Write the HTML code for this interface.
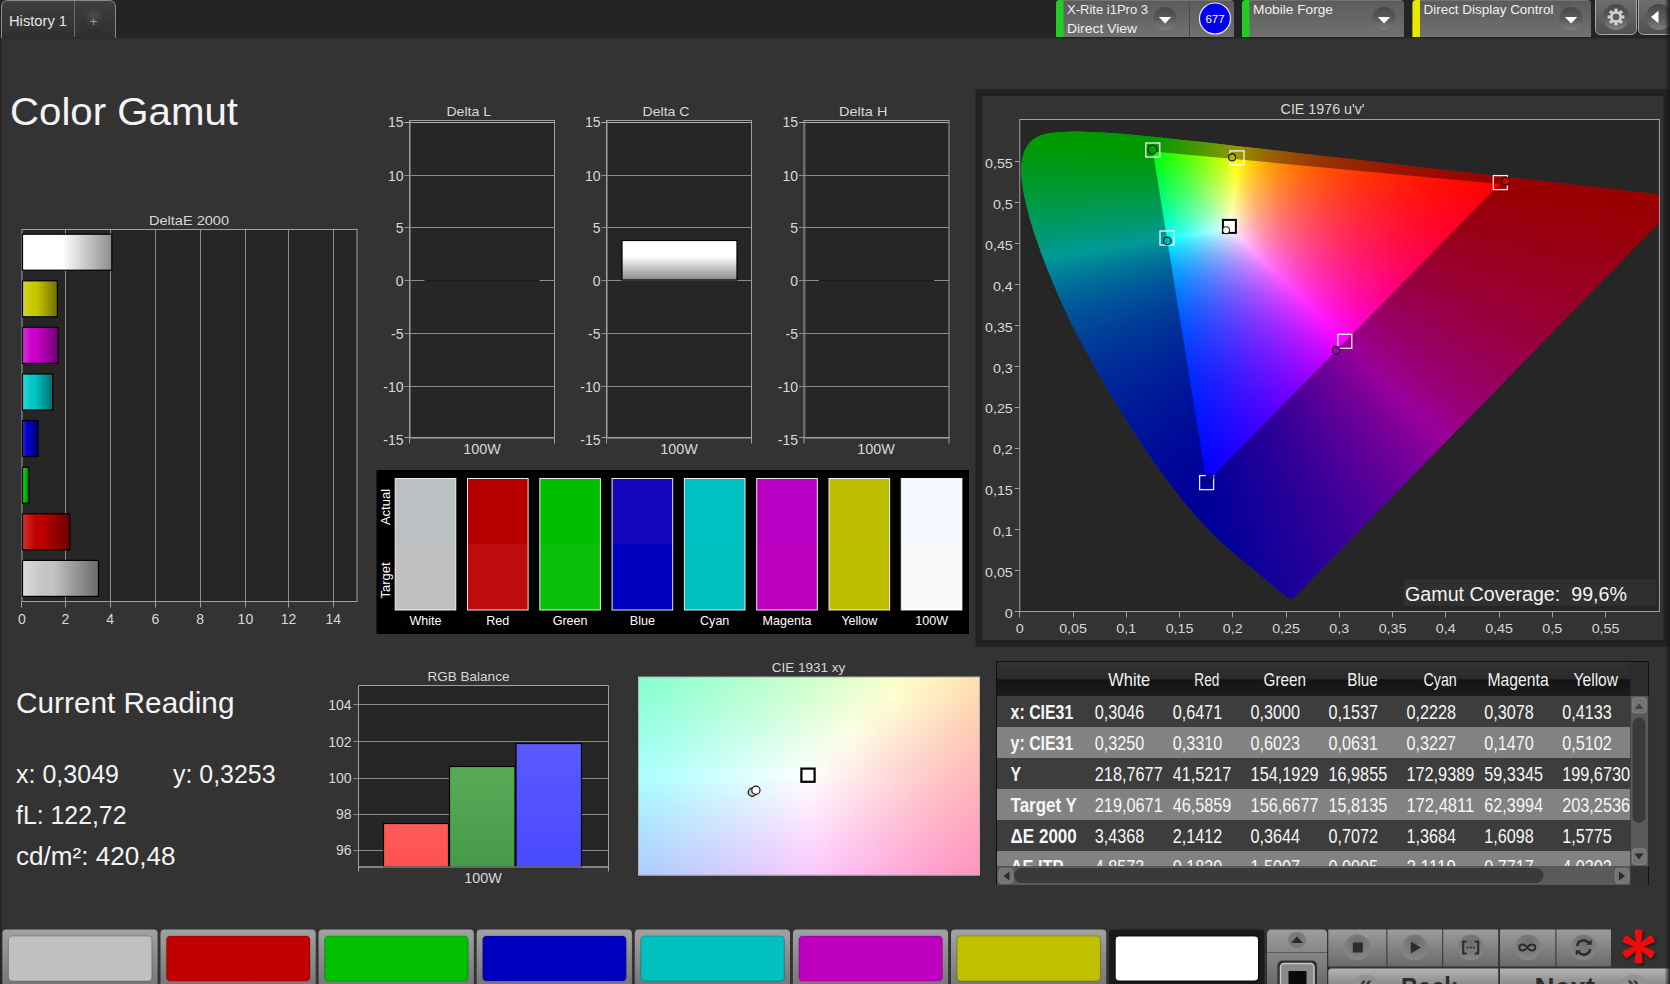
<!DOCTYPE html>
<html lang="en"><head><meta charset="utf-8"><title>Color Gamut</title>
<style>html,body{margin:0;padding:0;background:#333;overflow:hidden}svg text{white-space:pre}</style>
</head><body>
<svg width="1670" height="984" viewBox="0 0 1670 984" font-family='"Liberation Sans", sans-serif' style="display:block">
<defs>
<linearGradient id="tabg" x1="0" y1="0" x2="0" y2="1"><stop offset="0" stop-color="#3e3e3e"/><stop offset="1" stop-color="#303030"/></linearGradient>
<radialGradient id="plusg" cx="0.5" cy="0.3" r="0.7"><stop offset="0" stop-color="#4a4a4a"/><stop offset="1" stop-color="#2c2c2c"/></radialGradient>
<linearGradient id="devg" x1="0" y1="0" x2="0" y2="1"><stop offset="0" stop-color="#808080"/><stop offset="0.035" stop-color="#5c5c5c"/><stop offset="1" stop-color="#717171"/></linearGradient>
<linearGradient id="ddg" x1="0" y1="0" x2="0" y2="1"><stop offset="0" stop-color="#474747"/><stop offset="0.55" stop-color="#5c5c5c"/><stop offset="1" stop-color="#7e7e7e"/></linearGradient>
<linearGradient id="btng" x1="0" y1="0" x2="0" y2="1"><stop offset="0" stop-color="#727272"/><stop offset="1" stop-color="#505050"/></linearGradient>
<linearGradient id="de0" x1="0" y1="0" x2="1" y2="0"><stop offset="0" stop-color="#ffffff"/><stop offset="0.28" stop-color="#ffffff"/><stop offset="0.45" stop-color="#ffffff"/><stop offset="1" stop-color="#8c8c8c"/></linearGradient>
<linearGradient id="de1" x1="0" y1="0" x2="1" y2="0"><stop offset="0" stop-color="#d4d430"/><stop offset="0.28" stop-color="#c8c800"/><stop offset="0.4" stop-color="#c8c800"/><stop offset="1" stop-color="#6e6e00"/></linearGradient>
<linearGradient id="de2" x1="0" y1="0" x2="1" y2="0"><stop offset="0" stop-color="#d430d4"/><stop offset="0.28" stop-color="#c800c8"/><stop offset="0.4" stop-color="#c800c8"/><stop offset="1" stop-color="#6e006e"/></linearGradient>
<linearGradient id="de3" x1="0" y1="0" x2="1" y2="0"><stop offset="0" stop-color="#30d4d4"/><stop offset="0.28" stop-color="#00c8c8"/><stop offset="0.4" stop-color="#00c8c8"/><stop offset="1" stop-color="#006e6e"/></linearGradient>
<linearGradient id="de4" x1="0" y1="0" x2="1" y2="0"><stop offset="0" stop-color="#3030d4"/><stop offset="0.28" stop-color="#0000c8"/><stop offset="0.4" stop-color="#0000c8"/><stop offset="1" stop-color="#00006e"/></linearGradient>
<linearGradient id="de5" x1="0" y1="0" x2="1" y2="0"><stop offset="0" stop-color="#30d430"/><stop offset="0.28" stop-color="#00c800"/><stop offset="0.4" stop-color="#00c800"/><stop offset="1" stop-color="#006e00"/></linearGradient>
<linearGradient id="de6" x1="0" y1="0" x2="1" y2="0"><stop offset="0" stop-color="#d03030"/><stop offset="0.28" stop-color="#c00000"/><stop offset="0.4" stop-color="#c00000"/><stop offset="1" stop-color="#6a0000"/></linearGradient>
<linearGradient id="de7" x1="0" y1="0" x2="1" y2="0"><stop offset="0" stop-color="#dcdcdc"/><stop offset="0.28" stop-color="#c4c4c4"/><stop offset="0.4" stop-color="#c4c4c4"/><stop offset="1" stop-color="#6a6a6a"/></linearGradient>
<linearGradient id="dcb" x1="0" y1="0" x2="0" y2="1"><stop offset="0" stop-color="#ffffff"/><stop offset="0.4" stop-color="#ffffff"/><stop offset="1" stop-color="#8a8a8a"/></linearGradient>
<clipPath id="cp"><rect x="1019.8" y="119.5" width="639.6000000000001" height="492.0"/></clipPath>
<clipPath id="cl" clip-path="url(#cp)"><polygon points="1293.4,598.1 1293.3,598.1 1293.2,598.1 1293.1,598.1 1293.0,598.2 1292.9,598.3 1292.7,598.2 1292.5,598.2 1292.4,598.3 1292.3,598.5 1292.2,598.6 1292.0,598.6 1291.8,598.6 1291.5,598.6 1291.1,598.6 1290.8,598.6 1290.5,598.6 1290.1,598.5 1289.7,598.4 1289.2,598.2 1288.4,597.8 1287.4,597.2 1286.3,596.4 1285.0,595.5 1283.6,594.4 1281.9,593.1 1279.9,591.6 1277.7,589.8 1275.3,587.8 1272.7,585.5 1269.8,583.1 1266.6,580.4 1263.1,577.5 1259.1,574.2 1254.8,570.6 1250.0,566.6 1244.8,562.4 1239.3,557.8 1233.2,552.6 1226.7,546.8 1219.7,540.3 1212.2,533.2 1204.2,524.8 1195.1,514.8 1184.7,502.4 1173.3,488.1 1161.2,472.0 1148.5,454.0 1135.2,434.2 1121.7,412.7 1108.0,390.1 1094.5,366.8 1081.5,343.1 1069.5,319.5 1059.0,296.7 1049.8,274.9 1041.8,254.4 1035.2,235.8 1030.0,219.2 1026.2,204.7 1023.5,191.9 1021.9,180.9 1021.3,171.5 1021.6,163.4 1022.7,156.4 1024.7,150.4 1027.5,145.4 1030.9,141.3 1035.0,138.2 1039.5,135.8 1044.4,134.2 1049.7,133.1 1055.3,132.4 1061.1,132.0 1067.1,131.7 1073.1,131.6 1079.2,131.6 1085.2,131.7 1091.4,131.9 1097.7,132.2 1104.2,132.6 1110.8,133.0 1117.7,133.5 1124.8,134.1 1132.2,134.7 1139.8,135.5 1147.8,136.2 1156.0,137.1 1164.6,138.0 1173.5,138.9 1182.9,140.0 1192.6,141.0 1202.7,142.1 1213.2,143.3 1224.1,144.6 1235.5,145.9 1247.4,147.2 1259.7,148.6 1272.4,150.1 1285.6,151.6 1299.2,153.2 1313.2,154.8 1327.6,156.4 1342.4,158.1 1357.5,159.8 1372.8,161.6 1388.4,163.4 1404.1,165.2 1419.5,167.0 1434.6,168.7 1449.5,170.4 1464.5,172.1 1479.1,173.8 1493.2,175.4 1506.6,177.0 1519.4,178.4 1531.7,179.8 1543.2,181.2 1554.1,182.4 1564.3,183.6 1573.8,184.7 1582.7,185.7 1590.9,186.6 1598.6,187.5 1605.7,188.3 1612.5,189.1 1618.9,189.8 1624.9,190.5 1630.6,191.2 1635.8,191.8 1640.7,192.3 1645.2,192.9 1649.4,193.3 1653.1,193.8 1656.4,194.1 1659.3,194.5 1662.0,194.8 1664.5,195.1 1666.6,195.3 1668.6,195.5 1670.3,195.7 1671.7,195.9 1672.9,196.0 1674.0,196.2 1675.0,196.3 1676.0,196.4 1676.9,196.5 1677.7,196.6 1678.4,196.7 1679.3,196.8 1680.0,196.9 1680.8,197.0 1681.5,197.0 1682.1,197.1 1682.5,197.2 1682.8,197.2 1683.1,197.2 1683.3,197.2 1683.5,197.3 1683.6,197.3 1683.7,197.3"/></clipPath>
<linearGradient id="c0" gradientUnits="userSpaceOnUse" x1="1049" x2="1113" y1="0" y2="0"><stop offset="0.000" stop-color="#00ff00"/><stop offset="0.333" stop-color="#00ff00"/><stop offset="0.667" stop-color="#00ff00"/><stop offset="1.000" stop-color="#00ff00"/></linearGradient>
<linearGradient id="c1" gradientUnits="userSpaceOnUse" x1="1041" x2="1137" y1="0" y2="0"><stop offset="0.000" stop-color="#00ff00"/><stop offset="0.250" stop-color="#00ff00"/><stop offset="0.500" stop-color="#00ff00"/><stop offset="0.750" stop-color="#00ff00"/><stop offset="0.985" stop-color="#00ff00"/></linearGradient>
<linearGradient id="c2" gradientUnits="userSpaceOnUse" x1="1036" x2="1157" y1="0" y2="0"><stop offset="0.000" stop-color="#00ff00"/><stop offset="0.200" stop-color="#00ff00"/><stop offset="0.400" stop-color="#00ff00"/><stop offset="0.600" stop-color="#00ff00"/><stop offset="0.800" stop-color="#00ff00"/><stop offset="0.839" stop-color="#00ff00"/><stop offset="0.947" stop-color="#00ff00"/><stop offset="1.000" stop-color="#0eff00"/></linearGradient>
<linearGradient id="c3" gradientUnits="userSpaceOnUse" x1="1033" x2="1176" y1="0" y2="0"><stop offset="0.000" stop-color="#00ff00"/><stop offset="0.167" stop-color="#00ff00"/><stop offset="0.333" stop-color="#00ff00"/><stop offset="0.500" stop-color="#00ff00"/><stop offset="0.667" stop-color="#00ff00"/><stop offset="0.745" stop-color="#00ff00"/><stop offset="0.825" stop-color="#00ff00"/><stop offset="1.000" stop-color="#3cff00"/></linearGradient>
<linearGradient id="c4" gradientUnits="userSpaceOnUse" x1="1030" x2="1194" y1="0" y2="0"><stop offset="0.000" stop-color="#00ff00"/><stop offset="0.143" stop-color="#00ff00"/><stop offset="0.286" stop-color="#00ff00"/><stop offset="0.429" stop-color="#00ff00"/><stop offset="0.571" stop-color="#00ff00"/><stop offset="0.680" stop-color="#00ff00"/><stop offset="0.714" stop-color="#00ff00"/><stop offset="0.739" stop-color="#00ff00"/><stop offset="0.857" stop-color="#2eff00"/><stop offset="1.000" stop-color="#6cff00"/></linearGradient>
<linearGradient id="c5" gradientUnits="userSpaceOnUse" x1="1028" x2="1212" y1="0" y2="0"><stop offset="0.000" stop-color="#00ff04"/><stop offset="0.125" stop-color="#00ff00"/><stop offset="0.250" stop-color="#00ff00"/><stop offset="0.375" stop-color="#00ff00"/><stop offset="0.500" stop-color="#00ff00"/><stop offset="0.625" stop-color="#00ff00"/><stop offset="0.672" stop-color="#00ff00"/><stop offset="0.750" stop-color="#22ff00"/><stop offset="0.875" stop-color="#5eff00"/><stop offset="1.000" stop-color="#a2ff00"/></linearGradient>
<linearGradient id="c6" gradientUnits="userSpaceOnUse" x1="1027" x2="1230" y1="0" y2="0"><stop offset="0.000" stop-color="#00ff07"/><stop offset="0.125" stop-color="#00ff03"/><stop offset="0.227" stop-color="#00ff00"/><stop offset="0.250" stop-color="#00ff00"/><stop offset="0.375" stop-color="#00ff00"/><stop offset="0.500" stop-color="#00ff00"/><stop offset="0.584" stop-color="#00ff00"/><stop offset="0.615" stop-color="#00ff00"/><stop offset="0.625" stop-color="#05ff00"/><stop offset="0.750" stop-color="#43ff00"/><stop offset="0.875" stop-color="#8bff00"/><stop offset="1.000" stop-color="#dfff00"/></linearGradient>
<linearGradient id="c7" gradientUnits="userSpaceOnUse" x1="1025" x2="1247" y1="0" y2="0"><stop offset="0.000" stop-color="#00ff0a"/><stop offset="0.111" stop-color="#00ff07"/><stop offset="0.222" stop-color="#00ff03"/><stop offset="0.313" stop-color="#00ff00"/><stop offset="0.333" stop-color="#00ff00"/><stop offset="0.444" stop-color="#00ff00"/><stop offset="0.552" stop-color="#00ff00"/><stop offset="0.573" stop-color="#00ff00"/><stop offset="0.667" stop-color="#32ff00"/><stop offset="0.778" stop-color="#76ff00"/><stop offset="0.889" stop-color="#c5ff00"/><stop offset="0.961" stop-color="#ffff00"/><stop offset="1.000" stop-color="#ffe100"/></linearGradient>
<linearGradient id="c8" gradientUnits="userSpaceOnUse" x1="1024" x2="1265" y1="0" y2="0"><stop offset="0.000" stop-color="#00ff0e"/><stop offset="0.100" stop-color="#00ff0b"/><stop offset="0.200" stop-color="#00ff07"/><stop offset="0.300" stop-color="#00ff03"/><stop offset="0.381" stop-color="#00ff00"/><stop offset="0.400" stop-color="#00ff00"/><stop offset="0.500" stop-color="#00ff00"/><stop offset="0.521" stop-color="#00ff00"/><stop offset="0.533" stop-color="#00ff00"/><stop offset="0.600" stop-color="#27ff00"/><stop offset="0.700" stop-color="#68ff00"/><stop offset="0.800" stop-color="#b2ff00"/><stop offset="0.889" stop-color="#ffff00"/><stop offset="0.900" stop-color="#fff500"/><stop offset="1.000" stop-color="#ffb100"/></linearGradient>
<linearGradient id="c9" gradientUnits="userSpaceOnUse" x1="1023" x2="1282" y1="0" y2="0"><stop offset="0.000" stop-color="#00ff11"/><stop offset="0.100" stop-color="#00ff0e"/><stop offset="0.200" stop-color="#00ff0a"/><stop offset="0.300" stop-color="#00ff07"/><stop offset="0.400" stop-color="#00ff02"/><stop offset="0.441" stop-color="#00ff00"/><stop offset="0.497" stop-color="#00ff00"/><stop offset="0.600" stop-color="#40ff00"/><stop offset="0.700" stop-color="#8aff00"/><stop offset="0.800" stop-color="#e1ff00"/><stop offset="0.830" stop-color="#ffff00"/><stop offset="0.900" stop-color="#ffc600"/><stop offset="1.000" stop-color="#ff8f00"/></linearGradient>
<linearGradient id="c10" gradientUnits="userSpaceOnUse" x1="1023" x2="1299" y1="0" y2="0"><stop offset="0.000" stop-color="#00ff15"/><stop offset="0.091" stop-color="#00ff12"/><stop offset="0.182" stop-color="#00ff0e"/><stop offset="0.273" stop-color="#00ff0b"/><stop offset="0.364" stop-color="#00ff07"/><stop offset="0.455" stop-color="#00ff02"/><stop offset="0.472" stop-color="#00ff01"/><stop offset="0.492" stop-color="#0dff00"/><stop offset="0.545" stop-color="#32ff00"/><stop offset="0.636" stop-color="#79ff00"/><stop offset="0.727" stop-color="#cbff00"/><stop offset="0.779" stop-color="#ffff00"/><stop offset="0.818" stop-color="#ffd900"/><stop offset="0.909" stop-color="#ff9d00"/><stop offset="1.000" stop-color="#ff7500"/></linearGradient>
<linearGradient id="c11" gradientUnits="userSpaceOnUse" x1="1022" x2="1317" y1="0" y2="0"><stop offset="0.000" stop-color="#00ff18"/><stop offset="0.083" stop-color="#00ff15"/><stop offset="0.167" stop-color="#00ff12"/><stop offset="0.250" stop-color="#00ff0f"/><stop offset="0.333" stop-color="#00ff0b"/><stop offset="0.417" stop-color="#00ff07"/><stop offset="0.446" stop-color="#00ff05"/><stop offset="0.453" stop-color="#05ff05"/><stop offset="0.500" stop-color="#27ff02"/><stop offset="0.536" stop-color="#43ff00"/><stop offset="0.583" stop-color="#6bff00"/><stop offset="0.667" stop-color="#b9ff00"/><stop offset="0.731" stop-color="#ffff00"/><stop offset="0.750" stop-color="#ffeb00"/><stop offset="0.833" stop-color="#ffa800"/><stop offset="0.917" stop-color="#ff7e00"/><stop offset="1.000" stop-color="#ff6000"/></linearGradient>
<linearGradient id="c12" gradientUnits="userSpaceOnUse" x1="1021" x2="1334" y1="0" y2="0"><stop offset="0.000" stop-color="#00ff1b"/><stop offset="0.077" stop-color="#00ff19"/><stop offset="0.154" stop-color="#00ff16"/><stop offset="0.231" stop-color="#00ff13"/><stop offset="0.308" stop-color="#00ff10"/><stop offset="0.385" stop-color="#00ff0c"/><stop offset="0.424" stop-color="#00ff0a"/><stop offset="0.437" stop-color="#09ff09"/><stop offset="0.462" stop-color="#1cff08"/><stop offset="0.538" stop-color="#5dff03"/><stop offset="0.577" stop-color="#81ff00"/><stop offset="0.615" stop-color="#a8ff00"/><stop offset="0.692" stop-color="#ffff00"/><stop offset="0.769" stop-color="#ffb500"/><stop offset="0.846" stop-color="#ff8700"/><stop offset="0.923" stop-color="#ff6700"/><stop offset="1.000" stop-color="#ff4f00"/></linearGradient>
<linearGradient id="c13" gradientUnits="userSpaceOnUse" x1="1021" x2="1352" y1="0" y2="0"><stop offset="0.000" stop-color="#00ff1f"/><stop offset="0.077" stop-color="#00ff1c"/><stop offset="0.154" stop-color="#00ff1a"/><stop offset="0.231" stop-color="#00ff17"/><stop offset="0.308" stop-color="#00ff13"/><stop offset="0.385" stop-color="#00ff0f"/><stop offset="0.402" stop-color="#00ff0e"/><stop offset="0.419" stop-color="#0dff0d"/><stop offset="0.462" stop-color="#31ff0b"/><stop offset="0.538" stop-color="#7aff06"/><stop offset="0.610" stop-color="#c9ff00"/><stop offset="0.615" stop-color="#cfff00"/><stop offset="0.654" stop-color="#ffff00"/><stop offset="0.692" stop-color="#ffd300"/><stop offset="0.769" stop-color="#ff9700"/><stop offset="0.846" stop-color="#ff7000"/><stop offset="0.923" stop-color="#ff5500"/><stop offset="1.000" stop-color="#ff4000"/></linearGradient>
<linearGradient id="c14" gradientUnits="userSpaceOnUse" x1="1021" x2="1369" y1="0" y2="0"><stop offset="0.000" stop-color="#00ff22"/><stop offset="0.071" stop-color="#00ff20"/><stop offset="0.143" stop-color="#00ff1e"/><stop offset="0.214" stop-color="#00ff1b"/><stop offset="0.286" stop-color="#00ff18"/><stop offset="0.357" stop-color="#00ff14"/><stop offset="0.384" stop-color="#00ff13"/><stop offset="0.404" stop-color="#12ff12"/><stop offset="0.429" stop-color="#27ff10"/><stop offset="0.500" stop-color="#6dff0c"/><stop offset="0.571" stop-color="#beff06"/><stop offset="0.621" stop-color="#ffff02"/><stop offset="0.642" stop-color="#ffe400"/><stop offset="0.714" stop-color="#ffa200"/><stop offset="0.786" stop-color="#ff7800"/><stop offset="0.857" stop-color="#ff5b00"/><stop offset="0.929" stop-color="#ff4600"/><stop offset="1.000" stop-color="#ff3500"/></linearGradient>
<linearGradient id="c15" gradientUnits="userSpaceOnUse" x1="1020" x2="1387" y1="0" y2="0"><stop offset="0.000" stop-color="#00ff26"/><stop offset="0.067" stop-color="#00ff24"/><stop offset="0.133" stop-color="#00ff21"/><stop offset="0.200" stop-color="#00ff1f"/><stop offset="0.267" stop-color="#00ff1c"/><stop offset="0.333" stop-color="#00ff19"/><stop offset="0.367" stop-color="#00ff17"/><stop offset="0.392" stop-color="#16ff16"/><stop offset="0.400" stop-color="#1eff15"/><stop offset="0.467" stop-color="#62ff11"/><stop offset="0.533" stop-color="#b0ff0d"/><stop offset="0.591" stop-color="#ffff08"/><stop offset="0.600" stop-color="#fff207"/><stop offset="0.667" stop-color="#ffac00"/><stop offset="0.733" stop-color="#ff7f00"/><stop offset="0.800" stop-color="#ff6000"/><stop offset="0.867" stop-color="#ff4a00"/><stop offset="0.933" stop-color="#ff3800"/><stop offset="1.000" stop-color="#ff2b00"/></linearGradient>
<linearGradient id="c16" gradientUnits="userSpaceOnUse" x1="1020" x2="1404" y1="0" y2="0"><stop offset="0.000" stop-color="#00ff29"/><stop offset="0.067" stop-color="#00ff27"/><stop offset="0.133" stop-color="#00ff25"/><stop offset="0.200" stop-color="#00ff23"/><stop offset="0.267" stop-color="#00ff20"/><stop offset="0.333" stop-color="#00ff1d"/><stop offset="0.352" stop-color="#00ff1c"/><stop offset="0.380" stop-color="#1aff1a"/><stop offset="0.400" stop-color="#2fff19"/><stop offset="0.467" stop-color="#7aff15"/><stop offset="0.533" stop-color="#d1ff10"/><stop offset="0.564" stop-color="#ffff0e"/><stop offset="0.600" stop-color="#ffd009"/><stop offset="0.667" stop-color="#ff9402"/><stop offset="0.696" stop-color="#ff8100"/><stop offset="0.733" stop-color="#ff6d00"/><stop offset="0.800" stop-color="#ff5200"/><stop offset="0.867" stop-color="#ff3e00"/><stop offset="0.933" stop-color="#ff2f00"/><stop offset="1.000" stop-color="#ff2200"/></linearGradient>
<linearGradient id="c17" gradientUnits="userSpaceOnUse" x1="1020" x2="1421" y1="0" y2="0"><stop offset="0.000" stop-color="#00ff2d"/><stop offset="0.062" stop-color="#00ff2b"/><stop offset="0.125" stop-color="#00ff29"/><stop offset="0.188" stop-color="#00ff27"/><stop offset="0.250" stop-color="#00ff24"/><stop offset="0.312" stop-color="#00ff22"/><stop offset="0.338" stop-color="#00ff21"/><stop offset="0.368" stop-color="#1fff1f"/><stop offset="0.375" stop-color="#26ff1f"/><stop offset="0.438" stop-color="#6eff1b"/><stop offset="0.500" stop-color="#c1ff17"/><stop offset="0.540" stop-color="#ffff14"/><stop offset="0.562" stop-color="#ffde10"/><stop offset="0.625" stop-color="#ff9e07"/><stop offset="0.688" stop-color="#ff7402"/><stop offset="0.720" stop-color="#ff6400"/><stop offset="0.750" stop-color="#ff5800"/><stop offset="0.812" stop-color="#ff4200"/><stop offset="0.875" stop-color="#ff3200"/><stop offset="0.938" stop-color="#ff2500"/><stop offset="1.000" stop-color="#ff1b00"/></linearGradient>
<linearGradient id="c18" gradientUnits="userSpaceOnUse" x1="1020" x2="1439" y1="0" y2="0"><stop offset="0.000" stop-color="#00ff30"/><stop offset="0.059" stop-color="#00ff2f"/><stop offset="0.118" stop-color="#00ff2d"/><stop offset="0.176" stop-color="#00ff2b"/><stop offset="0.235" stop-color="#00ff29"/><stop offset="0.294" stop-color="#00ff27"/><stop offset="0.324" stop-color="#00ff25"/><stop offset="0.353" stop-color="#1fff24"/><stop offset="0.357" stop-color="#24ff24"/><stop offset="0.412" stop-color="#64ff21"/><stop offset="0.471" stop-color="#b6ff1d"/><stop offset="0.516" stop-color="#ffff1a"/><stop offset="0.529" stop-color="#ffea17"/><stop offset="0.588" stop-color="#ffa60d"/><stop offset="0.647" stop-color="#ff7a06"/><stop offset="0.706" stop-color="#ff5c02"/><stop offset="0.740" stop-color="#ff4e00"/><stop offset="0.765" stop-color="#ff4600"/><stop offset="0.824" stop-color="#ff3500"/><stop offset="0.882" stop-color="#ff2800"/><stop offset="0.941" stop-color="#ff1d00"/><stop offset="1.000" stop-color="#ff1400"/></linearGradient>
<linearGradient id="c19" gradientUnits="userSpaceOnUse" x1="1020" x2="1456" y1="0" y2="0"><stop offset="0.000" stop-color="#00ff34"/><stop offset="0.059" stop-color="#00ff32"/><stop offset="0.118" stop-color="#00ff31"/><stop offset="0.176" stop-color="#00ff2f"/><stop offset="0.235" stop-color="#00ff2d"/><stop offset="0.294" stop-color="#00ff2b"/><stop offset="0.312" stop-color="#00ff2a"/><stop offset="0.348" stop-color="#28ff28"/><stop offset="0.353" stop-color="#2eff28"/><stop offset="0.412" stop-color="#7aff25"/><stop offset="0.471" stop-color="#d4ff22"/><stop offset="0.496" stop-color="#ffff20"/><stop offset="0.529" stop-color="#ffcc18"/><stop offset="0.588" stop-color="#ff910e"/><stop offset="0.647" stop-color="#ff6b08"/><stop offset="0.706" stop-color="#ff5003"/><stop offset="0.760" stop-color="#ff3d00"/><stop offset="0.765" stop-color="#ff3c00"/><stop offset="0.824" stop-color="#ff2c00"/><stop offset="0.882" stop-color="#ff2000"/><stop offset="0.941" stop-color="#ff1600"/><stop offset="1.000" stop-color="#ff0e00"/></linearGradient>
<linearGradient id="c20" gradientUnits="userSpaceOnUse" x1="1020" x2="1474" y1="0" y2="0"><stop offset="0.000" stop-color="#00ff37"/><stop offset="0.056" stop-color="#00ff36"/><stop offset="0.111" stop-color="#00ff35"/><stop offset="0.167" stop-color="#00ff33"/><stop offset="0.222" stop-color="#00ff32"/><stop offset="0.278" stop-color="#00ff30"/><stop offset="0.301" stop-color="#00ff2f"/><stop offset="0.333" stop-color="#27ff2e"/><stop offset="0.339" stop-color="#2dff2d"/><stop offset="0.389" stop-color="#70ff2b"/><stop offset="0.444" stop-color="#c7ff28"/><stop offset="0.476" stop-color="#ffff26"/><stop offset="0.500" stop-color="#ffd71f"/><stop offset="0.556" stop-color="#ff9813"/><stop offset="0.611" stop-color="#ff700c"/><stop offset="0.667" stop-color="#ff5407"/><stop offset="0.722" stop-color="#ff3f03"/><stop offset="0.777" stop-color="#ff2f00"/><stop offset="0.833" stop-color="#ff2200"/><stop offset="0.889" stop-color="#ff1800"/><stop offset="0.944" stop-color="#ff1000"/><stop offset="1.000" stop-color="#ff0900"/></linearGradient>
<linearGradient id="c21" gradientUnits="userSpaceOnUse" x1="1020" x2="1491" y1="0" y2="0"><stop offset="0.000" stop-color="#00ff3b"/><stop offset="0.053" stop-color="#00ff3a"/><stop offset="0.105" stop-color="#00ff39"/><stop offset="0.158" stop-color="#00ff38"/><stop offset="0.211" stop-color="#00ff36"/><stop offset="0.263" stop-color="#00ff35"/><stop offset="0.290" stop-color="#00ff34"/><stop offset="0.316" stop-color="#1fff33"/><stop offset="0.331" stop-color="#32ff32"/><stop offset="0.368" stop-color="#67ff31"/><stop offset="0.421" stop-color="#bbff2e"/><stop offset="0.458" stop-color="#ffff2d"/><stop offset="0.474" stop-color="#ffe327"/><stop offset="0.526" stop-color="#ffa019"/><stop offset="0.579" stop-color="#ff7511"/><stop offset="0.632" stop-color="#ff580b"/><stop offset="0.684" stop-color="#ff4206"/><stop offset="0.737" stop-color="#ff3203"/><stop offset="0.789" stop-color="#ff2500"/><stop offset="0.795" stop-color="#ff2400"/><stop offset="0.842" stop-color="#ff1a00"/><stop offset="0.895" stop-color="#ff1200"/><stop offset="0.947" stop-color="#ff0a00"/><stop offset="1.000" stop-color="#ff0400"/></linearGradient>
<linearGradient id="c22" gradientUnits="userSpaceOnUse" x1="1020" x2="1509" y1="0" y2="0"><stop offset="0.000" stop-color="#00ff3e"/><stop offset="0.053" stop-color="#00ff3e"/><stop offset="0.105" stop-color="#00ff3d"/><stop offset="0.158" stop-color="#00ff3c"/><stop offset="0.211" stop-color="#00ff3b"/><stop offset="0.263" stop-color="#00ff39"/><stop offset="0.280" stop-color="#00ff39"/><stop offset="0.316" stop-color="#2eff38"/><stop offset="0.323" stop-color="#37ff37"/><stop offset="0.368" stop-color="#7cff36"/><stop offset="0.421" stop-color="#d8ff34"/><stop offset="0.441" stop-color="#ffff33"/><stop offset="0.474" stop-color="#ffc727"/><stop offset="0.526" stop-color="#ff8d1a"/><stop offset="0.579" stop-color="#ff6711"/><stop offset="0.632" stop-color="#ff4d0b"/><stop offset="0.684" stop-color="#ff3907"/><stop offset="0.737" stop-color="#ff2a04"/><stop offset="0.789" stop-color="#ff1e01"/><stop offset="0.809" stop-color="#ff1a00"/><stop offset="0.842" stop-color="#ff1400"/><stop offset="0.895" stop-color="#ff0c00"/><stop offset="0.947" stop-color="#ff0600"/><stop offset="0.997" stop-color="#ff0000"/></linearGradient>
<linearGradient id="c23" gradientUnits="userSpaceOnUse" x1="1020" x2="1526" y1="0" y2="0"><stop offset="0.000" stop-color="#00ff42"/><stop offset="0.050" stop-color="#00ff41"/><stop offset="0.100" stop-color="#00ff41"/><stop offset="0.150" stop-color="#00ff40"/><stop offset="0.200" stop-color="#00ff3f"/><stop offset="0.250" stop-color="#00ff3e"/><stop offset="0.272" stop-color="#00ff3e"/><stop offset="0.300" stop-color="#26ff3d"/><stop offset="0.316" stop-color="#3dff3d"/><stop offset="0.350" stop-color="#72ff3c"/><stop offset="0.400" stop-color="#cbff3a"/><stop offset="0.426" stop-color="#ffff39"/><stop offset="0.450" stop-color="#ffd22f"/><stop offset="0.500" stop-color="#ff9420"/><stop offset="0.550" stop-color="#ff6c16"/><stop offset="0.600" stop-color="#ff510f"/><stop offset="0.650" stop-color="#ff3c0a"/><stop offset="0.700" stop-color="#ff2d06"/><stop offset="0.750" stop-color="#ff2003"/><stop offset="0.800" stop-color="#ff1601"/><stop offset="0.824" stop-color="#ff1200"/><stop offset="0.850" stop-color="#ff0e00"/><stop offset="0.900" stop-color="#ff0700"/><stop offset="0.950" stop-color="#ff0100"/><stop offset="0.960" stop-color="#ff0000"/><stop offset="1.000" stop-color="#ff0000"/></linearGradient>
<linearGradient id="c24" gradientUnits="userSpaceOnUse" x1="1020" x2="1544" y1="0" y2="0"><stop offset="0.000" stop-color="#00ff46"/><stop offset="0.048" stop-color="#00ff45"/><stop offset="0.095" stop-color="#00ff45"/><stop offset="0.143" stop-color="#00ff44"/><stop offset="0.190" stop-color="#00ff44"/><stop offset="0.238" stop-color="#00ff43"/><stop offset="0.263" stop-color="#00ff43"/><stop offset="0.286" stop-color="#20ff43"/><stop offset="0.309" stop-color="#42ff42"/><stop offset="0.333" stop-color="#6aff42"/><stop offset="0.381" stop-color="#c0ff41"/><stop offset="0.411" stop-color="#ffff40"/><stop offset="0.429" stop-color="#ffdc37"/><stop offset="0.476" stop-color="#ff9a26"/><stop offset="0.524" stop-color="#ff711b"/><stop offset="0.571" stop-color="#ff5413"/><stop offset="0.619" stop-color="#ff3f0e"/><stop offset="0.667" stop-color="#ff2f09"/><stop offset="0.714" stop-color="#ff2206"/><stop offset="0.762" stop-color="#ff1803"/><stop offset="0.810" stop-color="#ff0f01"/><stop offset="0.837" stop-color="#ff0b00"/><stop offset="0.857" stop-color="#ff0800"/><stop offset="0.905" stop-color="#ff0200"/><stop offset="0.923" stop-color="#ff0000"/><stop offset="0.952" stop-color="#ff0000"/><stop offset="0.961" stop-color="#ff0000"/><stop offset="1.000" stop-color="#ff0000"/></linearGradient>
<linearGradient id="c25" gradientUnits="userSpaceOnUse" x1="1021" x2="1561" y1="0" y2="0"><stop offset="0.000" stop-color="#00ff49"/><stop offset="0.048" stop-color="#00ff49"/><stop offset="0.095" stop-color="#00ff49"/><stop offset="0.143" stop-color="#00ff49"/><stop offset="0.190" stop-color="#00ff48"/><stop offset="0.238" stop-color="#00ff48"/><stop offset="0.254" stop-color="#00ff48"/><stop offset="0.286" stop-color="#2fff48"/><stop offset="0.302" stop-color="#48ff48"/><stop offset="0.333" stop-color="#7eff47"/><stop offset="0.381" stop-color="#dcff47"/><stop offset="0.396" stop-color="#ffff47"/><stop offset="0.429" stop-color="#ffc336"/><stop offset="0.476" stop-color="#ff8925"/><stop offset="0.524" stop-color="#ff641b"/><stop offset="0.571" stop-color="#ff4a13"/><stop offset="0.619" stop-color="#ff370e"/><stop offset="0.667" stop-color="#ff280a"/><stop offset="0.714" stop-color="#ff1c07"/><stop offset="0.762" stop-color="#ff1304"/><stop offset="0.810" stop-color="#ff0b02"/><stop offset="0.850" stop-color="#ff0500"/><stop offset="0.857" stop-color="#ff0400"/><stop offset="0.890" stop-color="#ff0000"/><stop offset="0.905" stop-color="#ff0000"/><stop offset="0.908" stop-color="#ff0000"/><stop offset="0.952" stop-color="#ff0000"/><stop offset="1.000" stop-color="#ff0000"/></linearGradient>
<linearGradient id="c26" gradientUnits="userSpaceOnUse" x1="1021" x2="1578" y1="0" y2="0"><stop offset="0.000" stop-color="#00ff4d"/><stop offset="0.045" stop-color="#00ff4d"/><stop offset="0.091" stop-color="#00ff4d"/><stop offset="0.136" stop-color="#00ff4d"/><stop offset="0.182" stop-color="#00ff4d"/><stop offset="0.227" stop-color="#00ff4d"/><stop offset="0.247" stop-color="#00ff4d"/><stop offset="0.273" stop-color="#27ff4d"/><stop offset="0.296" stop-color="#4dff4d"/><stop offset="0.318" stop-color="#75ff4d"/><stop offset="0.364" stop-color="#d0ff4d"/><stop offset="0.384" stop-color="#ffff4d"/><stop offset="0.409" stop-color="#ffcc3e"/><stop offset="0.455" stop-color="#ff8f2c"/><stop offset="0.500" stop-color="#ff6820"/><stop offset="0.545" stop-color="#ff4d18"/><stop offset="0.591" stop-color="#ff3912"/><stop offset="0.636" stop-color="#ff2a0d"/><stop offset="0.682" stop-color="#ff1e09"/><stop offset="0.727" stop-color="#ff1406"/><stop offset="0.773" stop-color="#ff0c04"/><stop offset="0.818" stop-color="#ff0502"/><stop offset="0.859" stop-color="#ff0000"/><stop offset="0.862" stop-color="#ff0000"/><stop offset="0.909" stop-color="#ff0000"/><stop offset="0.955" stop-color="#ff0000"/><stop offset="1.000" stop-color="#ff0000"/></linearGradient>
<linearGradient id="c27" gradientUnits="userSpaceOnUse" x1="1021" x2="1596" y1="0" y2="0"><stop offset="0.000" stop-color="#00ff51"/><stop offset="0.043" stop-color="#00ff51"/><stop offset="0.087" stop-color="#00ff51"/><stop offset="0.130" stop-color="#00ff52"/><stop offset="0.174" stop-color="#00ff52"/><stop offset="0.217" stop-color="#00ff52"/><stop offset="0.240" stop-color="#00ff53"/><stop offset="0.261" stop-color="#21ff53"/><stop offset="0.290" stop-color="#53ff53"/><stop offset="0.304" stop-color="#6dff53"/><stop offset="0.348" stop-color="#c7ff54"/><stop offset="0.372" stop-color="#ffff54"/><stop offset="0.391" stop-color="#ffd446"/><stop offset="0.435" stop-color="#ff9532"/><stop offset="0.478" stop-color="#ff6c25"/><stop offset="0.522" stop-color="#ff501c"/><stop offset="0.565" stop-color="#ff3c15"/><stop offset="0.609" stop-color="#ff2c10"/><stop offset="0.652" stop-color="#ff200c"/><stop offset="0.696" stop-color="#ff1609"/><stop offset="0.739" stop-color="#ff0d06"/><stop offset="0.783" stop-color="#ff0604"/><stop offset="0.811" stop-color="#ff0202"/><stop offset="0.826" stop-color="#ff0002"/><stop offset="0.829" stop-color="#ff0002"/><stop offset="0.870" stop-color="#ff0000"/><stop offset="0.873" stop-color="#ff0000"/><stop offset="0.913" stop-color="#ff0000"/><stop offset="0.957" stop-color="#ff0000"/><stop offset="1.000" stop-color="#ff0000"/></linearGradient>
<linearGradient id="c28" gradientUnits="userSpaceOnUse" x1="1021" x2="1613" y1="0" y2="0"><stop offset="0.000" stop-color="#00ff55"/><stop offset="0.043" stop-color="#00ff55"/><stop offset="0.087" stop-color="#00ff56"/><stop offset="0.130" stop-color="#00ff56"/><stop offset="0.174" stop-color="#00ff57"/><stop offset="0.217" stop-color="#00ff58"/><stop offset="0.233" stop-color="#00ff58"/><stop offset="0.261" stop-color="#2dff59"/><stop offset="0.285" stop-color="#59ff59"/><stop offset="0.304" stop-color="#7eff5a"/><stop offset="0.348" stop-color="#dfff5b"/><stop offset="0.361" stop-color="#ffff5b"/><stop offset="0.391" stop-color="#ffbf45"/><stop offset="0.435" stop-color="#ff8631"/><stop offset="0.478" stop-color="#ff6125"/><stop offset="0.522" stop-color="#ff481c"/><stop offset="0.565" stop-color="#ff3515"/><stop offset="0.609" stop-color="#ff2610"/><stop offset="0.652" stop-color="#ff1a0c"/><stop offset="0.696" stop-color="#ff1109"/><stop offset="0.739" stop-color="#ff0906"/><stop offset="0.767" stop-color="#ff0505"/><stop offset="0.783" stop-color="#ff0304"/><stop offset="0.802" stop-color="#ff0003"/><stop offset="0.826" stop-color="#ff0002"/><stop offset="0.870" stop-color="#ff0000"/><stop offset="0.884" stop-color="#ff0000"/><stop offset="0.913" stop-color="#ff0000"/><stop offset="0.957" stop-color="#ff0000"/><stop offset="1.000" stop-color="#ff0000"/></linearGradient>
<linearGradient id="c29" gradientUnits="userSpaceOnUse" x1="1022" x2="1631" y1="0" y2="0"><stop offset="0.000" stop-color="#00ff59"/><stop offset="0.042" stop-color="#00ff59"/><stop offset="0.083" stop-color="#00ff5a"/><stop offset="0.125" stop-color="#00ff5b"/><stop offset="0.167" stop-color="#00ff5c"/><stop offset="0.208" stop-color="#00ff5d"/><stop offset="0.226" stop-color="#00ff5d"/><stop offset="0.250" stop-color="#29ff5e"/><stop offset="0.279" stop-color="#5fff5f"/><stop offset="0.292" stop-color="#79ff60"/><stop offset="0.333" stop-color="#d8ff61"/><stop offset="0.349" stop-color="#ffff62"/><stop offset="0.375" stop-color="#ffc54d"/><stop offset="0.417" stop-color="#ff8a37"/><stop offset="0.458" stop-color="#ff6429"/><stop offset="0.500" stop-color="#ff4a20"/><stop offset="0.542" stop-color="#ff3619"/><stop offset="0.583" stop-color="#ff2713"/><stop offset="0.625" stop-color="#ff1c0f"/><stop offset="0.667" stop-color="#ff120b"/><stop offset="0.708" stop-color="#ff0a08"/><stop offset="0.724" stop-color="#ff0707"/><stop offset="0.750" stop-color="#ff0406"/><stop offset="0.775" stop-color="#ff0005"/><stop offset="0.792" stop-color="#ff0004"/><stop offset="0.833" stop-color="#ff0002"/><stop offset="0.875" stop-color="#ff0001"/><stop offset="0.893" stop-color="#ff0000"/><stop offset="0.917" stop-color="#ff0000"/><stop offset="0.958" stop-color="#ff0000"/><stop offset="1.000" stop-color="#ff0000"/></linearGradient>
<linearGradient id="c30" gradientUnits="userSpaceOnUse" x1="1022" x2="1648" y1="0" y2="0"><stop offset="0.000" stop-color="#00ff5c"/><stop offset="0.040" stop-color="#00ff5d"/><stop offset="0.080" stop-color="#00ff5e"/><stop offset="0.120" stop-color="#00ff5f"/><stop offset="0.160" stop-color="#00ff61"/><stop offset="0.200" stop-color="#00ff62"/><stop offset="0.220" stop-color="#00ff63"/><stop offset="0.240" stop-color="#23ff64"/><stop offset="0.275" stop-color="#65ff65"/><stop offset="0.280" stop-color="#71ff66"/><stop offset="0.320" stop-color="#cdff68"/><stop offset="0.339" stop-color="#ffff69"/><stop offset="0.360" stop-color="#ffcd56"/><stop offset="0.400" stop-color="#ff8f3e"/><stop offset="0.440" stop-color="#ff682f"/><stop offset="0.480" stop-color="#ff4d24"/><stop offset="0.520" stop-color="#ff391c"/><stop offset="0.560" stop-color="#ff2916"/><stop offset="0.600" stop-color="#ff1d12"/><stop offset="0.640" stop-color="#ff130e"/><stop offset="0.680" stop-color="#ff0b0b"/><stop offset="0.685" stop-color="#ff0a0a"/><stop offset="0.720" stop-color="#ff0508"/><stop offset="0.751" stop-color="#ff0006"/><stop offset="0.760" stop-color="#ff0006"/><stop offset="0.800" stop-color="#ff0004"/><stop offset="0.840" stop-color="#ff0002"/><stop offset="0.880" stop-color="#ff0001"/><stop offset="0.902" stop-color="#ff0000"/><stop offset="0.920" stop-color="#ff0000"/><stop offset="0.960" stop-color="#ff0000"/><stop offset="1.000" stop-color="#ff0000"/></linearGradient>
<linearGradient id="c31" gradientUnits="userSpaceOnUse" x1="1022" x2="1662" y1="0" y2="0"><stop offset="0.000" stop-color="#00ff60"/><stop offset="0.040" stop-color="#00ff62"/><stop offset="0.080" stop-color="#00ff63"/><stop offset="0.120" stop-color="#00ff64"/><stop offset="0.160" stop-color="#00ff66"/><stop offset="0.200" stop-color="#00ff68"/><stop offset="0.216" stop-color="#00ff69"/><stop offset="0.240" stop-color="#2cff6a"/><stop offset="0.272" stop-color="#6cff6c"/><stop offset="0.280" stop-color="#7eff6c"/><stop offset="0.320" stop-color="#e0ff70"/><stop offset="0.331" stop-color="#ffff71"/><stop offset="0.360" stop-color="#ffbd56"/><stop offset="0.400" stop-color="#ff843e"/><stop offset="0.440" stop-color="#ff602f"/><stop offset="0.480" stop-color="#ff4625"/><stop offset="0.520" stop-color="#ff331d"/><stop offset="0.560" stop-color="#ff2517"/><stop offset="0.600" stop-color="#ff1912"/><stop offset="0.640" stop-color="#ff100e"/><stop offset="0.651" stop-color="#ff0d0d"/><stop offset="0.680" stop-color="#ff080b"/><stop offset="0.720" stop-color="#ff0209"/><stop offset="0.731" stop-color="#ff0008"/><stop offset="0.760" stop-color="#ff0006"/><stop offset="0.800" stop-color="#ff0004"/><stop offset="0.840" stop-color="#ff0003"/><stop offset="0.880" stop-color="#ff0001"/><stop offset="0.916" stop-color="#ff0000"/><stop offset="0.920" stop-color="#ff0000"/><stop offset="0.960" stop-color="#ff0000"/><stop offset="1.000" stop-color="#ff0000"/></linearGradient>
<linearGradient id="c32" gradientUnits="userSpaceOnUse" x1="1023" x2="1662" y1="0" y2="0"><stop offset="0.000" stop-color="#00ff64"/><stop offset="0.040" stop-color="#00ff66"/><stop offset="0.080" stop-color="#00ff67"/><stop offset="0.120" stop-color="#00ff69"/><stop offset="0.160" stop-color="#00ff6b"/><stop offset="0.200" stop-color="#00ff6d"/><stop offset="0.215" stop-color="#00ff6e"/><stop offset="0.240" stop-color="#2dff70"/><stop offset="0.274" stop-color="#73ff73"/><stop offset="0.280" stop-color="#80ff73"/><stop offset="0.320" stop-color="#e4ff77"/><stop offset="0.330" stop-color="#ffff78"/><stop offset="0.360" stop-color="#ffbb5a"/><stop offset="0.400" stop-color="#ff8242"/><stop offset="0.440" stop-color="#ff5e32"/><stop offset="0.480" stop-color="#ff4527"/><stop offset="0.520" stop-color="#ff321f"/><stop offset="0.560" stop-color="#ff2419"/><stop offset="0.600" stop-color="#ff1814"/><stop offset="0.632" stop-color="#ff1111"/><stop offset="0.640" stop-color="#ff0f10"/><stop offset="0.680" stop-color="#ff080d"/><stop offset="0.720" stop-color="#ff010a"/><stop offset="0.728" stop-color="#ff000a"/><stop offset="0.760" stop-color="#ff0008"/><stop offset="0.800" stop-color="#ff0006"/><stop offset="0.840" stop-color="#ff0004"/><stop offset="0.880" stop-color="#ff0002"/><stop offset="0.920" stop-color="#ff0001"/><stop offset="0.950" stop-color="#ff0000"/><stop offset="0.960" stop-color="#ff0000"/><stop offset="1.000" stop-color="#ff0000"/></linearGradient>
<linearGradient id="c33" gradientUnits="userSpaceOnUse" x1="1023" x2="1662" y1="0" y2="0"><stop offset="0.000" stop-color="#00ff68"/><stop offset="0.040" stop-color="#00ff6a"/><stop offset="0.080" stop-color="#00ff6c"/><stop offset="0.120" stop-color="#00ff6e"/><stop offset="0.160" stop-color="#00ff70"/><stop offset="0.200" stop-color="#00ff73"/><stop offset="0.215" stop-color="#00ff74"/><stop offset="0.240" stop-color="#2dff76"/><stop offset="0.277" stop-color="#79ff79"/><stop offset="0.280" stop-color="#80ff7a"/><stop offset="0.320" stop-color="#e4ff7e"/><stop offset="0.330" stop-color="#ffff7f"/><stop offset="0.360" stop-color="#ffba60"/><stop offset="0.400" stop-color="#ff8146"/><stop offset="0.440" stop-color="#ff5d36"/><stop offset="0.480" stop-color="#ff442a"/><stop offset="0.520" stop-color="#ff3122"/><stop offset="0.560" stop-color="#ff231b"/><stop offset="0.600" stop-color="#ff1816"/><stop offset="0.613" stop-color="#ff1515"/><stop offset="0.640" stop-color="#ff0f12"/><stop offset="0.680" stop-color="#ff070e"/><stop offset="0.720" stop-color="#ff010c"/><stop offset="0.725" stop-color="#ff000b"/><stop offset="0.760" stop-color="#ff0009"/><stop offset="0.800" stop-color="#ff0007"/><stop offset="0.840" stop-color="#ff0005"/><stop offset="0.880" stop-color="#ff0003"/><stop offset="0.920" stop-color="#ff0002"/><stop offset="0.960" stop-color="#ff0001"/><stop offset="0.983" stop-color="#ff0000"/><stop offset="1.000" stop-color="#ff0000"/></linearGradient>
<linearGradient id="c34" gradientUnits="userSpaceOnUse" x1="1024" x2="1662" y1="0" y2="0"><stop offset="0.000" stop-color="#00ff6c"/><stop offset="0.040" stop-color="#00ff6e"/><stop offset="0.080" stop-color="#00ff70"/><stop offset="0.120" stop-color="#00ff73"/><stop offset="0.160" stop-color="#00ff75"/><stop offset="0.200" stop-color="#00ff79"/><stop offset="0.215" stop-color="#00ff7a"/><stop offset="0.240" stop-color="#2eff7c"/><stop offset="0.279" stop-color="#80ff80"/><stop offset="0.320" stop-color="#e8ff86"/><stop offset="0.328" stop-color="#ffff87"/><stop offset="0.360" stop-color="#ffb764"/><stop offset="0.400" stop-color="#ff804a"/><stop offset="0.440" stop-color="#ff5c39"/><stop offset="0.480" stop-color="#ff432d"/><stop offset="0.520" stop-color="#ff3124"/><stop offset="0.560" stop-color="#ff221d"/><stop offset="0.594" stop-color="#ff1919"/><stop offset="0.600" stop-color="#ff1718"/><stop offset="0.640" stop-color="#ff0e14"/><stop offset="0.680" stop-color="#ff0710"/><stop offset="0.720" stop-color="#ff000d"/><stop offset="0.760" stop-color="#ff000a"/><stop offset="0.800" stop-color="#ff0008"/><stop offset="0.840" stop-color="#ff0006"/><stop offset="0.880" stop-color="#ff0005"/><stop offset="0.920" stop-color="#ff0003"/><stop offset="0.960" stop-color="#ff0002"/><stop offset="1.000" stop-color="#ff0000"/></linearGradient>
<linearGradient id="c35" gradientUnits="userSpaceOnUse" x1="1024" x2="1662" y1="0" y2="0"><stop offset="0.000" stop-color="#00ff71"/><stop offset="0.040" stop-color="#00ff73"/><stop offset="0.080" stop-color="#00ff75"/><stop offset="0.120" stop-color="#00ff78"/><stop offset="0.160" stop-color="#00ff7b"/><stop offset="0.200" stop-color="#00ff7e"/><stop offset="0.215" stop-color="#00ff80"/><stop offset="0.240" stop-color="#2eff82"/><stop offset="0.280" stop-color="#83ff87"/><stop offset="0.320" stop-color="#e9ff8d"/><stop offset="0.328" stop-color="#ffff8e"/><stop offset="0.360" stop-color="#ffb66a"/><stop offset="0.400" stop-color="#ff7f4e"/><stop offset="0.440" stop-color="#ff5b3c"/><stop offset="0.480" stop-color="#ff4230"/><stop offset="0.520" stop-color="#ff3027"/><stop offset="0.560" stop-color="#ff2220"/><stop offset="0.575" stop-color="#ff1d1d"/><stop offset="0.600" stop-color="#ff171a"/><stop offset="0.640" stop-color="#ff0e15"/><stop offset="0.680" stop-color="#ff0612"/><stop offset="0.718" stop-color="#ff000f"/><stop offset="0.760" stop-color="#ff000c"/><stop offset="0.800" stop-color="#ff0009"/><stop offset="0.840" stop-color="#ff0007"/><stop offset="0.880" stop-color="#ff0006"/><stop offset="0.920" stop-color="#ff0004"/><stop offset="0.960" stop-color="#ff0003"/><stop offset="1.000" stop-color="#ff0001"/></linearGradient>
<linearGradient id="c36" gradientUnits="userSpaceOnUse" x1="1025" x2="1662" y1="0" y2="0"><stop offset="0.000" stop-color="#00ff75"/><stop offset="0.040" stop-color="#00ff77"/><stop offset="0.080" stop-color="#00ff7a"/><stop offset="0.120" stop-color="#00ff7d"/><stop offset="0.160" stop-color="#00ff80"/><stop offset="0.200" stop-color="#00ff84"/><stop offset="0.215" stop-color="#00ff86"/><stop offset="0.240" stop-color="#2fff89"/><stop offset="0.280" stop-color="#85ff8e"/><stop offset="0.284" stop-color="#8fff8f"/><stop offset="0.320" stop-color="#ecff95"/><stop offset="0.327" stop-color="#ffff96"/><stop offset="0.360" stop-color="#ffb36e"/><stop offset="0.400" stop-color="#ff7d52"/><stop offset="0.440" stop-color="#ff5a3f"/><stop offset="0.480" stop-color="#ff4133"/><stop offset="0.520" stop-color="#ff2f29"/><stop offset="0.555" stop-color="#ff2222"/><stop offset="0.560" stop-color="#ff2122"/><stop offset="0.600" stop-color="#ff161c"/><stop offset="0.640" stop-color="#ff0d17"/><stop offset="0.680" stop-color="#ff0513"/><stop offset="0.715" stop-color="#ff0010"/><stop offset="0.720" stop-color="#ff0010"/><stop offset="0.760" stop-color="#ff000d"/><stop offset="0.800" stop-color="#ff000b"/><stop offset="0.840" stop-color="#ff0009"/><stop offset="0.880" stop-color="#ff0007"/><stop offset="0.920" stop-color="#ff0005"/><stop offset="0.960" stop-color="#ff0004"/><stop offset="1.000" stop-color="#ff0002"/></linearGradient>
<linearGradient id="c37" gradientUnits="userSpaceOnUse" x1="1025" x2="1662" y1="0" y2="0"><stop offset="0.000" stop-color="#00ff79"/><stop offset="0.040" stop-color="#00ff7b"/><stop offset="0.080" stop-color="#00ff7e"/><stop offset="0.120" stop-color="#00ff82"/><stop offset="0.160" stop-color="#00ff86"/><stop offset="0.200" stop-color="#00ff8a"/><stop offset="0.215" stop-color="#00ff8c"/><stop offset="0.240" stop-color="#2fff8f"/><stop offset="0.280" stop-color="#85ff95"/><stop offset="0.287" stop-color="#97ff97"/><stop offset="0.320" stop-color="#edff9d"/><stop offset="0.326" stop-color="#ffff9e"/><stop offset="0.360" stop-color="#ffb274"/><stop offset="0.400" stop-color="#ff7c56"/><stop offset="0.440" stop-color="#ff5943"/><stop offset="0.480" stop-color="#ff4035"/><stop offset="0.520" stop-color="#ff2e2c"/><stop offset="0.536" stop-color="#ff2828"/><stop offset="0.560" stop-color="#ff2024"/><stop offset="0.600" stop-color="#ff151e"/><stop offset="0.640" stop-color="#ff0c19"/><stop offset="0.680" stop-color="#ff0515"/><stop offset="0.712" stop-color="#ff0012"/><stop offset="0.720" stop-color="#ff0011"/><stop offset="0.760" stop-color="#ff000f"/><stop offset="0.800" stop-color="#ff000c"/><stop offset="0.840" stop-color="#ff000a"/><stop offset="0.880" stop-color="#ff0008"/><stop offset="0.920" stop-color="#ff0006"/><stop offset="0.960" stop-color="#ff0005"/><stop offset="1.000" stop-color="#ff0003"/></linearGradient>
<linearGradient id="c38" gradientUnits="userSpaceOnUse" x1="1025" x2="1662" y1="0" y2="0"><stop offset="0.000" stop-color="#00ff7d"/><stop offset="0.040" stop-color="#00ff80"/><stop offset="0.080" stop-color="#00ff83"/><stop offset="0.120" stop-color="#00ff87"/><stop offset="0.160" stop-color="#00ff8b"/><stop offset="0.200" stop-color="#00ff90"/><stop offset="0.216" stop-color="#00ff92"/><stop offset="0.240" stop-color="#2eff96"/><stop offset="0.280" stop-color="#85ff9c"/><stop offset="0.290" stop-color="#9eff9e"/><stop offset="0.320" stop-color="#eeffa5"/><stop offset="0.326" stop-color="#ffffa6"/><stop offset="0.360" stop-color="#ffb27a"/><stop offset="0.400" stop-color="#ff7b5a"/><stop offset="0.440" stop-color="#ff5846"/><stop offset="0.480" stop-color="#ff4038"/><stop offset="0.517" stop-color="#ff2f2f"/><stop offset="0.520" stop-color="#ff2e2e"/><stop offset="0.560" stop-color="#ff2026"/><stop offset="0.600" stop-color="#ff1520"/><stop offset="0.640" stop-color="#ff0c1b"/><stop offset="0.680" stop-color="#ff0517"/><stop offset="0.709" stop-color="#ff0014"/><stop offset="0.720" stop-color="#ff0013"/><stop offset="0.760" stop-color="#ff0010"/><stop offset="0.800" stop-color="#ff000d"/><stop offset="0.840" stop-color="#ff000b"/><stop offset="0.880" stop-color="#ff0009"/><stop offset="0.920" stop-color="#ff0007"/><stop offset="0.960" stop-color="#ff0006"/><stop offset="1.000" stop-color="#ff0004"/></linearGradient>
<linearGradient id="c39" gradientUnits="userSpaceOnUse" x1="1026" x2="1662" y1="0" y2="0"><stop offset="0.000" stop-color="#00ff81"/><stop offset="0.040" stop-color="#00ff85"/><stop offset="0.080" stop-color="#00ff88"/><stop offset="0.120" stop-color="#00ff8c"/><stop offset="0.160" stop-color="#00ff91"/><stop offset="0.200" stop-color="#00ff96"/><stop offset="0.215" stop-color="#00ff98"/><stop offset="0.240" stop-color="#30ff9c"/><stop offset="0.280" stop-color="#88ffa4"/><stop offset="0.293" stop-color="#a7ffa7"/><stop offset="0.320" stop-color="#f1ffad"/><stop offset="0.325" stop-color="#ffffae"/><stop offset="0.360" stop-color="#ffaf7e"/><stop offset="0.400" stop-color="#ff795e"/><stop offset="0.440" stop-color="#ff5749"/><stop offset="0.480" stop-color="#ff3e3b"/><stop offset="0.497" stop-color="#ff3636"/><stop offset="0.520" stop-color="#ff2d30"/><stop offset="0.560" stop-color="#ff1f28"/><stop offset="0.600" stop-color="#ff1422"/><stop offset="0.640" stop-color="#ff0b1c"/><stop offset="0.680" stop-color="#ff0418"/><stop offset="0.705" stop-color="#ff0016"/><stop offset="0.720" stop-color="#ff0014"/><stop offset="0.760" stop-color="#ff0011"/><stop offset="0.800" stop-color="#ff000f"/><stop offset="0.840" stop-color="#ff000c"/><stop offset="0.880" stop-color="#ff000a"/><stop offset="0.920" stop-color="#ff0008"/><stop offset="0.960" stop-color="#ff0007"/><stop offset="1.000" stop-color="#ff0005"/></linearGradient>
<linearGradient id="c40" gradientUnits="userSpaceOnUse" x1="1027" x2="1662" y1="0" y2="0"><stop offset="0.000" stop-color="#00ff86"/><stop offset="0.040" stop-color="#00ff89"/><stop offset="0.080" stop-color="#00ff8d"/><stop offset="0.120" stop-color="#00ff91"/><stop offset="0.160" stop-color="#00ff97"/><stop offset="0.200" stop-color="#00ff9c"/><stop offset="0.214" stop-color="#00ff9f"/><stop offset="0.240" stop-color="#32ffa3"/><stop offset="0.280" stop-color="#8affab"/><stop offset="0.295" stop-color="#afffaf"/><stop offset="0.320" stop-color="#f5ffb5"/><stop offset="0.323" stop-color="#ffffb6"/><stop offset="0.360" stop-color="#ffac83"/><stop offset="0.400" stop-color="#ff7762"/><stop offset="0.440" stop-color="#ff554d"/><stop offset="0.478" stop-color="#ff3e3e"/><stop offset="0.520" stop-color="#ff2c33"/><stop offset="0.560" stop-color="#ff1e2a"/><stop offset="0.600" stop-color="#ff1324"/><stop offset="0.640" stop-color="#ff0b1e"/><stop offset="0.680" stop-color="#ff031a"/><stop offset="0.701" stop-color="#ff0018"/><stop offset="0.720" stop-color="#ff0016"/><stop offset="0.760" stop-color="#ff0013"/><stop offset="0.800" stop-color="#ff0010"/><stop offset="0.840" stop-color="#ff000d"/><stop offset="0.880" stop-color="#ff000b"/><stop offset="0.920" stop-color="#ff0009"/><stop offset="0.960" stop-color="#ff0008"/><stop offset="1.000" stop-color="#ff0006"/></linearGradient>
<linearGradient id="c41" gradientUnits="userSpaceOnUse" x1="1027" x2="1662" y1="0" y2="0"><stop offset="0.000" stop-color="#00ff8a"/><stop offset="0.040" stop-color="#00ff8e"/><stop offset="0.080" stop-color="#00ff92"/><stop offset="0.120" stop-color="#00ff97"/><stop offset="0.160" stop-color="#00ff9c"/><stop offset="0.200" stop-color="#00ffa3"/><stop offset="0.215" stop-color="#00ffa5"/><stop offset="0.240" stop-color="#31ffaa"/><stop offset="0.280" stop-color="#8affb3"/><stop offset="0.298" stop-color="#b7ffb7"/><stop offset="0.320" stop-color="#f6ffbe"/><stop offset="0.323" stop-color="#ffffbf"/><stop offset="0.360" stop-color="#ffab88"/><stop offset="0.400" stop-color="#ff7666"/><stop offset="0.440" stop-color="#ff5450"/><stop offset="0.459" stop-color="#ff4848"/><stop offset="0.480" stop-color="#ff3d41"/><stop offset="0.520" stop-color="#ff2b35"/><stop offset="0.560" stop-color="#ff1d2d"/><stop offset="0.600" stop-color="#ff1326"/><stop offset="0.640" stop-color="#ff0a20"/><stop offset="0.680" stop-color="#ff031b"/><stop offset="0.698" stop-color="#ff0019"/><stop offset="0.720" stop-color="#ff0017"/><stop offset="0.760" stop-color="#ff0014"/><stop offset="0.800" stop-color="#ff0011"/><stop offset="0.840" stop-color="#ff000f"/><stop offset="0.880" stop-color="#ff000c"/><stop offset="0.920" stop-color="#ff000a"/><stop offset="0.960" stop-color="#ff0009"/><stop offset="1.000" stop-color="#ff0007"/></linearGradient>
<linearGradient id="c42" gradientUnits="userSpaceOnUse" x1="1028" x2="1662" y1="0" y2="0"><stop offset="0.000" stop-color="#00ff8f"/><stop offset="0.040" stop-color="#00ff93"/><stop offset="0.080" stop-color="#00ff97"/><stop offset="0.120" stop-color="#00ff9c"/><stop offset="0.160" stop-color="#00ffa2"/><stop offset="0.200" stop-color="#00ffa9"/><stop offset="0.214" stop-color="#00ffac"/><stop offset="0.240" stop-color="#33ffb1"/><stop offset="0.280" stop-color="#8dffbb"/><stop offset="0.300" stop-color="#c0ffc0"/><stop offset="0.320" stop-color="#faffc7"/><stop offset="0.360" stop-color="#ffa98d"/><stop offset="0.400" stop-color="#ff756a"/><stop offset="0.439" stop-color="#ff5454"/><stop offset="0.480" stop-color="#ff3b43"/><stop offset="0.520" stop-color="#ff2a38"/><stop offset="0.560" stop-color="#ff1d2f"/><stop offset="0.600" stop-color="#ff1227"/><stop offset="0.640" stop-color="#ff0922"/><stop offset="0.680" stop-color="#ff021d"/><stop offset="0.695" stop-color="#ff001b"/><stop offset="0.720" stop-color="#ff0019"/><stop offset="0.760" stop-color="#ff0015"/><stop offset="0.800" stop-color="#ff0012"/><stop offset="0.840" stop-color="#ff0010"/><stop offset="0.880" stop-color="#ff000e"/><stop offset="0.920" stop-color="#ff000c"/><stop offset="0.960" stop-color="#ff000a"/><stop offset="1.000" stop-color="#ff0008"/></linearGradient>
<linearGradient id="c43" gradientUnits="userSpaceOnUse" x1="1028" x2="1662" y1="0" y2="0"><stop offset="0.000" stop-color="#00ff93"/><stop offset="0.040" stop-color="#00ff97"/><stop offset="0.080" stop-color="#00ff9c"/><stop offset="0.120" stop-color="#00ffa2"/><stop offset="0.160" stop-color="#00ffa8"/><stop offset="0.200" stop-color="#00ffaf"/><stop offset="0.214" stop-color="#00ffb2"/><stop offset="0.240" stop-color="#32ffb8"/><stop offset="0.280" stop-color="#8dffc3"/><stop offset="0.303" stop-color="#caffca"/><stop offset="0.320" stop-color="#fbffcf"/><stop offset="0.360" stop-color="#ffa892"/><stop offset="0.400" stop-color="#ff746e"/><stop offset="0.420" stop-color="#ff6161"/><stop offset="0.440" stop-color="#ff5257"/><stop offset="0.480" stop-color="#ff3b46"/><stop offset="0.520" stop-color="#ff293a"/><stop offset="0.560" stop-color="#ff1c31"/><stop offset="0.600" stop-color="#ff1129"/><stop offset="0.640" stop-color="#ff0924"/><stop offset="0.680" stop-color="#ff021f"/><stop offset="0.692" stop-color="#ff001d"/><stop offset="0.720" stop-color="#ff001a"/><stop offset="0.760" stop-color="#ff0017"/><stop offset="0.800" stop-color="#ff0014"/><stop offset="0.840" stop-color="#ff0011"/><stop offset="0.880" stop-color="#ff000f"/><stop offset="0.920" stop-color="#ff000d"/><stop offset="0.960" stop-color="#ff000b"/><stop offset="1.000" stop-color="#ff0009"/></linearGradient>
<linearGradient id="c44" gradientUnits="userSpaceOnUse" x1="1029" x2="1662" y1="0" y2="0"><stop offset="0.000" stop-color="#00ff98"/><stop offset="0.040" stop-color="#00ff9c"/><stop offset="0.080" stop-color="#00ffa1"/><stop offset="0.120" stop-color="#00ffa7"/><stop offset="0.160" stop-color="#00ffae"/><stop offset="0.200" stop-color="#00ffb6"/><stop offset="0.214" stop-color="#00ffb9"/><stop offset="0.240" stop-color="#34ffc0"/><stop offset="0.280" stop-color="#90ffcb"/><stop offset="0.305" stop-color="#d3ffd3"/><stop offset="0.320" stop-color="#ffffd8"/><stop offset="0.360" stop-color="#ffa597"/><stop offset="0.400" stop-color="#ff7272"/><stop offset="0.440" stop-color="#ff515a"/><stop offset="0.480" stop-color="#ff3949"/><stop offset="0.520" stop-color="#ff283d"/><stop offset="0.560" stop-color="#ff1b33"/><stop offset="0.600" stop-color="#ff112b"/><stop offset="0.640" stop-color="#ff0825"/><stop offset="0.680" stop-color="#ff0120"/><stop offset="0.688" stop-color="#ff001f"/><stop offset="0.720" stop-color="#ff001c"/><stop offset="0.760" stop-color="#ff0018"/><stop offset="0.800" stop-color="#ff0015"/><stop offset="0.840" stop-color="#ff0012"/><stop offset="0.880" stop-color="#ff0010"/><stop offset="0.920" stop-color="#ff000e"/><stop offset="0.960" stop-color="#ff000c"/><stop offset="1.000" stop-color="#ff000a"/></linearGradient>
<linearGradient id="c45" gradientUnits="userSpaceOnUse" x1="1029" x2="1662" y1="0" y2="0"><stop offset="0.000" stop-color="#00ff9c"/><stop offset="0.040" stop-color="#00ffa1"/><stop offset="0.080" stop-color="#00ffa6"/><stop offset="0.120" stop-color="#00ffad"/><stop offset="0.160" stop-color="#00ffb4"/><stop offset="0.200" stop-color="#00ffbd"/><stop offset="0.214" stop-color="#00ffc0"/><stop offset="0.240" stop-color="#33ffc7"/><stop offset="0.280" stop-color="#90ffd3"/><stop offset="0.308" stop-color="#ddffdd"/><stop offset="0.320" stop-color="#ffffe1"/><stop offset="0.360" stop-color="#ffa49d"/><stop offset="0.381" stop-color="#ff8686"/><stop offset="0.400" stop-color="#ff7176"/><stop offset="0.440" stop-color="#ff505d"/><stop offset="0.480" stop-color="#ff394c"/><stop offset="0.520" stop-color="#ff283f"/><stop offset="0.560" stop-color="#ff1b35"/><stop offset="0.600" stop-color="#ff102d"/><stop offset="0.640" stop-color="#ff0827"/><stop offset="0.680" stop-color="#ff0122"/><stop offset="0.685" stop-color="#ff0021"/><stop offset="0.720" stop-color="#ff001d"/><stop offset="0.760" stop-color="#ff001a"/><stop offset="0.800" stop-color="#ff0016"/><stop offset="0.840" stop-color="#ff0013"/><stop offset="0.880" stop-color="#ff0011"/><stop offset="0.920" stop-color="#ff000f"/><stop offset="0.960" stop-color="#ff000d"/><stop offset="1.000" stop-color="#ff000b"/></linearGradient>
<linearGradient id="c46" gradientUnits="userSpaceOnUse" x1="1030" x2="1660" y1="0" y2="0"><stop offset="0.000" stop-color="#00ffa1"/><stop offset="0.040" stop-color="#00ffa6"/><stop offset="0.080" stop-color="#00ffac"/><stop offset="0.120" stop-color="#00ffb3"/><stop offset="0.160" stop-color="#00ffba"/><stop offset="0.200" stop-color="#00ffc3"/><stop offset="0.214" stop-color="#00ffc7"/><stop offset="0.240" stop-color="#34ffce"/><stop offset="0.280" stop-color="#90ffdb"/><stop offset="0.311" stop-color="#e7ffe7"/><stop offset="0.319" stop-color="#ffffea"/><stop offset="0.360" stop-color="#ffa3a3"/><stop offset="0.400" stop-color="#ff707b"/><stop offset="0.440" stop-color="#ff4f61"/><stop offset="0.480" stop-color="#ff384f"/><stop offset="0.520" stop-color="#ff2742"/><stop offset="0.560" stop-color="#ff1a38"/><stop offset="0.600" stop-color="#ff1030"/><stop offset="0.640" stop-color="#ff0829"/><stop offset="0.680" stop-color="#ff0124"/><stop offset="0.683" stop-color="#ff0023"/><stop offset="0.720" stop-color="#ff001f"/><stop offset="0.760" stop-color="#ff001b"/><stop offset="0.800" stop-color="#ff0018"/><stop offset="0.840" stop-color="#ff0015"/><stop offset="0.880" stop-color="#ff0012"/><stop offset="0.920" stop-color="#ff0010"/><stop offset="0.960" stop-color="#ff000e"/><stop offset="1.000" stop-color="#ff000c"/></linearGradient>
<linearGradient id="c47" gradientUnits="userSpaceOnUse" x1="1031" x2="1658" y1="0" y2="0"><stop offset="0.000" stop-color="#00ffa6"/><stop offset="0.040" stop-color="#00ffab"/><stop offset="0.080" stop-color="#00ffb1"/><stop offset="0.120" stop-color="#00ffb8"/><stop offset="0.160" stop-color="#00ffc1"/><stop offset="0.200" stop-color="#00ffca"/><stop offset="0.214" stop-color="#00ffce"/><stop offset="0.240" stop-color="#34ffd6"/><stop offset="0.280" stop-color="#91ffe3"/><stop offset="0.314" stop-color="#f1fff1"/><stop offset="0.319" stop-color="#fffff3"/><stop offset="0.343" stop-color="#ffc2c2"/><stop offset="0.360" stop-color="#ffa2a8"/><stop offset="0.400" stop-color="#ff707f"/><stop offset="0.440" stop-color="#ff4f65"/><stop offset="0.480" stop-color="#ff3852"/><stop offset="0.520" stop-color="#ff2745"/><stop offset="0.560" stop-color="#ff1a3a"/><stop offset="0.600" stop-color="#ff1032"/><stop offset="0.640" stop-color="#ff072b"/><stop offset="0.680" stop-color="#ff0026"/><stop offset="0.720" stop-color="#ff0021"/><stop offset="0.760" stop-color="#ff001d"/><stop offset="0.800" stop-color="#ff0019"/><stop offset="0.840" stop-color="#ff0016"/><stop offset="0.880" stop-color="#ff0014"/><stop offset="0.920" stop-color="#ff0011"/><stop offset="0.960" stop-color="#ff000f"/><stop offset="1.000" stop-color="#ff000d"/></linearGradient>
<linearGradient id="c48" gradientUnits="userSpaceOnUse" x1="1031" x2="1656" y1="0" y2="0"><stop offset="0.000" stop-color="#00ffaa"/><stop offset="0.040" stop-color="#00ffb0"/><stop offset="0.080" stop-color="#00ffb7"/><stop offset="0.120" stop-color="#00ffbe"/><stop offset="0.160" stop-color="#00ffc7"/><stop offset="0.200" stop-color="#00ffd1"/><stop offset="0.215" stop-color="#00ffd5"/><stop offset="0.240" stop-color="#32ffdd"/><stop offset="0.280" stop-color="#8fffeb"/><stop offset="0.319" stop-color="#fcfffc"/><stop offset="0.324" stop-color="#fff0f0"/><stop offset="0.360" stop-color="#ffa3b0"/><stop offset="0.400" stop-color="#ff7085"/><stop offset="0.440" stop-color="#ff4f69"/><stop offset="0.480" stop-color="#ff3856"/><stop offset="0.520" stop-color="#ff2748"/><stop offset="0.560" stop-color="#ff1a3d"/><stop offset="0.600" stop-color="#ff1034"/><stop offset="0.640" stop-color="#ff072d"/><stop offset="0.680" stop-color="#ff0027"/><stop offset="0.720" stop-color="#ff0023"/><stop offset="0.760" stop-color="#ff001e"/><stop offset="0.800" stop-color="#ff001b"/><stop offset="0.840" stop-color="#ff0018"/><stop offset="0.880" stop-color="#ff0015"/><stop offset="0.920" stop-color="#ff0012"/><stop offset="0.960" stop-color="#ff0010"/><stop offset="1.000" stop-color="#ff000e"/></linearGradient>
<linearGradient id="c49" gradientUnits="userSpaceOnUse" x1="1032" x2="1655" y1="0" y2="0"><stop offset="0.000" stop-color="#00ffaf"/><stop offset="0.042" stop-color="#00ffb6"/><stop offset="0.083" stop-color="#00ffbd"/><stop offset="0.125" stop-color="#00ffc5"/><stop offset="0.167" stop-color="#00ffcf"/><stop offset="0.208" stop-color="#00ffdb"/><stop offset="0.215" stop-color="#00ffdd"/><stop offset="0.250" stop-color="#48ffe8"/><stop offset="0.292" stop-color="#affff9"/><stop offset="0.305" stop-color="#d4ffff"/><stop offset="0.319" stop-color="#f8f8ff"/><stop offset="0.321" stop-color="#fff7ff"/><stop offset="0.333" stop-color="#ffd6e3"/><stop offset="0.375" stop-color="#ff8ba2"/><stop offset="0.417" stop-color="#ff5f7c"/><stop offset="0.458" stop-color="#ff4363"/><stop offset="0.500" stop-color="#ff2e51"/><stop offset="0.542" stop-color="#ff1f44"/><stop offset="0.583" stop-color="#ff133a"/><stop offset="0.625" stop-color="#ff0a32"/><stop offset="0.667" stop-color="#ff022b"/><stop offset="0.679" stop-color="#ff0029"/><stop offset="0.708" stop-color="#ff0026"/><stop offset="0.750" stop-color="#ff0021"/><stop offset="0.792" stop-color="#ff001d"/><stop offset="0.833" stop-color="#ff001a"/><stop offset="0.875" stop-color="#ff0016"/><stop offset="0.917" stop-color="#ff0014"/><stop offset="0.958" stop-color="#ff0011"/><stop offset="1.000" stop-color="#ff000f"/></linearGradient>
<linearGradient id="c50" gradientUnits="userSpaceOnUse" x1="1032" x2="1653" y1="0" y2="0"><stop offset="0.000" stop-color="#00ffb4"/><stop offset="0.042" stop-color="#00ffbb"/><stop offset="0.083" stop-color="#00ffc2"/><stop offset="0.125" stop-color="#00ffcb"/><stop offset="0.167" stop-color="#00ffd5"/><stop offset="0.208" stop-color="#00ffe1"/><stop offset="0.216" stop-color="#00ffe4"/><stop offset="0.250" stop-color="#46fff0"/><stop offset="0.286" stop-color="#9effff"/><stop offset="0.292" stop-color="#abfcff"/><stop offset="0.319" stop-color="#efefff"/><stop offset="0.326" stop-color="#ffecff"/><stop offset="0.333" stop-color="#ffd8ed"/><stop offset="0.375" stop-color="#ff8ca9"/><stop offset="0.417" stop-color="#ff6081"/><stop offset="0.458" stop-color="#ff4367"/><stop offset="0.500" stop-color="#ff2e55"/><stop offset="0.542" stop-color="#ff1f47"/><stop offset="0.583" stop-color="#ff133c"/><stop offset="0.625" stop-color="#ff0934"/><stop offset="0.667" stop-color="#ff022d"/><stop offset="0.678" stop-color="#ff002c"/><stop offset="0.708" stop-color="#ff0027"/><stop offset="0.750" stop-color="#ff0023"/><stop offset="0.792" stop-color="#ff001f"/><stop offset="0.833" stop-color="#ff001b"/><stop offset="0.875" stop-color="#ff0018"/><stop offset="0.917" stop-color="#ff0015"/><stop offset="0.958" stop-color="#ff0013"/><stop offset="1.000" stop-color="#ff0011"/></linearGradient>
<linearGradient id="c51" gradientUnits="userSpaceOnUse" x1="1033" x2="1651" y1="0" y2="0"><stop offset="0.000" stop-color="#00ffb9"/><stop offset="0.042" stop-color="#00ffc0"/><stop offset="0.083" stop-color="#00ffc8"/><stop offset="0.125" stop-color="#00ffd1"/><stop offset="0.167" stop-color="#00ffdc"/><stop offset="0.208" stop-color="#00ffe9"/><stop offset="0.216" stop-color="#00ffec"/><stop offset="0.250" stop-color="#46fff8"/><stop offset="0.266" stop-color="#6cffff"/><stop offset="0.292" stop-color="#a6f4ff"/><stop offset="0.319" stop-color="#e7e7ff"/><stop offset="0.329" stop-color="#ffe3ff"/><stop offset="0.333" stop-color="#ffd7f4"/><stop offset="0.375" stop-color="#ff8bae"/><stop offset="0.417" stop-color="#ff5f86"/><stop offset="0.458" stop-color="#ff426b"/><stop offset="0.500" stop-color="#ff2e58"/><stop offset="0.542" stop-color="#ff1e4a"/><stop offset="0.583" stop-color="#ff133f"/><stop offset="0.625" stop-color="#ff0936"/><stop offset="0.667" stop-color="#ff022f"/><stop offset="0.676" stop-color="#ff002e"/><stop offset="0.708" stop-color="#ff0029"/><stop offset="0.750" stop-color="#ff0024"/><stop offset="0.792" stop-color="#ff0020"/><stop offset="0.833" stop-color="#ff001c"/><stop offset="0.875" stop-color="#ff0019"/><stop offset="0.917" stop-color="#ff0016"/><stop offset="0.958" stop-color="#ff0014"/><stop offset="1.000" stop-color="#ff0012"/></linearGradient>
<linearGradient id="c52" gradientUnits="userSpaceOnUse" x1="1034" x2="1649" y1="0" y2="0"><stop offset="0.000" stop-color="#00ffbe"/><stop offset="0.042" stop-color="#00ffc5"/><stop offset="0.083" stop-color="#00ffce"/><stop offset="0.125" stop-color="#00ffd8"/><stop offset="0.167" stop-color="#00ffe3"/><stop offset="0.208" stop-color="#00fff0"/><stop offset="0.216" stop-color="#00fff3"/><stop offset="0.246" stop-color="#3fffff"/><stop offset="0.250" stop-color="#46fdff"/><stop offset="0.292" stop-color="#a1ecff"/><stop offset="0.319" stop-color="#dfdfff"/><stop offset="0.332" stop-color="#ffd9ff"/><stop offset="0.375" stop-color="#ff8bb4"/><stop offset="0.417" stop-color="#ff5f8a"/><stop offset="0.458" stop-color="#ff426f"/><stop offset="0.500" stop-color="#ff2d5b"/><stop offset="0.542" stop-color="#ff1e4d"/><stop offset="0.583" stop-color="#ff1241"/><stop offset="0.625" stop-color="#ff0938"/><stop offset="0.667" stop-color="#ff0131"/><stop offset="0.675" stop-color="#ff0030"/><stop offset="0.708" stop-color="#ff002b"/><stop offset="0.750" stop-color="#ff0026"/><stop offset="0.792" stop-color="#ff0022"/><stop offset="0.833" stop-color="#ff001e"/><stop offset="0.875" stop-color="#ff001b"/><stop offset="0.917" stop-color="#ff0018"/><stop offset="0.958" stop-color="#ff0015"/><stop offset="1.000" stop-color="#ff0013"/></linearGradient>
<linearGradient id="c53" gradientUnits="userSpaceOnUse" x1="1034" x2="1647" y1="0" y2="0"><stop offset="0.000" stop-color="#00ffc3"/><stop offset="0.042" stop-color="#00ffcb"/><stop offset="0.083" stop-color="#00ffd4"/><stop offset="0.125" stop-color="#00ffde"/><stop offset="0.167" stop-color="#00ffea"/><stop offset="0.208" stop-color="#00fff8"/><stop offset="0.217" stop-color="#00fffb"/><stop offset="0.227" stop-color="#14ffff"/><stop offset="0.250" stop-color="#42f6ff"/><stop offset="0.292" stop-color="#9ae4ff"/><stop offset="0.319" stop-color="#d8d8ff"/><stop offset="0.333" stop-color="#f8d1ff"/><stop offset="0.336" stop-color="#ffd0ff"/><stop offset="0.375" stop-color="#ff8bbb"/><stop offset="0.417" stop-color="#ff5f8f"/><stop offset="0.458" stop-color="#ff4273"/><stop offset="0.500" stop-color="#ff2d5f"/><stop offset="0.542" stop-color="#ff1e50"/><stop offset="0.583" stop-color="#ff1244"/><stop offset="0.625" stop-color="#ff093b"/><stop offset="0.667" stop-color="#ff0133"/><stop offset="0.674" stop-color="#ff0032"/><stop offset="0.708" stop-color="#ff002d"/><stop offset="0.750" stop-color="#ff0028"/><stop offset="0.792" stop-color="#ff0023"/><stop offset="0.833" stop-color="#ff001f"/><stop offset="0.875" stop-color="#ff001c"/><stop offset="0.917" stop-color="#ff0019"/><stop offset="0.958" stop-color="#ff0016"/><stop offset="1.000" stop-color="#ff0014"/></linearGradient>
<linearGradient id="c54" gradientUnits="userSpaceOnUse" x1="1035" x2="1645" y1="0" y2="0"><stop offset="0.000" stop-color="#00ffc8"/><stop offset="0.042" stop-color="#00ffd0"/><stop offset="0.083" stop-color="#00ffda"/><stop offset="0.125" stop-color="#00ffe4"/><stop offset="0.167" stop-color="#00fff1"/><stop offset="0.207" stop-color="#00ffff"/><stop offset="0.217" stop-color="#00fbff"/><stop offset="0.250" stop-color="#40eeff"/><stop offset="0.292" stop-color="#96ddff"/><stop offset="0.319" stop-color="#d1d1ff"/><stop offset="0.333" stop-color="#f1caff"/><stop offset="0.340" stop-color="#ffc7ff"/><stop offset="0.375" stop-color="#ff8ac1"/><stop offset="0.417" stop-color="#ff5e94"/><stop offset="0.458" stop-color="#ff4177"/><stop offset="0.500" stop-color="#ff2d62"/><stop offset="0.542" stop-color="#ff1e53"/><stop offset="0.583" stop-color="#ff1247"/><stop offset="0.625" stop-color="#ff083d"/><stop offset="0.667" stop-color="#ff0135"/><stop offset="0.672" stop-color="#ff0035"/><stop offset="0.708" stop-color="#ff002f"/><stop offset="0.750" stop-color="#ff002a"/><stop offset="0.792" stop-color="#ff0025"/><stop offset="0.833" stop-color="#ff0021"/><stop offset="0.875" stop-color="#ff001d"/><stop offset="0.917" stop-color="#ff001a"/><stop offset="0.958" stop-color="#ff0018"/><stop offset="1.000" stop-color="#ff0015"/></linearGradient>
<linearGradient id="c55" gradientUnits="userSpaceOnUse" x1="1036" x2="1643" y1="0" y2="0"><stop offset="0.000" stop-color="#00ffcd"/><stop offset="0.042" stop-color="#00ffd6"/><stop offset="0.083" stop-color="#00ffe0"/><stop offset="0.125" stop-color="#00ffeb"/><stop offset="0.167" stop-color="#00fff8"/><stop offset="0.187" stop-color="#00ffff"/><stop offset="0.208" stop-color="#00f7ff"/><stop offset="0.217" stop-color="#00f4ff"/><stop offset="0.250" stop-color="#3ee7ff"/><stop offset="0.292" stop-color="#92d6ff"/><stop offset="0.319" stop-color="#cacaff"/><stop offset="0.333" stop-color="#eac4ff"/><stop offset="0.343" stop-color="#ffbfff"/><stop offset="0.375" stop-color="#ff8ac7"/><stop offset="0.417" stop-color="#ff5e99"/><stop offset="0.458" stop-color="#ff417b"/><stop offset="0.500" stop-color="#ff2c65"/><stop offset="0.542" stop-color="#ff1d55"/><stop offset="0.583" stop-color="#ff1149"/><stop offset="0.625" stop-color="#ff083f"/><stop offset="0.667" stop-color="#ff0137"/><stop offset="0.670" stop-color="#ff0037"/><stop offset="0.708" stop-color="#ff0031"/><stop offset="0.750" stop-color="#ff002b"/><stop offset="0.792" stop-color="#ff0027"/><stop offset="0.833" stop-color="#ff0022"/><stop offset="0.875" stop-color="#ff001f"/><stop offset="0.917" stop-color="#ff001c"/><stop offset="0.958" stop-color="#ff0019"/><stop offset="1.000" stop-color="#ff0016"/></linearGradient>
<linearGradient id="c56" gradientUnits="userSpaceOnUse" x1="1036" x2="1641" y1="0" y2="0"><stop offset="0.000" stop-color="#00ffd2"/><stop offset="0.042" stop-color="#00ffdb"/><stop offset="0.083" stop-color="#00ffe5"/><stop offset="0.125" stop-color="#00fff1"/><stop offset="0.167" stop-color="#00ffff"/><stop offset="0.208" stop-color="#00f0ff"/><stop offset="0.218" stop-color="#00ecff"/><stop offset="0.250" stop-color="#3be0ff"/><stop offset="0.292" stop-color="#8bcfff"/><stop offset="0.319" stop-color="#c4c4ff"/><stop offset="0.333" stop-color="#e1beff"/><stop offset="0.348" stop-color="#ffb7ff"/><stop offset="0.375" stop-color="#ff8ace"/><stop offset="0.417" stop-color="#ff5e9e"/><stop offset="0.458" stop-color="#ff417f"/><stop offset="0.500" stop-color="#ff2c69"/><stop offset="0.542" stop-color="#ff1d59"/><stop offset="0.583" stop-color="#ff114c"/><stop offset="0.625" stop-color="#ff0842"/><stop offset="0.667" stop-color="#ff003a"/><stop offset="0.669" stop-color="#ff0039"/><stop offset="0.708" stop-color="#ff0033"/><stop offset="0.750" stop-color="#ff002d"/><stop offset="0.792" stop-color="#ff0028"/><stop offset="0.833" stop-color="#ff0024"/><stop offset="0.875" stop-color="#ff0020"/><stop offset="0.917" stop-color="#ff001d"/><stop offset="0.958" stop-color="#ff001a"/><stop offset="1.000" stop-color="#ff0018"/></linearGradient>
<linearGradient id="c57" gradientUnits="userSpaceOnUse" x1="1037" x2="1639" y1="0" y2="0"><stop offset="0.000" stop-color="#00ffd8"/><stop offset="0.042" stop-color="#00ffe1"/><stop offset="0.083" stop-color="#00ffec"/><stop offset="0.125" stop-color="#00fff8"/><stop offset="0.146" stop-color="#00ffff"/><stop offset="0.167" stop-color="#00f8ff"/><stop offset="0.208" stop-color="#00e9ff"/><stop offset="0.218" stop-color="#00e5ff"/><stop offset="0.250" stop-color="#39d9ff"/><stop offset="0.292" stop-color="#88c9ff"/><stop offset="0.319" stop-color="#bebeff"/><stop offset="0.333" stop-color="#dbb7ff"/><stop offset="0.351" stop-color="#ffb0ff"/><stop offset="0.375" stop-color="#ff8ad4"/><stop offset="0.417" stop-color="#ff5da3"/><stop offset="0.458" stop-color="#ff4083"/><stop offset="0.500" stop-color="#ff2c6c"/><stop offset="0.542" stop-color="#ff1d5b"/><stop offset="0.583" stop-color="#ff114f"/><stop offset="0.625" stop-color="#ff0844"/><stop offset="0.667" stop-color="#ff003c"/><stop offset="0.708" stop-color="#ff0035"/><stop offset="0.750" stop-color="#ff002f"/><stop offset="0.792" stop-color="#ff002a"/><stop offset="0.833" stop-color="#ff0026"/><stop offset="0.875" stop-color="#ff0022"/><stop offset="0.917" stop-color="#ff001e"/><stop offset="0.958" stop-color="#ff001b"/><stop offset="1.000" stop-color="#ff0019"/></linearGradient>
<linearGradient id="c58" gradientUnits="userSpaceOnUse" x1="1038" x2="1637" y1="0" y2="0"><stop offset="0.000" stop-color="#00ffdd"/><stop offset="0.042" stop-color="#00ffe7"/><stop offset="0.083" stop-color="#00fff2"/><stop offset="0.125" stop-color="#00ffff"/><stop offset="0.167" stop-color="#00f1ff"/><stop offset="0.208" stop-color="#00e2ff"/><stop offset="0.218" stop-color="#00dfff"/><stop offset="0.250" stop-color="#38d3ff"/><stop offset="0.292" stop-color="#84c3ff"/><stop offset="0.319" stop-color="#b8b8ff"/><stop offset="0.333" stop-color="#d5b2ff"/><stop offset="0.354" stop-color="#ffa9ff"/><stop offset="0.375" stop-color="#ff89db"/><stop offset="0.417" stop-color="#ff5da8"/><stop offset="0.458" stop-color="#ff4087"/><stop offset="0.500" stop-color="#ff2b70"/><stop offset="0.542" stop-color="#ff1c5e"/><stop offset="0.583" stop-color="#ff1151"/><stop offset="0.625" stop-color="#ff0747"/><stop offset="0.666" stop-color="#ff003e"/><stop offset="0.708" stop-color="#ff0037"/><stop offset="0.750" stop-color="#ff0031"/><stop offset="0.792" stop-color="#ff002c"/><stop offset="0.833" stop-color="#ff0027"/><stop offset="0.875" stop-color="#ff0023"/><stop offset="0.917" stop-color="#ff0020"/><stop offset="0.958" stop-color="#ff001d"/><stop offset="1.000" stop-color="#ff001a"/></linearGradient>
<linearGradient id="c59" gradientUnits="userSpaceOnUse" x1="1039" x2="1635" y1="0" y2="0"><stop offset="0.000" stop-color="#00ffe3"/><stop offset="0.043" stop-color="#00ffee"/><stop offset="0.087" stop-color="#00fffa"/><stop offset="0.104" stop-color="#00ffff"/><stop offset="0.130" stop-color="#00f7ff"/><stop offset="0.174" stop-color="#00e8ff"/><stop offset="0.217" stop-color="#00d9ff"/><stop offset="0.261" stop-color="#49c9ff"/><stop offset="0.304" stop-color="#98b8ff"/><stop offset="0.318" stop-color="#b2b2ff"/><stop offset="0.348" stop-color="#eba6ff"/><stop offset="0.358" stop-color="#ffa2ff"/><stop offset="0.391" stop-color="#ff74ca"/><stop offset="0.435" stop-color="#ff4e9d"/><stop offset="0.478" stop-color="#ff357f"/><stop offset="0.522" stop-color="#ff2369"/><stop offset="0.565" stop-color="#ff1559"/><stop offset="0.609" stop-color="#ff0b4d"/><stop offset="0.652" stop-color="#ff0243"/><stop offset="0.665" stop-color="#ff0041"/><stop offset="0.696" stop-color="#ff003b"/><stop offset="0.739" stop-color="#ff0034"/><stop offset="0.783" stop-color="#ff002e"/><stop offset="0.826" stop-color="#ff0029"/><stop offset="0.870" stop-color="#ff0025"/><stop offset="0.913" stop-color="#ff0021"/><stop offset="0.957" stop-color="#ff001e"/><stop offset="1.000" stop-color="#ff001b"/></linearGradient>
<linearGradient id="c60" gradientUnits="userSpaceOnUse" x1="1039" x2="1633" y1="0" y2="0"><stop offset="0.000" stop-color="#00ffe8"/><stop offset="0.043" stop-color="#00fff3"/><stop offset="0.084" stop-color="#00ffff"/><stop offset="0.087" stop-color="#00feff"/><stop offset="0.130" stop-color="#00f0ff"/><stop offset="0.174" stop-color="#00e2ff"/><stop offset="0.217" stop-color="#00d3ff"/><stop offset="0.261" stop-color="#45c3ff"/><stop offset="0.304" stop-color="#92b3ff"/><stop offset="0.319" stop-color="#adadff"/><stop offset="0.348" stop-color="#e3a1ff"/><stop offset="0.363" stop-color="#ff9bff"/><stop offset="0.391" stop-color="#ff75d1"/><stop offset="0.435" stop-color="#ff4ea2"/><stop offset="0.478" stop-color="#ff3583"/><stop offset="0.522" stop-color="#ff236d"/><stop offset="0.565" stop-color="#ff155c"/><stop offset="0.609" stop-color="#ff0a50"/><stop offset="0.652" stop-color="#ff0245"/><stop offset="0.663" stop-color="#ff0043"/><stop offset="0.696" stop-color="#ff003d"/><stop offset="0.739" stop-color="#ff0036"/><stop offset="0.783" stop-color="#ff0030"/><stop offset="0.826" stop-color="#ff002b"/><stop offset="0.870" stop-color="#ff0027"/><stop offset="0.913" stop-color="#ff0023"/><stop offset="0.957" stop-color="#ff0020"/><stop offset="1.000" stop-color="#ff001d"/></linearGradient>
<linearGradient id="c61" gradientUnits="userSpaceOnUse" x1="1040" x2="1631" y1="0" y2="0"><stop offset="0.000" stop-color="#00ffee"/><stop offset="0.043" stop-color="#00fffa"/><stop offset="0.062" stop-color="#00ffff"/><stop offset="0.087" stop-color="#00f8ff"/><stop offset="0.130" stop-color="#00eaff"/><stop offset="0.174" stop-color="#00dcff"/><stop offset="0.217" stop-color="#00cdff"/><stop offset="0.261" stop-color="#44beff"/><stop offset="0.304" stop-color="#8eadff"/><stop offset="0.319" stop-color="#a8a8ff"/><stop offset="0.348" stop-color="#dd9cff"/><stop offset="0.366" stop-color="#ff95ff"/><stop offset="0.391" stop-color="#ff74d6"/><stop offset="0.435" stop-color="#ff4ea6"/><stop offset="0.478" stop-color="#ff3487"/><stop offset="0.522" stop-color="#ff2270"/><stop offset="0.565" stop-color="#ff155f"/><stop offset="0.609" stop-color="#ff0a52"/><stop offset="0.652" stop-color="#ff0248"/><stop offset="0.662" stop-color="#ff0046"/><stop offset="0.696" stop-color="#ff003f"/><stop offset="0.739" stop-color="#ff0038"/><stop offset="0.783" stop-color="#ff0032"/><stop offset="0.826" stop-color="#ff002d"/><stop offset="0.870" stop-color="#ff0028"/><stop offset="0.913" stop-color="#ff0024"/><stop offset="0.957" stop-color="#ff0021"/><stop offset="1.000" stop-color="#ff001e"/></linearGradient>
<linearGradient id="c62" gradientUnits="userSpaceOnUse" x1="1041" x2="1629" y1="0" y2="0"><stop offset="0.000" stop-color="#00fff4"/><stop offset="0.041" stop-color="#00ffff"/><stop offset="0.043" stop-color="#00feff"/><stop offset="0.087" stop-color="#00f1ff"/><stop offset="0.130" stop-color="#00e4ff"/><stop offset="0.174" stop-color="#00d6ff"/><stop offset="0.217" stop-color="#00c7ff"/><stop offset="0.261" stop-color="#42b8ff"/><stop offset="0.304" stop-color="#8ba8ff"/><stop offset="0.318" stop-color="#a3a3ff"/><stop offset="0.348" stop-color="#d797ff"/><stop offset="0.370" stop-color="#ff8eff"/><stop offset="0.391" stop-color="#ff73dc"/><stop offset="0.435" stop-color="#ff4dab"/><stop offset="0.478" stop-color="#ff348b"/><stop offset="0.522" stop-color="#ff2274"/><stop offset="0.565" stop-color="#ff1462"/><stop offset="0.609" stop-color="#ff0a55"/><stop offset="0.652" stop-color="#ff014a"/><stop offset="0.660" stop-color="#ff0048"/><stop offset="0.696" stop-color="#ff0041"/><stop offset="0.739" stop-color="#ff003a"/><stop offset="0.783" stop-color="#ff0034"/><stop offset="0.826" stop-color="#ff002e"/><stop offset="0.870" stop-color="#ff002a"/><stop offset="0.913" stop-color="#ff0026"/><stop offset="0.957" stop-color="#ff0022"/><stop offset="1.000" stop-color="#ff001f"/></linearGradient>
<linearGradient id="c63" gradientUnits="userSpaceOnUse" x1="1042" x2="1627" y1="0" y2="0"><stop offset="0.000" stop-color="#00fffa"/><stop offset="0.018" stop-color="#00ffff"/><stop offset="0.043" stop-color="#00f8ff"/><stop offset="0.087" stop-color="#00ebff"/><stop offset="0.130" stop-color="#00deff"/><stop offset="0.174" stop-color="#00d0ff"/><stop offset="0.217" stop-color="#00c2ff"/><stop offset="0.261" stop-color="#40b3ff"/><stop offset="0.304" stop-color="#87a3ff"/><stop offset="0.318" stop-color="#9e9eff"/><stop offset="0.348" stop-color="#d293ff"/><stop offset="0.373" stop-color="#ff88ff"/><stop offset="0.391" stop-color="#ff72e2"/><stop offset="0.435" stop-color="#ff4cb0"/><stop offset="0.478" stop-color="#ff338f"/><stop offset="0.522" stop-color="#ff2177"/><stop offset="0.565" stop-color="#ff1465"/><stop offset="0.609" stop-color="#ff0957"/><stop offset="0.652" stop-color="#ff014c"/><stop offset="0.658" stop-color="#ff004b"/><stop offset="0.696" stop-color="#ff0043"/><stop offset="0.739" stop-color="#ff003c"/><stop offset="0.783" stop-color="#ff0035"/><stop offset="0.826" stop-color="#ff0030"/><stop offset="0.870" stop-color="#ff002b"/><stop offset="0.913" stop-color="#ff0027"/><stop offset="0.957" stop-color="#ff0024"/><stop offset="1.000" stop-color="#ff0020"/></linearGradient>
<linearGradient id="c64" gradientUnits="userSpaceOnUse" x1="1042" x2="1625" y1="0" y2="0"><stop offset="0.000" stop-color="#00feff"/><stop offset="0.043" stop-color="#00f2ff"/><stop offset="0.087" stop-color="#00e6ff"/><stop offset="0.130" stop-color="#00d9ff"/><stop offset="0.174" stop-color="#00cbff"/><stop offset="0.217" stop-color="#00bdff"/><stop offset="0.221" stop-color="#00bcff"/><stop offset="0.261" stop-color="#3daeff"/><stop offset="0.304" stop-color="#829fff"/><stop offset="0.319" stop-color="#9a9aff"/><stop offset="0.348" stop-color="#cb8fff"/><stop offset="0.378" stop-color="#ff83ff"/><stop offset="0.391" stop-color="#ff73e9"/><stop offset="0.435" stop-color="#ff4db5"/><stop offset="0.478" stop-color="#ff3393"/><stop offset="0.522" stop-color="#ff217b"/><stop offset="0.565" stop-color="#ff1468"/><stop offset="0.609" stop-color="#ff095a"/><stop offset="0.652" stop-color="#ff014f"/><stop offset="0.657" stop-color="#ff004e"/><stop offset="0.696" stop-color="#ff0046"/><stop offset="0.739" stop-color="#ff003e"/><stop offset="0.783" stop-color="#ff0037"/><stop offset="0.826" stop-color="#ff0032"/><stop offset="0.870" stop-color="#ff002d"/><stop offset="0.913" stop-color="#ff0029"/><stop offset="0.957" stop-color="#ff0025"/><stop offset="1.000" stop-color="#ff0022"/></linearGradient>
<linearGradient id="c65" gradientUnits="userSpaceOnUse" x1="1043" x2="1623" y1="0" y2="0"><stop offset="0.000" stop-color="#00f8ff"/><stop offset="0.043" stop-color="#00edff"/><stop offset="0.087" stop-color="#00e0ff"/><stop offset="0.130" stop-color="#00d3ff"/><stop offset="0.174" stop-color="#00c6ff"/><stop offset="0.217" stop-color="#00b8ff"/><stop offset="0.221" stop-color="#00b7ff"/><stop offset="0.261" stop-color="#3ca9ff"/><stop offset="0.304" stop-color="#7f9aff"/><stop offset="0.318" stop-color="#9595ff"/><stop offset="0.348" stop-color="#c68aff"/><stop offset="0.382" stop-color="#ff7dff"/><stop offset="0.391" stop-color="#ff72ef"/><stop offset="0.435" stop-color="#ff4cba"/><stop offset="0.478" stop-color="#ff3397"/><stop offset="0.522" stop-color="#ff217e"/><stop offset="0.565" stop-color="#ff136b"/><stop offset="0.609" stop-color="#ff095d"/><stop offset="0.652" stop-color="#ff0151"/><stop offset="0.656" stop-color="#ff0050"/><stop offset="0.696" stop-color="#ff0048"/><stop offset="0.739" stop-color="#ff0040"/><stop offset="0.783" stop-color="#ff0039"/><stop offset="0.826" stop-color="#ff0033"/><stop offset="0.870" stop-color="#ff002f"/><stop offset="0.913" stop-color="#ff002a"/><stop offset="0.957" stop-color="#ff0026"/><stop offset="1.000" stop-color="#ff0023"/></linearGradient>
<linearGradient id="c66" gradientUnits="userSpaceOnUse" x1="1044" x2="1621" y1="0" y2="0"><stop offset="0.000" stop-color="#00f3ff"/><stop offset="0.043" stop-color="#00e7ff"/><stop offset="0.087" stop-color="#00dbff"/><stop offset="0.130" stop-color="#00ceff"/><stop offset="0.174" stop-color="#00c1ff"/><stop offset="0.217" stop-color="#00b3ff"/><stop offset="0.221" stop-color="#00b2ff"/><stop offset="0.261" stop-color="#3aa5ff"/><stop offset="0.304" stop-color="#7c96ff"/><stop offset="0.318" stop-color="#9191ff"/><stop offset="0.348" stop-color="#c186ff"/><stop offset="0.385" stop-color="#ff78ff"/><stop offset="0.391" stop-color="#ff71f6"/><stop offset="0.435" stop-color="#ff4bbf"/><stop offset="0.478" stop-color="#ff329b"/><stop offset="0.522" stop-color="#ff2081"/><stop offset="0.565" stop-color="#ff136e"/><stop offset="0.609" stop-color="#ff095f"/><stop offset="0.652" stop-color="#ff0054"/><stop offset="0.696" stop-color="#ff004a"/><stop offset="0.739" stop-color="#ff0042"/><stop offset="0.783" stop-color="#ff003b"/><stop offset="0.826" stop-color="#ff0035"/><stop offset="0.870" stop-color="#ff0030"/><stop offset="0.913" stop-color="#ff002c"/><stop offset="0.957" stop-color="#ff0028"/><stop offset="1.000" stop-color="#ff0024"/></linearGradient>
<linearGradient id="c67" gradientUnits="userSpaceOnUse" x1="1045" x2="1619" y1="0" y2="0"><stop offset="0.000" stop-color="#00edff"/><stop offset="0.043" stop-color="#00e2ff"/><stop offset="0.087" stop-color="#00d5ff"/><stop offset="0.130" stop-color="#00c9ff"/><stop offset="0.174" stop-color="#00bcff"/><stop offset="0.217" stop-color="#00aeff"/><stop offset="0.221" stop-color="#00adff"/><stop offset="0.261" stop-color="#39a0ff"/><stop offset="0.304" stop-color="#7992ff"/><stop offset="0.317" stop-color="#8d8dff"/><stop offset="0.348" stop-color="#bc82ff"/><stop offset="0.389" stop-color="#ff73ff"/><stop offset="0.435" stop-color="#ff4bc4"/><stop offset="0.478" stop-color="#ff329f"/><stop offset="0.522" stop-color="#ff2085"/><stop offset="0.565" stop-color="#ff1371"/><stop offset="0.609" stop-color="#ff0862"/><stop offset="0.652" stop-color="#ff0056"/><stop offset="0.696" stop-color="#ff004c"/><stop offset="0.739" stop-color="#ff0044"/><stop offset="0.783" stop-color="#ff003d"/><stop offset="0.826" stop-color="#ff0037"/><stop offset="0.870" stop-color="#ff0032"/><stop offset="0.913" stop-color="#ff002d"/><stop offset="0.957" stop-color="#ff0029"/><stop offset="1.000" stop-color="#ff0026"/></linearGradient>
<linearGradient id="c68" gradientUnits="userSpaceOnUse" x1="1045" x2="1618" y1="0" y2="0"><stop offset="0.000" stop-color="#00e8ff"/><stop offset="0.043" stop-color="#00ddff"/><stop offset="0.087" stop-color="#00d1ff"/><stop offset="0.130" stop-color="#00c4ff"/><stop offset="0.174" stop-color="#00b8ff"/><stop offset="0.217" stop-color="#00aaff"/><stop offset="0.222" stop-color="#00a9ff"/><stop offset="0.261" stop-color="#369cff"/><stop offset="0.304" stop-color="#758eff"/><stop offset="0.318" stop-color="#8989ff"/><stop offset="0.348" stop-color="#b77eff"/><stop offset="0.391" stop-color="#fc6fff"/><stop offset="0.435" stop-color="#ff4ac9"/><stop offset="0.478" stop-color="#ff31a3"/><stop offset="0.522" stop-color="#ff1f88"/><stop offset="0.565" stop-color="#ff1274"/><stop offset="0.609" stop-color="#ff0865"/><stop offset="0.650" stop-color="#ff0059"/><stop offset="0.696" stop-color="#ff004e"/><stop offset="0.739" stop-color="#ff0046"/><stop offset="0.783" stop-color="#ff003f"/><stop offset="0.826" stop-color="#ff0039"/><stop offset="0.870" stop-color="#ff0033"/><stop offset="0.913" stop-color="#ff002f"/><stop offset="0.957" stop-color="#ff002b"/><stop offset="1.000" stop-color="#ff0027"/></linearGradient>
<linearGradient id="c69" gradientUnits="userSpaceOnUse" x1="1046" x2="1616" y1="0" y2="0"><stop offset="0.000" stop-color="#00e3ff"/><stop offset="0.045" stop-color="#00d7ff"/><stop offset="0.091" stop-color="#00cbff"/><stop offset="0.136" stop-color="#00beff"/><stop offset="0.182" stop-color="#00b1ff"/><stop offset="0.222" stop-color="#00a4ff"/><stop offset="0.227" stop-color="#07a3ff"/><stop offset="0.273" stop-color="#4694ff"/><stop offset="0.317" stop-color="#8585ff"/><stop offset="0.364" stop-color="#cb75ff"/><stop offset="0.397" stop-color="#ff69ff"/><stop offset="0.409" stop-color="#ff5eee"/><stop offset="0.455" stop-color="#ff3dbb"/><stop offset="0.500" stop-color="#ff2799"/><stop offset="0.545" stop-color="#ff1780"/><stop offset="0.591" stop-color="#ff0b6e"/><stop offset="0.636" stop-color="#ff025f"/><stop offset="0.648" stop-color="#ff005c"/><stop offset="0.682" stop-color="#ff0054"/><stop offset="0.727" stop-color="#ff004a"/><stop offset="0.773" stop-color="#ff0042"/><stop offset="0.818" stop-color="#ff003b"/><stop offset="0.864" stop-color="#ff0036"/><stop offset="0.909" stop-color="#ff0031"/><stop offset="0.955" stop-color="#ff002c"/><stop offset="1.000" stop-color="#ff0028"/></linearGradient>
<linearGradient id="c70" gradientUnits="userSpaceOnUse" x1="1047" x2="1614" y1="0" y2="0"><stop offset="0.000" stop-color="#00deff"/><stop offset="0.045" stop-color="#00d2ff"/><stop offset="0.091" stop-color="#00c6ff"/><stop offset="0.136" stop-color="#00b9ff"/><stop offset="0.182" stop-color="#00acff"/><stop offset="0.222" stop-color="#00a0ff"/><stop offset="0.227" stop-color="#079eff"/><stop offset="0.273" stop-color="#4490ff"/><stop offset="0.317" stop-color="#8282ff"/><stop offset="0.364" stop-color="#c672ff"/><stop offset="0.401" stop-color="#ff64ff"/><stop offset="0.409" stop-color="#ff5df3"/><stop offset="0.455" stop-color="#ff3dbf"/><stop offset="0.500" stop-color="#ff279d"/><stop offset="0.545" stop-color="#ff1783"/><stop offset="0.591" stop-color="#ff0b71"/><stop offset="0.636" stop-color="#ff0262"/><stop offset="0.646" stop-color="#ff005f"/><stop offset="0.682" stop-color="#ff0056"/><stop offset="0.727" stop-color="#ff004c"/><stop offset="0.773" stop-color="#ff0044"/><stop offset="0.818" stop-color="#ff003d"/><stop offset="0.864" stop-color="#ff0037"/><stop offset="0.909" stop-color="#ff0032"/><stop offset="0.955" stop-color="#ff002e"/><stop offset="1.000" stop-color="#ff002a"/></linearGradient>
<linearGradient id="c71" gradientUnits="userSpaceOnUse" x1="1048" x2="1612" y1="0" y2="0"><stop offset="0.000" stop-color="#00d9ff"/><stop offset="0.045" stop-color="#00cdff"/><stop offset="0.091" stop-color="#00c1ff"/><stop offset="0.136" stop-color="#00b5ff"/><stop offset="0.182" stop-color="#00a8ff"/><stop offset="0.222" stop-color="#009cff"/><stop offset="0.227" stop-color="#079aff"/><stop offset="0.273" stop-color="#438cff"/><stop offset="0.316" stop-color="#7e7eff"/><stop offset="0.364" stop-color="#c26eff"/><stop offset="0.405" stop-color="#ff60ff"/><stop offset="0.409" stop-color="#ff5cf9"/><stop offset="0.455" stop-color="#ff3cc4"/><stop offset="0.500" stop-color="#ff26a1"/><stop offset="0.545" stop-color="#ff1787"/><stop offset="0.591" stop-color="#ff0b74"/><stop offset="0.636" stop-color="#ff0164"/><stop offset="0.645" stop-color="#ff0062"/><stop offset="0.682" stop-color="#ff0058"/><stop offset="0.727" stop-color="#ff004e"/><stop offset="0.773" stop-color="#ff0046"/><stop offset="0.818" stop-color="#ff003f"/><stop offset="0.864" stop-color="#ff0039"/><stop offset="0.909" stop-color="#ff0034"/><stop offset="0.955" stop-color="#ff002f"/><stop offset="1.000" stop-color="#ff002b"/></linearGradient>
<linearGradient id="c72" gradientUnits="userSpaceOnUse" x1="1049" x2="1610" y1="0" y2="0"><stop offset="0.000" stop-color="#00d4ff"/><stop offset="0.045" stop-color="#00c9ff"/><stop offset="0.091" stop-color="#00bdff"/><stop offset="0.136" stop-color="#00b0ff"/><stop offset="0.182" stop-color="#00a4ff"/><stop offset="0.222" stop-color="#0098ff"/><stop offset="0.227" stop-color="#0796ff"/><stop offset="0.273" stop-color="#4189ff"/><stop offset="0.316" stop-color="#7b7bff"/><stop offset="0.364" stop-color="#bd6bff"/><stop offset="0.409" stop-color="#ff5cff"/><stop offset="0.455" stop-color="#ff3bc9"/><stop offset="0.500" stop-color="#ff26a4"/><stop offset="0.545" stop-color="#ff168a"/><stop offset="0.591" stop-color="#ff0a77"/><stop offset="0.636" stop-color="#ff0167"/><stop offset="0.643" stop-color="#ff0065"/><stop offset="0.682" stop-color="#ff005b"/><stop offset="0.727" stop-color="#ff0051"/><stop offset="0.773" stop-color="#ff0048"/><stop offset="0.818" stop-color="#ff0041"/><stop offset="0.864" stop-color="#ff003b"/><stop offset="0.909" stop-color="#ff0035"/><stop offset="0.955" stop-color="#ff0031"/><stop offset="1.000" stop-color="#ff002d"/></linearGradient>
<linearGradient id="c73" gradientUnits="userSpaceOnUse" x1="1049" x2="1608" y1="0" y2="0"><stop offset="0.000" stop-color="#00d0ff"/><stop offset="0.045" stop-color="#00c4ff"/><stop offset="0.091" stop-color="#00b9ff"/><stop offset="0.136" stop-color="#00adff"/><stop offset="0.182" stop-color="#00a0ff"/><stop offset="0.223" stop-color="#0094ff"/><stop offset="0.227" stop-color="#0593ff"/><stop offset="0.273" stop-color="#3e85ff"/><stop offset="0.317" stop-color="#7878ff"/><stop offset="0.364" stop-color="#b769ff"/><stop offset="0.409" stop-color="#f859ff"/><stop offset="0.414" stop-color="#ff57ff"/><stop offset="0.455" stop-color="#ff3bcf"/><stop offset="0.500" stop-color="#ff26a9"/><stop offset="0.545" stop-color="#ff168e"/><stop offset="0.591" stop-color="#ff0a7a"/><stop offset="0.636" stop-color="#ff016a"/><stop offset="0.641" stop-color="#ff0068"/><stop offset="0.682" stop-color="#ff005d"/><stop offset="0.727" stop-color="#ff0053"/><stop offset="0.773" stop-color="#ff004a"/><stop offset="0.818" stop-color="#ff0043"/><stop offset="0.864" stop-color="#ff003d"/><stop offset="0.909" stop-color="#ff0037"/><stop offset="0.955" stop-color="#ff0032"/><stop offset="1.000" stop-color="#ff002e"/></linearGradient>
<linearGradient id="c74" gradientUnits="userSpaceOnUse" x1="1050" x2="1606" y1="0" y2="0"><stop offset="0.000" stop-color="#00cbff"/><stop offset="0.045" stop-color="#00c0ff"/><stop offset="0.091" stop-color="#00b4ff"/><stop offset="0.136" stop-color="#00a8ff"/><stop offset="0.182" stop-color="#009cff"/><stop offset="0.223" stop-color="#0090ff"/><stop offset="0.227" stop-color="#058fff"/><stop offset="0.273" stop-color="#3d82ff"/><stop offset="0.316" stop-color="#7575ff"/><stop offset="0.364" stop-color="#b366ff"/><stop offset="0.409" stop-color="#f257ff"/><stop offset="0.418" stop-color="#ff53ff"/><stop offset="0.455" stop-color="#ff3bd4"/><stop offset="0.500" stop-color="#ff25ad"/><stop offset="0.545" stop-color="#ff1592"/><stop offset="0.591" stop-color="#ff0a7d"/><stop offset="0.636" stop-color="#ff016d"/><stop offset="0.640" stop-color="#ff006c"/><stop offset="0.682" stop-color="#ff0060"/><stop offset="0.727" stop-color="#ff0055"/><stop offset="0.773" stop-color="#ff004c"/><stop offset="0.818" stop-color="#ff0045"/><stop offset="0.864" stop-color="#ff003e"/><stop offset="0.909" stop-color="#ff0039"/><stop offset="0.955" stop-color="#ff0034"/><stop offset="1.000" stop-color="#ff002f"/></linearGradient>
<linearGradient id="c75" gradientUnits="userSpaceOnUse" x1="1051" x2="1604" y1="0" y2="0"><stop offset="0.000" stop-color="#00c7ff"/><stop offset="0.045" stop-color="#00bcff"/><stop offset="0.091" stop-color="#00b0ff"/><stop offset="0.136" stop-color="#00a5ff"/><stop offset="0.182" stop-color="#0098ff"/><stop offset="0.223" stop-color="#008dff"/><stop offset="0.227" stop-color="#058cff"/><stop offset="0.273" stop-color="#3c7eff"/><stop offset="0.316" stop-color="#7272ff"/><stop offset="0.364" stop-color="#af63ff"/><stop offset="0.409" stop-color="#ed54ff"/><stop offset="0.422" stop-color="#ff50ff"/><stop offset="0.455" stop-color="#ff3ad8"/><stop offset="0.500" stop-color="#ff25b1"/><stop offset="0.545" stop-color="#ff1595"/><stop offset="0.591" stop-color="#ff0980"/><stop offset="0.636" stop-color="#ff006f"/><stop offset="0.682" stop-color="#ff0062"/><stop offset="0.727" stop-color="#ff0057"/><stop offset="0.773" stop-color="#ff004e"/><stop offset="0.818" stop-color="#ff0047"/><stop offset="0.864" stop-color="#ff0040"/><stop offset="0.909" stop-color="#ff003a"/><stop offset="0.955" stop-color="#ff0035"/><stop offset="1.000" stop-color="#ff0031"/></linearGradient>
<linearGradient id="c76" gradientUnits="userSpaceOnUse" x1="1052" x2="1602" y1="0" y2="0"><stop offset="0.000" stop-color="#00c2ff"/><stop offset="0.045" stop-color="#00b8ff"/><stop offset="0.091" stop-color="#00acff"/><stop offset="0.136" stop-color="#00a1ff"/><stop offset="0.182" stop-color="#0095ff"/><stop offset="0.223" stop-color="#0089ff"/><stop offset="0.227" stop-color="#0588ff"/><stop offset="0.273" stop-color="#3b7bff"/><stop offset="0.315" stop-color="#6f6fff"/><stop offset="0.318" stop-color="#726eff"/><stop offset="0.364" stop-color="#ac60ff"/><stop offset="0.409" stop-color="#e851ff"/><stop offset="0.426" stop-color="#ff4cff"/><stop offset="0.455" stop-color="#ff3add"/><stop offset="0.500" stop-color="#ff24b5"/><stop offset="0.545" stop-color="#ff1599"/><stop offset="0.591" stop-color="#ff0983"/><stop offset="0.636" stop-color="#ff0072"/><stop offset="0.682" stop-color="#ff0065"/><stop offset="0.727" stop-color="#ff005a"/><stop offset="0.773" stop-color="#ff0050"/><stop offset="0.818" stop-color="#ff0049"/><stop offset="0.864" stop-color="#ff0042"/><stop offset="0.909" stop-color="#ff003c"/><stop offset="0.955" stop-color="#ff0037"/><stop offset="1.000" stop-color="#ff0032"/></linearGradient>
<linearGradient id="c77" gradientUnits="userSpaceOnUse" x1="1053" x2="1600" y1="0" y2="0"><stop offset="0.000" stop-color="#00beff"/><stop offset="0.045" stop-color="#00b3ff"/><stop offset="0.091" stop-color="#00a8ff"/><stop offset="0.136" stop-color="#009dff"/><stop offset="0.182" stop-color="#0091ff"/><stop offset="0.223" stop-color="#0086ff"/><stop offset="0.227" stop-color="#0585ff"/><stop offset="0.273" stop-color="#3978ff"/><stop offset="0.315" stop-color="#6c6cff"/><stop offset="0.318" stop-color="#706bff"/><stop offset="0.364" stop-color="#a85dff"/><stop offset="0.409" stop-color="#e24fff"/><stop offset="0.431" stop-color="#ff48ff"/><stop offset="0.455" stop-color="#ff39e2"/><stop offset="0.500" stop-color="#ff24ba"/><stop offset="0.545" stop-color="#ff149c"/><stop offset="0.591" stop-color="#ff0986"/><stop offset="0.634" stop-color="#ff0076"/><stop offset="0.682" stop-color="#ff0067"/><stop offset="0.727" stop-color="#ff005c"/><stop offset="0.773" stop-color="#ff0053"/><stop offset="0.818" stop-color="#ff004b"/><stop offset="0.864" stop-color="#ff0044"/><stop offset="0.909" stop-color="#ff003e"/><stop offset="0.955" stop-color="#ff0038"/><stop offset="1.000" stop-color="#ff0034"/></linearGradient>
<linearGradient id="c78" gradientUnits="userSpaceOnUse" x1="1054" x2="1598" y1="0" y2="0"><stop offset="0.000" stop-color="#00baff"/><stop offset="0.048" stop-color="#00afff"/><stop offset="0.095" stop-color="#00a3ff"/><stop offset="0.143" stop-color="#0098ff"/><stop offset="0.190" stop-color="#008bff"/><stop offset="0.223" stop-color="#0083ff"/><stop offset="0.238" stop-color="#117eff"/><stop offset="0.286" stop-color="#4771ff"/><stop offset="0.315" stop-color="#6969ff"/><stop offset="0.333" stop-color="#7f64ff"/><stop offset="0.381" stop-color="#ba55ff"/><stop offset="0.429" stop-color="#f746ff"/><stop offset="0.435" stop-color="#ff44ff"/><stop offset="0.476" stop-color="#ff2dd2"/><stop offset="0.524" stop-color="#ff1aad"/><stop offset="0.571" stop-color="#ff0d92"/><stop offset="0.619" stop-color="#ff027e"/><stop offset="0.632" stop-color="#ff0079"/><stop offset="0.667" stop-color="#ff006e"/><stop offset="0.714" stop-color="#ff0061"/><stop offset="0.762" stop-color="#ff0057"/><stop offset="0.810" stop-color="#ff004e"/><stop offset="0.857" stop-color="#ff0046"/><stop offset="0.905" stop-color="#ff0040"/><stop offset="0.952" stop-color="#ff003a"/><stop offset="1.000" stop-color="#ff0035"/></linearGradient>
<linearGradient id="c79" gradientUnits="userSpaceOnUse" x1="1054" x2="1596" y1="0" y2="0"><stop offset="0.000" stop-color="#00b7ff"/><stop offset="0.048" stop-color="#00acff"/><stop offset="0.095" stop-color="#00a0ff"/><stop offset="0.143" stop-color="#0094ff"/><stop offset="0.190" stop-color="#0088ff"/><stop offset="0.224" stop-color="#007fff"/><stop offset="0.238" stop-color="#0f7cff"/><stop offset="0.286" stop-color="#446fff"/><stop offset="0.315" stop-color="#6666ff"/><stop offset="0.333" stop-color="#7b61ff"/><stop offset="0.381" stop-color="#b553ff"/><stop offset="0.429" stop-color="#f045ff"/><stop offset="0.440" stop-color="#ff41ff"/><stop offset="0.476" stop-color="#ff2dd7"/><stop offset="0.524" stop-color="#ff1ab2"/><stop offset="0.571" stop-color="#ff0d96"/><stop offset="0.619" stop-color="#ff0281"/><stop offset="0.631" stop-color="#ff007d"/><stop offset="0.667" stop-color="#ff0071"/><stop offset="0.714" stop-color="#ff0064"/><stop offset="0.762" stop-color="#ff0059"/><stop offset="0.810" stop-color="#ff0050"/><stop offset="0.857" stop-color="#ff0048"/><stop offset="0.905" stop-color="#ff0042"/><stop offset="0.952" stop-color="#ff003c"/><stop offset="1.000" stop-color="#ff0037"/></linearGradient>
<linearGradient id="c80" gradientUnits="userSpaceOnUse" x1="1055" x2="1594" y1="0" y2="0"><stop offset="0.000" stop-color="#00b3ff"/><stop offset="0.048" stop-color="#00a8ff"/><stop offset="0.095" stop-color="#009dff"/><stop offset="0.143" stop-color="#0091ff"/><stop offset="0.190" stop-color="#0085ff"/><stop offset="0.224" stop-color="#007cff"/><stop offset="0.238" stop-color="#0f79ff"/><stop offset="0.286" stop-color="#436cff"/><stop offset="0.315" stop-color="#6464ff"/><stop offset="0.333" stop-color="#795fff"/><stop offset="0.381" stop-color="#b151ff"/><stop offset="0.429" stop-color="#eb42ff"/><stop offset="0.445" stop-color="#ff3eff"/><stop offset="0.476" stop-color="#ff2ddc"/><stop offset="0.524" stop-color="#ff1ab6"/><stop offset="0.571" stop-color="#ff0c9a"/><stop offset="0.619" stop-color="#ff0284"/><stop offset="0.629" stop-color="#ff0081"/><stop offset="0.667" stop-color="#ff0074"/><stop offset="0.714" stop-color="#ff0066"/><stop offset="0.762" stop-color="#ff005b"/><stop offset="0.810" stop-color="#ff0052"/><stop offset="0.857" stop-color="#ff004a"/><stop offset="0.905" stop-color="#ff0043"/><stop offset="0.952" stop-color="#ff003e"/><stop offset="1.000" stop-color="#ff0038"/></linearGradient>
<linearGradient id="c81" gradientUnits="userSpaceOnUse" x1="1056" x2="1592" y1="0" y2="0"><stop offset="0.000" stop-color="#00afff"/><stop offset="0.048" stop-color="#00a4ff"/><stop offset="0.095" stop-color="#0099ff"/><stop offset="0.143" stop-color="#008eff"/><stop offset="0.190" stop-color="#0082ff"/><stop offset="0.224" stop-color="#0079ff"/><stop offset="0.238" stop-color="#0e76ff"/><stop offset="0.286" stop-color="#4269ff"/><stop offset="0.314" stop-color="#6161ff"/><stop offset="0.333" stop-color="#765cff"/><stop offset="0.381" stop-color="#ad4eff"/><stop offset="0.429" stop-color="#e640ff"/><stop offset="0.449" stop-color="#ff3aff"/><stop offset="0.476" stop-color="#ff2ce1"/><stop offset="0.524" stop-color="#ff19ba"/><stop offset="0.571" stop-color="#ff0c9d"/><stop offset="0.619" stop-color="#ff0188"/><stop offset="0.627" stop-color="#ff0085"/><stop offset="0.667" stop-color="#ff0077"/><stop offset="0.714" stop-color="#ff0069"/><stop offset="0.762" stop-color="#ff005e"/><stop offset="0.810" stop-color="#ff0054"/><stop offset="0.857" stop-color="#ff004c"/><stop offset="0.905" stop-color="#ff0045"/><stop offset="0.952" stop-color="#ff003f"/><stop offset="1.000" stop-color="#ff003a"/></linearGradient>
<linearGradient id="c82" gradientUnits="userSpaceOnUse" x1="1057" x2="1590" y1="0" y2="0"><stop offset="0.000" stop-color="#00abff"/><stop offset="0.048" stop-color="#00a1ff"/><stop offset="0.095" stop-color="#0096ff"/><stop offset="0.143" stop-color="#008aff"/><stop offset="0.190" stop-color="#007fff"/><stop offset="0.224" stop-color="#0076ff"/><stop offset="0.238" stop-color="#0e73ff"/><stop offset="0.286" stop-color="#4066ff"/><stop offset="0.314" stop-color="#5f5fff"/><stop offset="0.333" stop-color="#7459ff"/><stop offset="0.381" stop-color="#aa4cff"/><stop offset="0.429" stop-color="#e13eff"/><stop offset="0.453" stop-color="#ff37ff"/><stop offset="0.476" stop-color="#ff2be6"/><stop offset="0.524" stop-color="#ff19be"/><stop offset="0.571" stop-color="#ff0ba1"/><stop offset="0.619" stop-color="#ff018b"/><stop offset="0.625" stop-color="#ff0088"/><stop offset="0.667" stop-color="#ff0079"/><stop offset="0.714" stop-color="#ff006b"/><stop offset="0.762" stop-color="#ff0060"/><stop offset="0.810" stop-color="#ff0056"/><stop offset="0.857" stop-color="#ff004e"/><stop offset="0.905" stop-color="#ff0047"/><stop offset="0.952" stop-color="#ff0041"/><stop offset="1.000" stop-color="#ff003c"/></linearGradient>
<linearGradient id="c83" gradientUnits="userSpaceOnUse" x1="1058" x2="1588" y1="0" y2="0"><stop offset="0.000" stop-color="#00a8ff"/><stop offset="0.048" stop-color="#009dff"/><stop offset="0.095" stop-color="#0092ff"/><stop offset="0.143" stop-color="#0087ff"/><stop offset="0.190" stop-color="#007cff"/><stop offset="0.224" stop-color="#0073ff"/><stop offset="0.238" stop-color="#0e70ff"/><stop offset="0.286" stop-color="#3f64ff"/><stop offset="0.314" stop-color="#5c5cff"/><stop offset="0.333" stop-color="#7257ff"/><stop offset="0.381" stop-color="#a64aff"/><stop offset="0.429" stop-color="#dd3cff"/><stop offset="0.458" stop-color="#ff34ff"/><stop offset="0.476" stop-color="#ff2beb"/><stop offset="0.524" stop-color="#ff18c2"/><stop offset="0.571" stop-color="#ff0ba4"/><stop offset="0.619" stop-color="#ff018e"/><stop offset="0.623" stop-color="#ff008c"/><stop offset="0.667" stop-color="#ff007c"/><stop offset="0.714" stop-color="#ff006e"/><stop offset="0.762" stop-color="#ff0062"/><stop offset="0.810" stop-color="#ff0058"/><stop offset="0.857" stop-color="#ff0050"/><stop offset="0.905" stop-color="#ff0049"/><stop offset="0.952" stop-color="#ff0043"/><stop offset="1.000" stop-color="#ff003d"/></linearGradient>
<linearGradient id="c84" gradientUnits="userSpaceOnUse" x1="1059" x2="1586" y1="0" y2="0"><stop offset="0.000" stop-color="#00a4ff"/><stop offset="0.048" stop-color="#009aff"/><stop offset="0.095" stop-color="#008fff"/><stop offset="0.143" stop-color="#0084ff"/><stop offset="0.190" stop-color="#0079ff"/><stop offset="0.224" stop-color="#0071ff"/><stop offset="0.238" stop-color="#0e6dff"/><stop offset="0.286" stop-color="#3e61ff"/><stop offset="0.313" stop-color="#5a5aff"/><stop offset="0.333" stop-color="#7055ff"/><stop offset="0.381" stop-color="#a348ff"/><stop offset="0.429" stop-color="#d83bff"/><stop offset="0.462" stop-color="#ff31ff"/><stop offset="0.476" stop-color="#ff2af0"/><stop offset="0.524" stop-color="#ff18c6"/><stop offset="0.571" stop-color="#ff0aa8"/><stop offset="0.619" stop-color="#ff0091"/><stop offset="0.667" stop-color="#ff007f"/><stop offset="0.714" stop-color="#ff0070"/><stop offset="0.762" stop-color="#ff0065"/><stop offset="0.810" stop-color="#ff005b"/><stop offset="0.857" stop-color="#ff0052"/><stop offset="0.905" stop-color="#ff004b"/><stop offset="0.952" stop-color="#ff0044"/><stop offset="1.000" stop-color="#ff003f"/></linearGradient>
<linearGradient id="c85" gradientUnits="userSpaceOnUse" x1="1060" x2="1584" y1="0" y2="0"><stop offset="0.000" stop-color="#00a1ff"/><stop offset="0.048" stop-color="#0096ff"/><stop offset="0.095" stop-color="#008cff"/><stop offset="0.143" stop-color="#0081ff"/><stop offset="0.190" stop-color="#0076ff"/><stop offset="0.224" stop-color="#006eff"/><stop offset="0.238" stop-color="#0d6bff"/><stop offset="0.286" stop-color="#3d5fff"/><stop offset="0.313" stop-color="#5858ff"/><stop offset="0.333" stop-color="#6d52ff"/><stop offset="0.381" stop-color="#a046ff"/><stop offset="0.429" stop-color="#d439ff"/><stop offset="0.467" stop-color="#ff2eff"/><stop offset="0.476" stop-color="#ff2af5"/><stop offset="0.524" stop-color="#ff17ca"/><stop offset="0.571" stop-color="#ff0aac"/><stop offset="0.618" stop-color="#ff0094"/><stop offset="0.667" stop-color="#ff0082"/><stop offset="0.714" stop-color="#ff0073"/><stop offset="0.762" stop-color="#ff0067"/><stop offset="0.810" stop-color="#ff005d"/><stop offset="0.857" stop-color="#ff0054"/><stop offset="0.905" stop-color="#ff004d"/><stop offset="0.952" stop-color="#ff0046"/><stop offset="1.000" stop-color="#ff0040"/></linearGradient>
<linearGradient id="c86" gradientUnits="userSpaceOnUse" x1="1061" x2="1582" y1="0" y2="0"><stop offset="0.000" stop-color="#009dff"/><stop offset="0.048" stop-color="#0093ff"/><stop offset="0.095" stop-color="#0089ff"/><stop offset="0.143" stop-color="#007eff"/><stop offset="0.190" stop-color="#0073ff"/><stop offset="0.224" stop-color="#006bff"/><stop offset="0.238" stop-color="#0d68ff"/><stop offset="0.286" stop-color="#3b5cff"/><stop offset="0.312" stop-color="#5656ff"/><stop offset="0.333" stop-color="#6b50ff"/><stop offset="0.381" stop-color="#9d44ff"/><stop offset="0.429" stop-color="#d037ff"/><stop offset="0.472" stop-color="#ff2bff"/><stop offset="0.476" stop-color="#ff29fa"/><stop offset="0.524" stop-color="#ff17cf"/><stop offset="0.571" stop-color="#ff09af"/><stop offset="0.616" stop-color="#ff0099"/><stop offset="0.667" stop-color="#ff0085"/><stop offset="0.714" stop-color="#ff0076"/><stop offset="0.762" stop-color="#ff0069"/><stop offset="0.810" stop-color="#ff005f"/><stop offset="0.857" stop-color="#ff0056"/><stop offset="0.905" stop-color="#ff004f"/><stop offset="0.952" stop-color="#ff0048"/><stop offset="1.000" stop-color="#ff0042"/></linearGradient>
<linearGradient id="c87" gradientUnits="userSpaceOnUse" x1="1062" x2="1580" y1="0" y2="0"><stop offset="0.000" stop-color="#009aff"/><stop offset="0.050" stop-color="#0090ff"/><stop offset="0.100" stop-color="#0085ff"/><stop offset="0.150" stop-color="#007aff"/><stop offset="0.200" stop-color="#006eff"/><stop offset="0.224" stop-color="#0069ff"/><stop offset="0.250" stop-color="#1863ff"/><stop offset="0.300" stop-color="#4856ff"/><stop offset="0.312" stop-color="#5454ff"/><stop offset="0.350" stop-color="#7a4aff"/><stop offset="0.400" stop-color="#ad3dff"/><stop offset="0.450" stop-color="#e22fff"/><stop offset="0.476" stop-color="#ff28ff"/><stop offset="0.500" stop-color="#ff1ee7"/><stop offset="0.550" stop-color="#ff0ec0"/><stop offset="0.600" stop-color="#ff03a4"/><stop offset="0.614" stop-color="#ff009d"/><stop offset="0.650" stop-color="#ff008e"/><stop offset="0.700" stop-color="#ff007d"/><stop offset="0.750" stop-color="#ff006f"/><stop offset="0.800" stop-color="#ff0063"/><stop offset="0.850" stop-color="#ff0059"/><stop offset="0.900" stop-color="#ff0051"/><stop offset="0.950" stop-color="#ff004a"/><stop offset="1.000" stop-color="#ff0044"/></linearGradient>
<linearGradient id="c88" gradientUnits="userSpaceOnUse" x1="1062" x2="1579" y1="0" y2="0"><stop offset="0.000" stop-color="#0097ff"/><stop offset="0.050" stop-color="#008dff"/><stop offset="0.100" stop-color="#0082ff"/><stop offset="0.150" stop-color="#0077ff"/><stop offset="0.200" stop-color="#006cff"/><stop offset="0.225" stop-color="#0066ff"/><stop offset="0.250" stop-color="#1760ff"/><stop offset="0.300" stop-color="#4654ff"/><stop offset="0.312" stop-color="#5252ff"/><stop offset="0.350" stop-color="#7748ff"/><stop offset="0.400" stop-color="#a93bff"/><stop offset="0.450" stop-color="#de2eff"/><stop offset="0.481" stop-color="#ff26ff"/><stop offset="0.500" stop-color="#ff1eec"/><stop offset="0.550" stop-color="#ff0ec4"/><stop offset="0.600" stop-color="#ff02a7"/><stop offset="0.611" stop-color="#ff00a1"/><stop offset="0.650" stop-color="#ff0091"/><stop offset="0.700" stop-color="#ff007f"/><stop offset="0.750" stop-color="#ff0071"/><stop offset="0.800" stop-color="#ff0065"/><stop offset="0.850" stop-color="#ff005b"/><stop offset="0.900" stop-color="#ff0053"/><stop offset="0.950" stop-color="#ff004c"/><stop offset="1.000" stop-color="#ff0045"/></linearGradient>
<linearGradient id="c89" gradientUnits="userSpaceOnUse" x1="1063" x2="1577" y1="0" y2="0"><stop offset="0.000" stop-color="#0094ff"/><stop offset="0.050" stop-color="#008aff"/><stop offset="0.100" stop-color="#007fff"/><stop offset="0.150" stop-color="#0075ff"/><stop offset="0.200" stop-color="#006aff"/><stop offset="0.225" stop-color="#0064ff"/><stop offset="0.250" stop-color="#165eff"/><stop offset="0.300" stop-color="#4552ff"/><stop offset="0.311" stop-color="#5050ff"/><stop offset="0.350" stop-color="#7546ff"/><stop offset="0.400" stop-color="#a639ff"/><stop offset="0.450" stop-color="#d92cff"/><stop offset="0.486" stop-color="#ff23ff"/><stop offset="0.500" stop-color="#ff1df1"/><stop offset="0.550" stop-color="#ff0dc8"/><stop offset="0.600" stop-color="#ff02ab"/><stop offset="0.609" stop-color="#ff00a6"/><stop offset="0.650" stop-color="#ff0094"/><stop offset="0.700" stop-color="#ff0082"/><stop offset="0.750" stop-color="#ff0073"/><stop offset="0.800" stop-color="#ff0067"/><stop offset="0.850" stop-color="#ff005d"/><stop offset="0.900" stop-color="#ff0055"/><stop offset="0.950" stop-color="#ff004d"/><stop offset="1.000" stop-color="#ff0047"/></linearGradient>
<linearGradient id="c90" gradientUnits="userSpaceOnUse" x1="1064" x2="1575" y1="0" y2="0"><stop offset="0.000" stop-color="#0091ff"/><stop offset="0.050" stop-color="#0087ff"/><stop offset="0.100" stop-color="#007dff"/><stop offset="0.150" stop-color="#0072ff"/><stop offset="0.200" stop-color="#0067ff"/><stop offset="0.225" stop-color="#0061ff"/><stop offset="0.250" stop-color="#165cff"/><stop offset="0.300" stop-color="#4350ff"/><stop offset="0.311" stop-color="#4e4eff"/><stop offset="0.350" stop-color="#7244ff"/><stop offset="0.400" stop-color="#a338ff"/><stop offset="0.450" stop-color="#d52bff"/><stop offset="0.491" stop-color="#ff20ff"/><stop offset="0.500" stop-color="#ff1df6"/><stop offset="0.550" stop-color="#ff0dcc"/><stop offset="0.600" stop-color="#ff01ae"/><stop offset="0.607" stop-color="#ff00aa"/><stop offset="0.650" stop-color="#ff0097"/><stop offset="0.700" stop-color="#ff0085"/><stop offset="0.750" stop-color="#ff0076"/><stop offset="0.800" stop-color="#ff006a"/><stop offset="0.850" stop-color="#ff0060"/><stop offset="0.900" stop-color="#ff0057"/><stop offset="0.950" stop-color="#ff004f"/><stop offset="1.000" stop-color="#ff0049"/></linearGradient>
<linearGradient id="c91" gradientUnits="userSpaceOnUse" x1="1065" x2="1573" y1="0" y2="0"><stop offset="0.000" stop-color="#008eff"/><stop offset="0.050" stop-color="#0084ff"/><stop offset="0.100" stop-color="#007aff"/><stop offset="0.150" stop-color="#006fff"/><stop offset="0.200" stop-color="#0065ff"/><stop offset="0.225" stop-color="#005fff"/><stop offset="0.250" stop-color="#165aff"/><stop offset="0.300" stop-color="#424eff"/><stop offset="0.310" stop-color="#4c4cff"/><stop offset="0.350" stop-color="#7042ff"/><stop offset="0.400" stop-color="#a036ff"/><stop offset="0.450" stop-color="#d12aff"/><stop offset="0.496" stop-color="#ff1eff"/><stop offset="0.500" stop-color="#ff1cfb"/><stop offset="0.550" stop-color="#ff0cd1"/><stop offset="0.600" stop-color="#ff01b2"/><stop offset="0.605" stop-color="#ff00af"/><stop offset="0.650" stop-color="#ff009a"/><stop offset="0.700" stop-color="#ff0088"/><stop offset="0.750" stop-color="#ff0079"/><stop offset="0.800" stop-color="#ff006c"/><stop offset="0.850" stop-color="#ff0062"/><stop offset="0.900" stop-color="#ff0059"/><stop offset="0.950" stop-color="#ff0051"/><stop offset="1.000" stop-color="#ff004a"/></linearGradient>
<linearGradient id="c92" gradientUnits="userSpaceOnUse" x1="1066" x2="1571" y1="0" y2="0"><stop offset="0.000" stop-color="#008bff"/><stop offset="0.050" stop-color="#0081ff"/><stop offset="0.100" stop-color="#0077ff"/><stop offset="0.150" stop-color="#006dff"/><stop offset="0.200" stop-color="#0062ff"/><stop offset="0.225" stop-color="#005dff"/><stop offset="0.250" stop-color="#1557ff"/><stop offset="0.300" stop-color="#414cff"/><stop offset="0.310" stop-color="#4a4aff"/><stop offset="0.350" stop-color="#6e40ff"/><stop offset="0.400" stop-color="#9d34ff"/><stop offset="0.450" stop-color="#cd28ff"/><stop offset="0.500" stop-color="#fe1bff"/><stop offset="0.550" stop-color="#ff0cd5"/><stop offset="0.600" stop-color="#ff00b5"/><stop offset="0.650" stop-color="#ff009d"/><stop offset="0.700" stop-color="#ff008a"/><stop offset="0.750" stop-color="#ff007b"/><stop offset="0.800" stop-color="#ff006f"/><stop offset="0.850" stop-color="#ff0064"/><stop offset="0.900" stop-color="#ff005b"/><stop offset="0.950" stop-color="#ff0053"/><stop offset="1.000" stop-color="#ff004c"/></linearGradient>
<linearGradient id="c93" gradientUnits="userSpaceOnUse" x1="1067" x2="1569" y1="0" y2="0"><stop offset="0.000" stop-color="#0088ff"/><stop offset="0.050" stop-color="#007fff"/><stop offset="0.100" stop-color="#0075ff"/><stop offset="0.150" stop-color="#006aff"/><stop offset="0.200" stop-color="#0060ff"/><stop offset="0.225" stop-color="#005bff"/><stop offset="0.250" stop-color="#1555ff"/><stop offset="0.300" stop-color="#404aff"/><stop offset="0.309" stop-color="#4848ff"/><stop offset="0.350" stop-color="#6c3fff"/><stop offset="0.400" stop-color="#9a33ff"/><stop offset="0.450" stop-color="#c927ff"/><stop offset="0.500" stop-color="#fa1aff"/><stop offset="0.506" stop-color="#ff19ff"/><stop offset="0.550" stop-color="#ff0bd9"/><stop offset="0.600" stop-color="#ff00b9"/><stop offset="0.650" stop-color="#ff00a1"/><stop offset="0.700" stop-color="#ff008d"/><stop offset="0.750" stop-color="#ff007e"/><stop offset="0.800" stop-color="#ff0071"/><stop offset="0.850" stop-color="#ff0066"/><stop offset="0.900" stop-color="#ff005d"/><stop offset="0.950" stop-color="#ff0055"/><stop offset="1.000" stop-color="#ff004e"/></linearGradient>
<linearGradient id="c94" gradientUnits="userSpaceOnUse" x1="1068" x2="1567" y1="0" y2="0"><stop offset="0.000" stop-color="#0085ff"/><stop offset="0.050" stop-color="#007cff"/><stop offset="0.100" stop-color="#0072ff"/><stop offset="0.150" stop-color="#0068ff"/><stop offset="0.200" stop-color="#005eff"/><stop offset="0.225" stop-color="#0058ff"/><stop offset="0.250" stop-color="#1453ff"/><stop offset="0.300" stop-color="#3f48ff"/><stop offset="0.309" stop-color="#4646ff"/><stop offset="0.350" stop-color="#6a3dff"/><stop offset="0.400" stop-color="#9731ff"/><stop offset="0.450" stop-color="#c525ff"/><stop offset="0.500" stop-color="#f519ff"/><stop offset="0.511" stop-color="#ff17ff"/><stop offset="0.550" stop-color="#ff0bdd"/><stop offset="0.598" stop-color="#ff00be"/><stop offset="0.650" stop-color="#ff00a4"/><stop offset="0.700" stop-color="#ff0090"/><stop offset="0.750" stop-color="#ff0081"/><stop offset="0.800" stop-color="#ff0073"/><stop offset="0.850" stop-color="#ff0068"/><stop offset="0.900" stop-color="#ff005f"/><stop offset="0.950" stop-color="#ff0057"/><stop offset="1.000" stop-color="#ff0050"/></linearGradient>
<linearGradient id="c95" gradientUnits="userSpaceOnUse" x1="1069" x2="1565" y1="0" y2="0"><stop offset="0.000" stop-color="#0083ff"/><stop offset="0.050" stop-color="#0079ff"/><stop offset="0.100" stop-color="#0070ff"/><stop offset="0.150" stop-color="#0066ff"/><stop offset="0.200" stop-color="#005cff"/><stop offset="0.225" stop-color="#0056ff"/><stop offset="0.250" stop-color="#1451ff"/><stop offset="0.300" stop-color="#3e46ff"/><stop offset="0.308" stop-color="#4545ff"/><stop offset="0.350" stop-color="#683bff"/><stop offset="0.400" stop-color="#9430ff"/><stop offset="0.450" stop-color="#c124ff"/><stop offset="0.500" stop-color="#f018ff"/><stop offset="0.516" stop-color="#ff14ff"/><stop offset="0.550" stop-color="#ff0ae2"/><stop offset="0.596" stop-color="#ff00c3"/><stop offset="0.600" stop-color="#ff00c1"/><stop offset="0.650" stop-color="#ff00a7"/><stop offset="0.700" stop-color="#ff0093"/><stop offset="0.750" stop-color="#ff0083"/><stop offset="0.800" stop-color="#ff0076"/><stop offset="0.850" stop-color="#ff006b"/><stop offset="0.900" stop-color="#ff0061"/><stop offset="0.950" stop-color="#ff0059"/><stop offset="1.000" stop-color="#ff0052"/></linearGradient>
<linearGradient id="c96" gradientUnits="userSpaceOnUse" x1="1070" x2="1563" y1="0" y2="0"><stop offset="0.000" stop-color="#0080ff"/><stop offset="0.053" stop-color="#0076ff"/><stop offset="0.105" stop-color="#006cff"/><stop offset="0.158" stop-color="#0062ff"/><stop offset="0.211" stop-color="#0057ff"/><stop offset="0.225" stop-color="#0054ff"/><stop offset="0.263" stop-color="#1e4cff"/><stop offset="0.308" stop-color="#4343ff"/><stop offset="0.316" stop-color="#4a41ff"/><stop offset="0.368" stop-color="#7636ff"/><stop offset="0.421" stop-color="#a42aff"/><stop offset="0.474" stop-color="#d31dff"/><stop offset="0.521" stop-color="#ff12ff"/><stop offset="0.526" stop-color="#ff10fa"/><stop offset="0.579" stop-color="#ff03d2"/><stop offset="0.593" stop-color="#ff00c9"/><stop offset="0.632" stop-color="#ff00b3"/><stop offset="0.684" stop-color="#ff009c"/><stop offset="0.737" stop-color="#ff008a"/><stop offset="0.789" stop-color="#ff007b"/><stop offset="0.842" stop-color="#ff006f"/><stop offset="0.895" stop-color="#ff0064"/><stop offset="0.947" stop-color="#ff005b"/><stop offset="1.000" stop-color="#ff0054"/></linearGradient>
<linearGradient id="c97" gradientUnits="userSpaceOnUse" x1="1071" x2="1561" y1="0" y2="0"><stop offset="0.000" stop-color="#007dff"/><stop offset="0.053" stop-color="#0074ff"/><stop offset="0.105" stop-color="#006aff"/><stop offset="0.158" stop-color="#0060ff"/><stop offset="0.211" stop-color="#0055ff"/><stop offset="0.225" stop-color="#0052ff"/><stop offset="0.263" stop-color="#1e4aff"/><stop offset="0.307" stop-color="#4141ff"/><stop offset="0.316" stop-color="#483fff"/><stop offset="0.368" stop-color="#7434ff"/><stop offset="0.421" stop-color="#a128ff"/><stop offset="0.474" stop-color="#cf1cff"/><stop offset="0.526" stop-color="#ff10ff"/><stop offset="0.579" stop-color="#ff02d6"/><stop offset="0.591" stop-color="#ff00ce"/><stop offset="0.632" stop-color="#ff00b7"/><stop offset="0.684" stop-color="#ff00a0"/><stop offset="0.737" stop-color="#ff008d"/><stop offset="0.789" stop-color="#ff007e"/><stop offset="0.842" stop-color="#ff0071"/><stop offset="0.895" stop-color="#ff0066"/><stop offset="0.947" stop-color="#ff005d"/><stop offset="1.000" stop-color="#ff0055"/></linearGradient>
<linearGradient id="c98" gradientUnits="userSpaceOnUse" x1="1072" x2="1559" y1="0" y2="0"><stop offset="0.000" stop-color="#007bff"/><stop offset="0.053" stop-color="#0071ff"/><stop offset="0.105" stop-color="#0068ff"/><stop offset="0.158" stop-color="#005eff"/><stop offset="0.211" stop-color="#0053ff"/><stop offset="0.225" stop-color="#0050ff"/><stop offset="0.263" stop-color="#1d49ff"/><stop offset="0.307" stop-color="#4040ff"/><stop offset="0.316" stop-color="#473eff"/><stop offset="0.368" stop-color="#7232ff"/><stop offset="0.421" stop-color="#9e27ff"/><stop offset="0.474" stop-color="#cb1bff"/><stop offset="0.526" stop-color="#fa0fff"/><stop offset="0.532" stop-color="#ff0eff"/><stop offset="0.579" stop-color="#ff02da"/><stop offset="0.588" stop-color="#ff00d4"/><stop offset="0.632" stop-color="#ff00bb"/><stop offset="0.684" stop-color="#ff00a3"/><stop offset="0.737" stop-color="#ff0090"/><stop offset="0.789" stop-color="#ff0080"/><stop offset="0.842" stop-color="#ff0073"/><stop offset="0.895" stop-color="#ff0069"/><stop offset="0.947" stop-color="#ff005f"/><stop offset="1.000" stop-color="#ff0057"/></linearGradient>
<linearGradient id="c99" gradientUnits="userSpaceOnUse" x1="1073" x2="1557" y1="0" y2="0"><stop offset="0.000" stop-color="#0078ff"/><stop offset="0.053" stop-color="#006fff"/><stop offset="0.105" stop-color="#0065ff"/><stop offset="0.158" stop-color="#005bff"/><stop offset="0.211" stop-color="#0051ff"/><stop offset="0.225" stop-color="#004eff"/><stop offset="0.263" stop-color="#1d47ff"/><stop offset="0.306" stop-color="#3e3eff"/><stop offset="0.316" stop-color="#463cff"/><stop offset="0.368" stop-color="#7031ff"/><stop offset="0.421" stop-color="#9b26ff"/><stop offset="0.474" stop-color="#c81aff"/><stop offset="0.526" stop-color="#f60eff"/><stop offset="0.537" stop-color="#ff0cff"/><stop offset="0.579" stop-color="#ff01de"/><stop offset="0.586" stop-color="#ff00d9"/><stop offset="0.632" stop-color="#ff00be"/><stop offset="0.684" stop-color="#ff00a6"/><stop offset="0.737" stop-color="#ff0093"/><stop offset="0.789" stop-color="#ff0083"/><stop offset="0.842" stop-color="#ff0076"/><stop offset="0.895" stop-color="#ff006b"/><stop offset="0.947" stop-color="#ff0061"/><stop offset="1.000" stop-color="#ff0059"/></linearGradient>
<linearGradient id="c100" gradientUnits="userSpaceOnUse" x1="1074" x2="1555" y1="0" y2="0"><stop offset="0.000" stop-color="#0076ff"/><stop offset="0.053" stop-color="#006dff"/><stop offset="0.105" stop-color="#0063ff"/><stop offset="0.158" stop-color="#0059ff"/><stop offset="0.211" stop-color="#004fff"/><stop offset="0.225" stop-color="#004cff"/><stop offset="0.263" stop-color="#1c45ff"/><stop offset="0.306" stop-color="#3d3dff"/><stop offset="0.316" stop-color="#443aff"/><stop offset="0.368" stop-color="#6e30ff"/><stop offset="0.421" stop-color="#9824ff"/><stop offset="0.474" stop-color="#c419ff"/><stop offset="0.526" stop-color="#f10dff"/><stop offset="0.542" stop-color="#ff09ff"/><stop offset="0.579" stop-color="#ff01e2"/><stop offset="0.583" stop-color="#ff00df"/><stop offset="0.632" stop-color="#ff00c2"/><stop offset="0.684" stop-color="#ff00a9"/><stop offset="0.737" stop-color="#ff0096"/><stop offset="0.789" stop-color="#ff0086"/><stop offset="0.842" stop-color="#ff0078"/><stop offset="0.895" stop-color="#ff006d"/><stop offset="0.947" stop-color="#ff0063"/><stop offset="1.000" stop-color="#ff005b"/></linearGradient>
<linearGradient id="c101" gradientUnits="userSpaceOnUse" x1="1075" x2="1553" y1="0" y2="0"><stop offset="0.000" stop-color="#0073ff"/><stop offset="0.053" stop-color="#006aff"/><stop offset="0.105" stop-color="#0061ff"/><stop offset="0.158" stop-color="#0057ff"/><stop offset="0.211" stop-color="#004dff"/><stop offset="0.225" stop-color="#004bff"/><stop offset="0.263" stop-color="#1c43ff"/><stop offset="0.305" stop-color="#3b3bff"/><stop offset="0.316" stop-color="#4339ff"/><stop offset="0.368" stop-color="#6c2eff"/><stop offset="0.421" stop-color="#9623ff"/><stop offset="0.474" stop-color="#c018ff"/><stop offset="0.526" stop-color="#ed0cff"/><stop offset="0.548" stop-color="#ff07ff"/><stop offset="0.579" stop-color="#ff00e7"/><stop offset="0.632" stop-color="#ff00c6"/><stop offset="0.684" stop-color="#ff00ad"/><stop offset="0.737" stop-color="#ff0099"/><stop offset="0.789" stop-color="#ff0088"/><stop offset="0.842" stop-color="#ff007b"/><stop offset="0.895" stop-color="#ff006f"/><stop offset="0.947" stop-color="#ff0066"/><stop offset="1.000" stop-color="#ff005d"/></linearGradient>
<linearGradient id="c102" gradientUnits="userSpaceOnUse" x1="1076" x2="1551" y1="0" y2="0"><stop offset="0.000" stop-color="#0071ff"/><stop offset="0.053" stop-color="#0068ff"/><stop offset="0.105" stop-color="#005fff"/><stop offset="0.158" stop-color="#0055ff"/><stop offset="0.211" stop-color="#004cff"/><stop offset="0.225" stop-color="#0049ff"/><stop offset="0.263" stop-color="#1b42ff"/><stop offset="0.304" stop-color="#3a3aff"/><stop offset="0.316" stop-color="#4237ff"/><stop offset="0.368" stop-color="#6a2dff"/><stop offset="0.421" stop-color="#9322ff"/><stop offset="0.474" stop-color="#bd17ff"/><stop offset="0.526" stop-color="#e80cff"/><stop offset="0.553" stop-color="#ff06ff"/><stop offset="0.578" stop-color="#ff00ec"/><stop offset="0.632" stop-color="#ff00ca"/><stop offset="0.684" stop-color="#ff00b0"/><stop offset="0.737" stop-color="#ff009c"/><stop offset="0.789" stop-color="#ff008b"/><stop offset="0.842" stop-color="#ff007d"/><stop offset="0.895" stop-color="#ff0072"/><stop offset="0.947" stop-color="#ff0068"/><stop offset="1.000" stop-color="#ff005f"/></linearGradient>
<linearGradient id="c103" gradientUnits="userSpaceOnUse" x1="1077" x2="1549" y1="0" y2="0"><stop offset="0.000" stop-color="#006fff"/><stop offset="0.053" stop-color="#0066ff"/><stop offset="0.105" stop-color="#005dff"/><stop offset="0.158" stop-color="#0053ff"/><stop offset="0.211" stop-color="#004aff"/><stop offset="0.225" stop-color="#0047ff"/><stop offset="0.263" stop-color="#1b40ff"/><stop offset="0.304" stop-color="#3838ff"/><stop offset="0.316" stop-color="#4136ff"/><stop offset="0.368" stop-color="#682cff"/><stop offset="0.421" stop-color="#9021ff"/><stop offset="0.474" stop-color="#ba16ff"/><stop offset="0.526" stop-color="#e40bff"/><stop offset="0.559" stop-color="#ff04ff"/><stop offset="0.576" stop-color="#ff00f2"/><stop offset="0.579" stop-color="#ff00ef"/><stop offset="0.632" stop-color="#ff00ce"/><stop offset="0.684" stop-color="#ff00b3"/><stop offset="0.737" stop-color="#ff009f"/><stop offset="0.789" stop-color="#ff008e"/><stop offset="0.842" stop-color="#ff0080"/><stop offset="0.895" stop-color="#ff0074"/><stop offset="0.947" stop-color="#ff006a"/><stop offset="1.000" stop-color="#ff0061"/></linearGradient>
<linearGradient id="c104" gradientUnits="userSpaceOnUse" x1="1078" x2="1547" y1="0" y2="0"><stop offset="0.000" stop-color="#006cff"/><stop offset="0.053" stop-color="#0064ff"/><stop offset="0.105" stop-color="#005bff"/><stop offset="0.158" stop-color="#0051ff"/><stop offset="0.211" stop-color="#0048ff"/><stop offset="0.225" stop-color="#0045ff"/><stop offset="0.263" stop-color="#1a3eff"/><stop offset="0.303" stop-color="#3737ff"/><stop offset="0.316" stop-color="#4034ff"/><stop offset="0.368" stop-color="#662aff"/><stop offset="0.421" stop-color="#8e20ff"/><stop offset="0.474" stop-color="#b615ff"/><stop offset="0.526" stop-color="#e00aff"/><stop offset="0.565" stop-color="#ff02ff"/><stop offset="0.573" stop-color="#ff00f9"/><stop offset="0.579" stop-color="#ff00f4"/><stop offset="0.632" stop-color="#ff00d1"/><stop offset="0.684" stop-color="#ff00b7"/><stop offset="0.737" stop-color="#ff00a2"/><stop offset="0.789" stop-color="#ff0091"/><stop offset="0.842" stop-color="#ff0082"/><stop offset="0.895" stop-color="#ff0076"/><stop offset="0.947" stop-color="#ff006c"/><stop offset="1.000" stop-color="#ff0063"/></linearGradient>
<linearGradient id="c105" gradientUnits="userSpaceOnUse" x1="1079" x2="1545" y1="0" y2="0"><stop offset="0.000" stop-color="#006aff"/><stop offset="0.056" stop-color="#0061ff"/><stop offset="0.111" stop-color="#0058ff"/><stop offset="0.167" stop-color="#004eff"/><stop offset="0.222" stop-color="#0044ff"/><stop offset="0.278" stop-color="#243aff"/><stop offset="0.303" stop-color="#3535ff"/><stop offset="0.333" stop-color="#4b30ff"/><stop offset="0.389" stop-color="#7325ff"/><stop offset="0.444" stop-color="#9d1aff"/><stop offset="0.500" stop-color="#c70fff"/><stop offset="0.556" stop-color="#f303ff"/><stop offset="0.570" stop-color="#ff00ff"/><stop offset="0.611" stop-color="#ff00e2"/><stop offset="0.667" stop-color="#ff00c3"/><stop offset="0.722" stop-color="#ff00aa"/><stop offset="0.778" stop-color="#ff0097"/><stop offset="0.833" stop-color="#ff0087"/><stop offset="0.889" stop-color="#ff007a"/><stop offset="0.944" stop-color="#ff006f"/><stop offset="1.000" stop-color="#ff0065"/></linearGradient>
<linearGradient id="c106" gradientUnits="userSpaceOnUse" x1="1080" x2="1543" y1="0" y2="0"><stop offset="0.000" stop-color="#0068ff"/><stop offset="0.056" stop-color="#005fff"/><stop offset="0.111" stop-color="#0056ff"/><stop offset="0.167" stop-color="#004cff"/><stop offset="0.222" stop-color="#0043ff"/><stop offset="0.278" stop-color="#2339ff"/><stop offset="0.302" stop-color="#3434ff"/><stop offset="0.333" stop-color="#4a2eff"/><stop offset="0.389" stop-color="#7124ff"/><stop offset="0.444" stop-color="#9a19ff"/><stop offset="0.500" stop-color="#c40eff"/><stop offset="0.556" stop-color="#ee03ff"/><stop offset="0.568" stop-color="#f800ff"/><stop offset="0.577" stop-color="#ff00ff"/><stop offset="0.611" stop-color="#ff00e6"/><stop offset="0.667" stop-color="#ff00c6"/><stop offset="0.722" stop-color="#ff00ae"/><stop offset="0.778" stop-color="#ff009a"/><stop offset="0.833" stop-color="#ff008a"/><stop offset="0.889" stop-color="#ff007d"/><stop offset="0.944" stop-color="#ff0071"/><stop offset="1.000" stop-color="#ff0067"/></linearGradient>
<linearGradient id="c107" gradientUnits="userSpaceOnUse" x1="1081" x2="1542" y1="0" y2="0"><stop offset="0.000" stop-color="#0066ff"/><stop offset="0.056" stop-color="#005dff"/><stop offset="0.111" stop-color="#0054ff"/><stop offset="0.167" stop-color="#004aff"/><stop offset="0.222" stop-color="#0041ff"/><stop offset="0.278" stop-color="#2337ff"/><stop offset="0.301" stop-color="#3333ff"/><stop offset="0.333" stop-color="#492dff"/><stop offset="0.389" stop-color="#7022ff"/><stop offset="0.444" stop-color="#9818ff"/><stop offset="0.500" stop-color="#c10dff"/><stop offset="0.556" stop-color="#eb02ff"/><stop offset="0.564" stop-color="#f100ff"/><stop offset="0.581" stop-color="#ff00ff"/><stop offset="0.611" stop-color="#ff00ea"/><stop offset="0.667" stop-color="#ff00c9"/><stop offset="0.722" stop-color="#ff00b0"/><stop offset="0.778" stop-color="#ff009c"/><stop offset="0.833" stop-color="#ff008c"/><stop offset="0.889" stop-color="#ff007f"/><stop offset="0.944" stop-color="#ff0073"/><stop offset="1.000" stop-color="#ff0069"/></linearGradient>
<linearGradient id="c108" gradientUnits="userSpaceOnUse" x1="1082" x2="1540" y1="0" y2="0"><stop offset="0.000" stop-color="#0064ff"/><stop offset="0.056" stop-color="#005bff"/><stop offset="0.111" stop-color="#0052ff"/><stop offset="0.167" stop-color="#0049ff"/><stop offset="0.222" stop-color="#003fff"/><stop offset="0.278" stop-color="#2335ff"/><stop offset="0.300" stop-color="#3232ff"/><stop offset="0.333" stop-color="#482cff"/><stop offset="0.389" stop-color="#6e21ff"/><stop offset="0.444" stop-color="#9517ff"/><stop offset="0.500" stop-color="#be0cff"/><stop offset="0.556" stop-color="#e701ff"/><stop offset="0.561" stop-color="#eb00ff"/><stop offset="0.587" stop-color="#ff00ff"/><stop offset="0.611" stop-color="#ff00ee"/><stop offset="0.667" stop-color="#ff00cd"/><stop offset="0.722" stop-color="#ff00b4"/><stop offset="0.778" stop-color="#ff009f"/><stop offset="0.833" stop-color="#ff008f"/><stop offset="0.889" stop-color="#ff0081"/><stop offset="0.944" stop-color="#ff0075"/><stop offset="1.000" stop-color="#ff006b"/></linearGradient>
<linearGradient id="c109" gradientUnits="userSpaceOnUse" x1="1083" x2="1538" y1="0" y2="0"><stop offset="0.000" stop-color="#0062ff"/><stop offset="0.056" stop-color="#0059ff"/><stop offset="0.111" stop-color="#0050ff"/><stop offset="0.167" stop-color="#0047ff"/><stop offset="0.222" stop-color="#003eff"/><stop offset="0.278" stop-color="#2234ff"/><stop offset="0.300" stop-color="#3030ff"/><stop offset="0.333" stop-color="#472aff"/><stop offset="0.389" stop-color="#6c20ff"/><stop offset="0.444" stop-color="#9316ff"/><stop offset="0.500" stop-color="#ba0bff"/><stop offset="0.556" stop-color="#e300ff"/><stop offset="0.593" stop-color="#ff00ff"/><stop offset="0.611" stop-color="#ff00f2"/><stop offset="0.667" stop-color="#ff00d1"/><stop offset="0.722" stop-color="#ff00b7"/><stop offset="0.778" stop-color="#ff00a3"/><stop offset="0.833" stop-color="#ff0092"/><stop offset="0.889" stop-color="#ff0084"/><stop offset="0.944" stop-color="#ff0078"/><stop offset="1.000" stop-color="#ff006e"/></linearGradient>
<linearGradient id="c110" gradientUnits="userSpaceOnUse" x1="1084" x2="1536" y1="0" y2="0"><stop offset="0.000" stop-color="#0060ff"/><stop offset="0.056" stop-color="#0057ff"/><stop offset="0.111" stop-color="#004eff"/><stop offset="0.167" stop-color="#0045ff"/><stop offset="0.222" stop-color="#003cff"/><stop offset="0.278" stop-color="#2133ff"/><stop offset="0.299" stop-color="#2f2fff"/><stop offset="0.333" stop-color="#4529ff"/><stop offset="0.389" stop-color="#6a1fff"/><stop offset="0.444" stop-color="#9015ff"/><stop offset="0.500" stop-color="#b70bff"/><stop offset="0.555" stop-color="#de00ff"/><stop offset="0.600" stop-color="#ff00ff"/><stop offset="0.611" stop-color="#ff00f7"/><stop offset="0.667" stop-color="#ff00d5"/><stop offset="0.722" stop-color="#ff00bb"/><stop offset="0.778" stop-color="#ff00a6"/><stop offset="0.833" stop-color="#ff0095"/><stop offset="0.889" stop-color="#ff0086"/><stop offset="0.944" stop-color="#ff007a"/><stop offset="1.000" stop-color="#ff0070"/></linearGradient>
<linearGradient id="c111" gradientUnits="userSpaceOnUse" x1="1086" x2="1534" y1="0" y2="0"><stop offset="0.000" stop-color="#005dff"/><stop offset="0.056" stop-color="#0055ff"/><stop offset="0.111" stop-color="#004cff"/><stop offset="0.167" stop-color="#0043ff"/><stop offset="0.222" stop-color="#003aff"/><stop offset="0.278" stop-color="#2231ff"/><stop offset="0.297" stop-color="#2e2eff"/><stop offset="0.333" stop-color="#4528ff"/><stop offset="0.389" stop-color="#691eff"/><stop offset="0.444" stop-color="#8f14ff"/><stop offset="0.500" stop-color="#b50aff"/><stop offset="0.551" stop-color="#d800ff"/><stop offset="0.556" stop-color="#dc00ff"/><stop offset="0.605" stop-color="#ff00ff"/><stop offset="0.611" stop-color="#ff00fb"/><stop offset="0.667" stop-color="#ff00d8"/><stop offset="0.722" stop-color="#ff00be"/><stop offset="0.778" stop-color="#ff00a9"/><stop offset="0.833" stop-color="#ff0097"/><stop offset="0.889" stop-color="#ff0089"/><stop offset="0.944" stop-color="#ff007d"/><stop offset="1.000" stop-color="#ff0072"/></linearGradient>
<linearGradient id="c112" gradientUnits="userSpaceOnUse" x1="1087" x2="1532" y1="0" y2="0"><stop offset="0.000" stop-color="#005bff"/><stop offset="0.056" stop-color="#0053ff"/><stop offset="0.111" stop-color="#004bff"/><stop offset="0.167" stop-color="#0042ff"/><stop offset="0.222" stop-color="#0039ff"/><stop offset="0.278" stop-color="#2130ff"/><stop offset="0.296" stop-color="#2d2dff"/><stop offset="0.333" stop-color="#4426ff"/><stop offset="0.389" stop-color="#681dff"/><stop offset="0.444" stop-color="#8c13ff"/><stop offset="0.500" stop-color="#b109ff"/><stop offset="0.548" stop-color="#d300ff"/><stop offset="0.556" stop-color="#d800ff"/><stop offset="0.611" stop-color="#ff00ff"/><stop offset="0.667" stop-color="#ff00dc"/><stop offset="0.722" stop-color="#ff00c1"/><stop offset="0.778" stop-color="#ff00ac"/><stop offset="0.833" stop-color="#ff009a"/><stop offset="0.889" stop-color="#ff008b"/><stop offset="0.944" stop-color="#ff007f"/><stop offset="1.000" stop-color="#ff0074"/></linearGradient>
<linearGradient id="c113" gradientUnits="userSpaceOnUse" x1="1088" x2="1530" y1="0" y2="0"><stop offset="0.000" stop-color="#0059ff"/><stop offset="0.059" stop-color="#0051ff"/><stop offset="0.118" stop-color="#0048ff"/><stop offset="0.176" stop-color="#003fff"/><stop offset="0.223" stop-color="#0037ff"/><stop offset="0.235" stop-color="#0735ff"/><stop offset="0.294" stop-color="#2b2cff"/><stop offset="0.353" stop-color="#4f22ff"/><stop offset="0.412" stop-color="#7518ff"/><stop offset="0.471" stop-color="#9b0dff"/><stop offset="0.529" stop-color="#c203ff"/><stop offset="0.545" stop-color="#cd00ff"/><stop offset="0.588" stop-color="#ea00ff"/><stop offset="0.618" stop-color="#ff00ff"/><stop offset="0.647" stop-color="#ff00ec"/><stop offset="0.706" stop-color="#ff00cc"/><stop offset="0.765" stop-color="#ff00b4"/><stop offset="0.824" stop-color="#ff00a0"/><stop offset="0.882" stop-color="#ff0090"/><stop offset="0.941" stop-color="#ff0082"/><stop offset="1.000" stop-color="#ff0077"/></linearGradient>
<linearGradient id="c114" gradientUnits="userSpaceOnUse" x1="1089" x2="1528" y1="0" y2="0"><stop offset="0.000" stop-color="#0058ff"/><stop offset="0.059" stop-color="#004fff"/><stop offset="0.118" stop-color="#0046ff"/><stop offset="0.176" stop-color="#003dff"/><stop offset="0.223" stop-color="#0036ff"/><stop offset="0.235" stop-color="#0734ff"/><stop offset="0.294" stop-color="#2a2aff"/><stop offset="0.353" stop-color="#4e21ff"/><stop offset="0.412" stop-color="#7317ff"/><stop offset="0.471" stop-color="#980dff"/><stop offset="0.529" stop-color="#bf02ff"/><stop offset="0.542" stop-color="#c700ff"/><stop offset="0.588" stop-color="#e600ff"/><stop offset="0.624" stop-color="#ff00ff"/><stop offset="0.647" stop-color="#ff00f0"/><stop offset="0.706" stop-color="#ff00d0"/><stop offset="0.765" stop-color="#ff00b7"/><stop offset="0.824" stop-color="#ff00a3"/><stop offset="0.882" stop-color="#ff0092"/><stop offset="0.941" stop-color="#ff0085"/><stop offset="1.000" stop-color="#ff0079"/></linearGradient>
<linearGradient id="c115" gradientUnits="userSpaceOnUse" x1="1090" x2="1526" y1="0" y2="0"><stop offset="0.000" stop-color="#0056ff"/><stop offset="0.059" stop-color="#004dff"/><stop offset="0.118" stop-color="#0045ff"/><stop offset="0.176" stop-color="#003cff"/><stop offset="0.223" stop-color="#0034ff"/><stop offset="0.235" stop-color="#0733ff"/><stop offset="0.294" stop-color="#2929ff"/><stop offset="0.353" stop-color="#4d20ff"/><stop offset="0.412" stop-color="#7116ff"/><stop offset="0.471" stop-color="#960cff"/><stop offset="0.529" stop-color="#bb02ff"/><stop offset="0.539" stop-color="#c200ff"/><stop offset="0.588" stop-color="#e200ff"/><stop offset="0.631" stop-color="#ff00ff"/><stop offset="0.647" stop-color="#ff00f4"/><stop offset="0.706" stop-color="#ff00d4"/><stop offset="0.765" stop-color="#ff00bb"/><stop offset="0.824" stop-color="#ff00a6"/><stop offset="0.882" stop-color="#ff0095"/><stop offset="0.941" stop-color="#ff0087"/><stop offset="1.000" stop-color="#ff007b"/></linearGradient>
<linearGradient id="c116" gradientUnits="userSpaceOnUse" x1="1091" x2="1524" y1="0" y2="0"><stop offset="0.000" stop-color="#0054ff"/><stop offset="0.059" stop-color="#004cff"/><stop offset="0.118" stop-color="#0043ff"/><stop offset="0.176" stop-color="#003aff"/><stop offset="0.223" stop-color="#0033ff"/><stop offset="0.235" stop-color="#0731ff"/><stop offset="0.293" stop-color="#2828ff"/><stop offset="0.353" stop-color="#4b1fff"/><stop offset="0.412" stop-color="#6f15ff"/><stop offset="0.471" stop-color="#930bff"/><stop offset="0.529" stop-color="#b801ff"/><stop offset="0.536" stop-color="#bd00ff"/><stop offset="0.588" stop-color="#de00ff"/><stop offset="0.638" stop-color="#ff00ff"/><stop offset="0.647" stop-color="#ff00f9"/><stop offset="0.706" stop-color="#ff00d8"/><stop offset="0.765" stop-color="#ff00be"/><stop offset="0.824" stop-color="#ff00a9"/><stop offset="0.882" stop-color="#ff0098"/><stop offset="0.941" stop-color="#ff008a"/><stop offset="1.000" stop-color="#ff007e"/></linearGradient>
<linearGradient id="c117" gradientUnits="userSpaceOnUse" x1="1092" x2="1522" y1="0" y2="0"><stop offset="0.000" stop-color="#0052ff"/><stop offset="0.059" stop-color="#004aff"/><stop offset="0.118" stop-color="#0041ff"/><stop offset="0.176" stop-color="#0039ff"/><stop offset="0.223" stop-color="#0032ff"/><stop offset="0.235" stop-color="#0730ff"/><stop offset="0.293" stop-color="#2727ff"/><stop offset="0.353" stop-color="#4a1eff"/><stop offset="0.412" stop-color="#6d14ff"/><stop offset="0.471" stop-color="#910bff"/><stop offset="0.529" stop-color="#b501ff"/><stop offset="0.533" stop-color="#b700ff"/><stop offset="0.588" stop-color="#da00ff"/><stop offset="0.644" stop-color="#ff00ff"/><stop offset="0.706" stop-color="#ff00dc"/><stop offset="0.765" stop-color="#ff00c1"/><stop offset="0.824" stop-color="#ff00ac"/><stop offset="0.882" stop-color="#ff009b"/><stop offset="0.941" stop-color="#ff008c"/><stop offset="1.000" stop-color="#ff0080"/></linearGradient>
<linearGradient id="c118" gradientUnits="userSpaceOnUse" x1="1093" x2="1520" y1="0" y2="0"><stop offset="0.000" stop-color="#0050ff"/><stop offset="0.059" stop-color="#0048ff"/><stop offset="0.118" stop-color="#0040ff"/><stop offset="0.176" stop-color="#0037ff"/><stop offset="0.223" stop-color="#0030ff"/><stop offset="0.235" stop-color="#072fff"/><stop offset="0.292" stop-color="#2626ff"/><stop offset="0.353" stop-color="#491dff"/><stop offset="0.412" stop-color="#6b13ff"/><stop offset="0.471" stop-color="#8e0aff"/><stop offset="0.529" stop-color="#b200ff"/><stop offset="0.588" stop-color="#d700ff"/><stop offset="0.647" stop-color="#fc00ff"/><stop offset="0.651" stop-color="#ff00ff"/><stop offset="0.706" stop-color="#ff00e0"/><stop offset="0.765" stop-color="#ff00c5"/><stop offset="0.824" stop-color="#ff00b0"/><stop offset="0.882" stop-color="#ff009e"/><stop offset="0.941" stop-color="#ff008f"/><stop offset="1.000" stop-color="#ff0083"/></linearGradient>
<linearGradient id="c119" gradientUnits="userSpaceOnUse" x1="1094" x2="1518" y1="0" y2="0"><stop offset="0.000" stop-color="#004fff"/><stop offset="0.059" stop-color="#0047ff"/><stop offset="0.118" stop-color="#003eff"/><stop offset="0.176" stop-color="#0036ff"/><stop offset="0.223" stop-color="#002fff"/><stop offset="0.235" stop-color="#072dff"/><stop offset="0.291" stop-color="#2525ff"/><stop offset="0.353" stop-color="#481cff"/><stop offset="0.412" stop-color="#6912ff"/><stop offset="0.471" stop-color="#8c09ff"/><stop offset="0.527" stop-color="#ad00ff"/><stop offset="0.588" stop-color="#d300ff"/><stop offset="0.647" stop-color="#f800ff"/><stop offset="0.658" stop-color="#ff00ff"/><stop offset="0.706" stop-color="#ff00e4"/><stop offset="0.765" stop-color="#ff00c9"/><stop offset="0.824" stop-color="#ff00b3"/><stop offset="0.882" stop-color="#ff00a1"/><stop offset="0.941" stop-color="#ff0092"/><stop offset="1.000" stop-color="#ff0085"/></linearGradient>
<linearGradient id="c120" gradientUnits="userSpaceOnUse" x1="1096" x2="1516" y1="0" y2="0"><stop offset="0.000" stop-color="#004dff"/><stop offset="0.059" stop-color="#0045ff"/><stop offset="0.118" stop-color="#003dff"/><stop offset="0.176" stop-color="#0034ff"/><stop offset="0.221" stop-color="#002eff"/><stop offset="0.235" stop-color="#072cff"/><stop offset="0.289" stop-color="#2424ff"/><stop offset="0.294" stop-color="#2723ff"/><stop offset="0.353" stop-color="#471aff"/><stop offset="0.412" stop-color="#6811ff"/><stop offset="0.471" stop-color="#8a08ff"/><stop offset="0.522" stop-color="#a800ff"/><stop offset="0.529" stop-color="#ad00ff"/><stop offset="0.588" stop-color="#d000ff"/><stop offset="0.647" stop-color="#f400ff"/><stop offset="0.665" stop-color="#ff00ff"/><stop offset="0.706" stop-color="#ff00e7"/><stop offset="0.765" stop-color="#ff00cc"/><stop offset="0.824" stop-color="#ff00b6"/><stop offset="0.882" stop-color="#ff00a4"/><stop offset="0.941" stop-color="#ff0095"/><stop offset="1.000" stop-color="#ff0088"/></linearGradient>
<linearGradient id="c121" gradientUnits="userSpaceOnUse" x1="1097" x2="1514" y1="0" y2="0"><stop offset="0.000" stop-color="#004bff"/><stop offset="0.059" stop-color="#0043ff"/><stop offset="0.118" stop-color="#003bff"/><stop offset="0.176" stop-color="#0033ff"/><stop offset="0.221" stop-color="#002dff"/><stop offset="0.235" stop-color="#072bff"/><stop offset="0.288" stop-color="#2323ff"/><stop offset="0.294" stop-color="#2622ff"/><stop offset="0.353" stop-color="#461aff"/><stop offset="0.412" stop-color="#6711ff"/><stop offset="0.471" stop-color="#8808ff"/><stop offset="0.519" stop-color="#a400ff"/><stop offset="0.529" stop-color="#aa00ff"/><stop offset="0.588" stop-color="#cc00ff"/><stop offset="0.647" stop-color="#f000ff"/><stop offset="0.672" stop-color="#ff00ff"/><stop offset="0.706" stop-color="#ff00ec"/><stop offset="0.765" stop-color="#ff00d0"/><stop offset="0.824" stop-color="#ff00b9"/><stop offset="0.882" stop-color="#ff00a7"/><stop offset="0.941" stop-color="#ff0097"/><stop offset="1.000" stop-color="#ff008a"/></linearGradient>
<linearGradient id="c122" gradientUnits="userSpaceOnUse" x1="1098" x2="1512" y1="0" y2="0"><stop offset="0.000" stop-color="#0049ff"/><stop offset="0.062" stop-color="#0041ff"/><stop offset="0.125" stop-color="#0039ff"/><stop offset="0.188" stop-color="#0030ff"/><stop offset="0.221" stop-color="#002bff"/><stop offset="0.250" stop-color="#0f27ff"/><stop offset="0.287" stop-color="#2222ff"/><stop offset="0.312" stop-color="#301eff"/><stop offset="0.375" stop-color="#5115ff"/><stop offset="0.438" stop-color="#730cff"/><stop offset="0.500" stop-color="#9602ff"/><stop offset="0.515" stop-color="#9f00ff"/><stop offset="0.562" stop-color="#ba00ff"/><stop offset="0.625" stop-color="#df00ff"/><stop offset="0.679" stop-color="#ff00ff"/><stop offset="0.688" stop-color="#ff00fa"/><stop offset="0.750" stop-color="#ff00da"/><stop offset="0.812" stop-color="#ff00c0"/><stop offset="0.875" stop-color="#ff00ac"/><stop offset="0.938" stop-color="#ff009b"/><stop offset="1.000" stop-color="#ff008d"/></linearGradient>
<linearGradient id="c123" gradientUnits="userSpaceOnUse" x1="1099" x2="1510" y1="0" y2="0"><stop offset="0.000" stop-color="#0048ff"/><stop offset="0.062" stop-color="#0040ff"/><stop offset="0.125" stop-color="#0037ff"/><stop offset="0.188" stop-color="#002fff"/><stop offset="0.221" stop-color="#002aff"/><stop offset="0.250" stop-color="#0f26ff"/><stop offset="0.286" stop-color="#2121ff"/><stop offset="0.312" stop-color="#2f1dff"/><stop offset="0.375" stop-color="#5014ff"/><stop offset="0.438" stop-color="#710bff"/><stop offset="0.500" stop-color="#9402ff"/><stop offset="0.512" stop-color="#9a00ff"/><stop offset="0.562" stop-color="#b700ff"/><stop offset="0.625" stop-color="#db00ff"/><stop offset="0.687" stop-color="#ff00ff"/><stop offset="0.750" stop-color="#ff00de"/><stop offset="0.812" stop-color="#ff00c4"/><stop offset="0.875" stop-color="#ff00af"/><stop offset="0.938" stop-color="#ff009e"/><stop offset="1.000" stop-color="#ff008f"/></linearGradient>
<linearGradient id="c124" gradientUnits="userSpaceOnUse" x1="1100" x2="1508" y1="0" y2="0"><stop offset="0.000" stop-color="#0046ff"/><stop offset="0.062" stop-color="#003eff"/><stop offset="0.125" stop-color="#0036ff"/><stop offset="0.188" stop-color="#002eff"/><stop offset="0.221" stop-color="#0029ff"/><stop offset="0.250" stop-color="#0e25ff"/><stop offset="0.285" stop-color="#2020ff"/><stop offset="0.312" stop-color="#2e1cff"/><stop offset="0.375" stop-color="#4e14ff"/><stop offset="0.438" stop-color="#6f0bff"/><stop offset="0.500" stop-color="#9101ff"/><stop offset="0.508" stop-color="#9600ff"/><stop offset="0.562" stop-color="#b400ff"/><stop offset="0.625" stop-color="#d700ff"/><stop offset="0.688" stop-color="#fb00ff"/><stop offset="0.694" stop-color="#ff00ff"/><stop offset="0.750" stop-color="#ff00e2"/><stop offset="0.812" stop-color="#ff00c8"/><stop offset="0.875" stop-color="#ff00b2"/><stop offset="0.938" stop-color="#ff00a1"/><stop offset="1.000" stop-color="#ff0092"/></linearGradient>
<linearGradient id="c125" gradientUnits="userSpaceOnUse" x1="1101" x2="1506" y1="0" y2="0"><stop offset="0.000" stop-color="#0045ff"/><stop offset="0.062" stop-color="#003dff"/><stop offset="0.125" stop-color="#0035ff"/><stop offset="0.188" stop-color="#002cff"/><stop offset="0.221" stop-color="#0028ff"/><stop offset="0.250" stop-color="#0e24ff"/><stop offset="0.285" stop-color="#1f1fff"/><stop offset="0.312" stop-color="#2d1cff"/><stop offset="0.375" stop-color="#4d13ff"/><stop offset="0.438" stop-color="#6e0aff"/><stop offset="0.500" stop-color="#8f01ff"/><stop offset="0.505" stop-color="#9100ff"/><stop offset="0.562" stop-color="#b100ff"/><stop offset="0.625" stop-color="#d300ff"/><stop offset="0.688" stop-color="#f700ff"/><stop offset="0.702" stop-color="#ff00ff"/><stop offset="0.750" stop-color="#ff00e6"/><stop offset="0.812" stop-color="#ff00cb"/><stop offset="0.875" stop-color="#ff00b6"/><stop offset="0.938" stop-color="#ff00a4"/><stop offset="1.000" stop-color="#ff0095"/></linearGradient>
<linearGradient id="c126" gradientUnits="userSpaceOnUse" x1="1103" x2="1505" y1="0" y2="0"><stop offset="0.000" stop-color="#0043ff"/><stop offset="0.062" stop-color="#003bff"/><stop offset="0.125" stop-color="#0033ff"/><stop offset="0.188" stop-color="#002bff"/><stop offset="0.219" stop-color="#0027ff"/><stop offset="0.250" stop-color="#0f23ff"/><stop offset="0.281" stop-color="#1e1eff"/><stop offset="0.312" stop-color="#2e1aff"/><stop offset="0.375" stop-color="#4d12ff"/><stop offset="0.438" stop-color="#6d09ff"/><stop offset="0.499" stop-color="#8d00ff"/><stop offset="0.562" stop-color="#af00ff"/><stop offset="0.625" stop-color="#d100ff"/><stop offset="0.688" stop-color="#f400ff"/><stop offset="0.707" stop-color="#ff00ff"/><stop offset="0.750" stop-color="#ff00e9"/><stop offset="0.812" stop-color="#ff00ce"/><stop offset="0.875" stop-color="#ff00b8"/><stop offset="0.938" stop-color="#ff00a6"/><stop offset="1.000" stop-color="#ff0097"/></linearGradient>
<linearGradient id="c127" gradientUnits="userSpaceOnUse" x1="1104" x2="1503" y1="0" y2="0"><stop offset="0.000" stop-color="#0041ff"/><stop offset="0.062" stop-color="#003aff"/><stop offset="0.125" stop-color="#0032ff"/><stop offset="0.188" stop-color="#002aff"/><stop offset="0.219" stop-color="#0026ff"/><stop offset="0.250" stop-color="#0f22ff"/><stop offset="0.280" stop-color="#1e1eff"/><stop offset="0.312" stop-color="#2d19ff"/><stop offset="0.375" stop-color="#4c11ff"/><stop offset="0.438" stop-color="#6b08ff"/><stop offset="0.495" stop-color="#8900ff"/><stop offset="0.500" stop-color="#8b00ff"/><stop offset="0.562" stop-color="#ac00ff"/><stop offset="0.625" stop-color="#ce00ff"/><stop offset="0.688" stop-color="#f000ff"/><stop offset="0.715" stop-color="#ff00ff"/><stop offset="0.750" stop-color="#ff00ed"/><stop offset="0.812" stop-color="#ff00d1"/><stop offset="0.875" stop-color="#ff00bb"/><stop offset="0.938" stop-color="#ff00a9"/><stop offset="1.000" stop-color="#ff009a"/></linearGradient>
<linearGradient id="c128" gradientUnits="userSpaceOnUse" x1="1105" x2="1501" y1="0" y2="0"><stop offset="0.000" stop-color="#0040ff"/><stop offset="0.062" stop-color="#0038ff"/><stop offset="0.125" stop-color="#0030ff"/><stop offset="0.188" stop-color="#0029ff"/><stop offset="0.218" stop-color="#0025ff"/><stop offset="0.250" stop-color="#0f21ff"/><stop offset="0.280" stop-color="#1d1dff"/><stop offset="0.312" stop-color="#2c18ff"/><stop offset="0.375" stop-color="#4b10ff"/><stop offset="0.438" stop-color="#6a07ff"/><stop offset="0.491" stop-color="#8500ff"/><stop offset="0.500" stop-color="#8900ff"/><stop offset="0.562" stop-color="#a900ff"/><stop offset="0.625" stop-color="#ca00ff"/><stop offset="0.688" stop-color="#ec00ff"/><stop offset="0.723" stop-color="#ff00ff"/><stop offset="0.750" stop-color="#ff00f1"/><stop offset="0.812" stop-color="#ff00d5"/><stop offset="0.875" stop-color="#ff00bf"/><stop offset="0.938" stop-color="#ff00ac"/><stop offset="1.000" stop-color="#ff009d"/></linearGradient>
<linearGradient id="c129" gradientUnits="userSpaceOnUse" x1="1106" x2="1499" y1="0" y2="0"><stop offset="0.000" stop-color="#003eff"/><stop offset="0.062" stop-color="#0037ff"/><stop offset="0.125" stop-color="#002fff"/><stop offset="0.188" stop-color="#0027ff"/><stop offset="0.218" stop-color="#0024ff"/><stop offset="0.250" stop-color="#0f20ff"/><stop offset="0.279" stop-color="#1c1cff"/><stop offset="0.312" stop-color="#2c17ff"/><stop offset="0.375" stop-color="#490fff"/><stop offset="0.438" stop-color="#6807ff"/><stop offset="0.488" stop-color="#8100ff"/><stop offset="0.500" stop-color="#8700ff"/><stop offset="0.562" stop-color="#a600ff"/><stop offset="0.625" stop-color="#c700ff"/><stop offset="0.688" stop-color="#e800ff"/><stop offset="0.731" stop-color="#ff00ff"/><stop offset="0.750" stop-color="#ff00f5"/><stop offset="0.812" stop-color="#ff00d9"/><stop offset="0.875" stop-color="#ff00c2"/><stop offset="0.938" stop-color="#ff00af"/><stop offset="1.000" stop-color="#ff00a0"/></linearGradient>
<linearGradient id="c130" gradientUnits="userSpaceOnUse" x1="1107" x2="1497" y1="0" y2="0"><stop offset="0.000" stop-color="#003dff"/><stop offset="0.067" stop-color="#0035ff"/><stop offset="0.133" stop-color="#002dff"/><stop offset="0.200" stop-color="#0025ff"/><stop offset="0.218" stop-color="#0022ff"/><stop offset="0.267" stop-color="#161cff"/><stop offset="0.278" stop-color="#1b1bff"/><stop offset="0.333" stop-color="#3514ff"/><stop offset="0.400" stop-color="#540bff"/><stop offset="0.467" stop-color="#7402ff"/><stop offset="0.484" stop-color="#7d00ff"/><stop offset="0.533" stop-color="#9500ff"/><stop offset="0.600" stop-color="#b700ff"/><stop offset="0.667" stop-color="#d900ff"/><stop offset="0.733" stop-color="#fc00ff"/><stop offset="0.739" stop-color="#ff00ff"/><stop offset="0.800" stop-color="#ff00e2"/><stop offset="0.867" stop-color="#ff00c8"/><stop offset="0.933" stop-color="#ff00b4"/><stop offset="1.000" stop-color="#ff00a3"/></linearGradient>
<linearGradient id="c131" gradientUnits="userSpaceOnUse" x1="1108" x2="1495" y1="0" y2="0"><stop offset="0.000" stop-color="#003bff"/><stop offset="0.067" stop-color="#0034ff"/><stop offset="0.133" stop-color="#002cff"/><stop offset="0.200" stop-color="#0024ff"/><stop offset="0.218" stop-color="#0021ff"/><stop offset="0.267" stop-color="#161bff"/><stop offset="0.277" stop-color="#1a1aff"/><stop offset="0.333" stop-color="#3413ff"/><stop offset="0.400" stop-color="#530aff"/><stop offset="0.467" stop-color="#7202ff"/><stop offset="0.480" stop-color="#7900ff"/><stop offset="0.533" stop-color="#9300ff"/><stop offset="0.600" stop-color="#b400ff"/><stop offset="0.667" stop-color="#d500ff"/><stop offset="0.733" stop-color="#f800ff"/><stop offset="0.748" stop-color="#ff00ff"/><stop offset="0.800" stop-color="#ff00e6"/><stop offset="0.867" stop-color="#ff00cc"/><stop offset="0.933" stop-color="#ff00b7"/><stop offset="1.000" stop-color="#ff00a5"/></linearGradient>
<linearGradient id="c132" gradientUnits="userSpaceOnUse" x1="1110" x2="1493" y1="0" y2="0"><stop offset="0.000" stop-color="#003aff"/><stop offset="0.067" stop-color="#0032ff"/><stop offset="0.133" stop-color="#002aff"/><stop offset="0.200" stop-color="#0022ff"/><stop offset="0.216" stop-color="#0020ff"/><stop offset="0.267" stop-color="#161aff"/><stop offset="0.274" stop-color="#1919ff"/><stop offset="0.333" stop-color="#3412ff"/><stop offset="0.400" stop-color="#520aff"/><stop offset="0.467" stop-color="#7101ff"/><stop offset="0.474" stop-color="#7500ff"/><stop offset="0.533" stop-color="#9100ff"/><stop offset="0.600" stop-color="#b100ff"/><stop offset="0.667" stop-color="#d200ff"/><stop offset="0.733" stop-color="#f400ff"/><stop offset="0.755" stop-color="#ff00ff"/><stop offset="0.800" stop-color="#ff00ea"/><stop offset="0.867" stop-color="#ff00d0"/><stop offset="0.933" stop-color="#ff00ba"/><stop offset="1.000" stop-color="#ff00a8"/></linearGradient>
<linearGradient id="c133" gradientUnits="userSpaceOnUse" x1="1111" x2="1491" y1="0" y2="0"><stop offset="0.000" stop-color="#0038ff"/><stop offset="0.067" stop-color="#0031ff"/><stop offset="0.133" stop-color="#0029ff"/><stop offset="0.200" stop-color="#0021ff"/><stop offset="0.216" stop-color="#001fff"/><stop offset="0.267" stop-color="#1619ff"/><stop offset="0.273" stop-color="#1919ff"/><stop offset="0.333" stop-color="#3311ff"/><stop offset="0.400" stop-color="#5109ff"/><stop offset="0.467" stop-color="#6f00ff"/><stop offset="0.533" stop-color="#8e00ff"/><stop offset="0.600" stop-color="#ae00ff"/><stop offset="0.667" stop-color="#ce00ff"/><stop offset="0.733" stop-color="#f000ff"/><stop offset="0.764" stop-color="#ff00ff"/><stop offset="0.800" stop-color="#ff00ee"/><stop offset="0.867" stop-color="#ff00d3"/><stop offset="0.933" stop-color="#ff00be"/><stop offset="1.000" stop-color="#ff00ac"/></linearGradient>
<linearGradient id="c134" gradientUnits="userSpaceOnUse" x1="1112" x2="1489" y1="0" y2="0"><stop offset="0.000" stop-color="#0037ff"/><stop offset="0.067" stop-color="#0030ff"/><stop offset="0.133" stop-color="#0028ff"/><stop offset="0.200" stop-color="#0020ff"/><stop offset="0.216" stop-color="#001eff"/><stop offset="0.267" stop-color="#1518ff"/><stop offset="0.272" stop-color="#1818ff"/><stop offset="0.333" stop-color="#3210ff"/><stop offset="0.400" stop-color="#5008ff"/><stop offset="0.466" stop-color="#6d00ff"/><stop offset="0.533" stop-color="#8c00ff"/><stop offset="0.600" stop-color="#ab00ff"/><stop offset="0.667" stop-color="#cb00ff"/><stop offset="0.733" stop-color="#eb00ff"/><stop offset="0.773" stop-color="#ff00ff"/><stop offset="0.800" stop-color="#ff00f2"/><stop offset="0.867" stop-color="#ff00d7"/><stop offset="0.933" stop-color="#ff00c1"/><stop offset="1.000" stop-color="#ff00af"/></linearGradient>
<linearGradient id="c135" gradientUnits="userSpaceOnUse" x1="1113" x2="1487" y1="0" y2="0"><stop offset="0.000" stop-color="#0036ff"/><stop offset="0.067" stop-color="#002eff"/><stop offset="0.133" stop-color="#0027ff"/><stop offset="0.200" stop-color="#001fff"/><stop offset="0.216" stop-color="#001dff"/><stop offset="0.267" stop-color="#1518ff"/><stop offset="0.271" stop-color="#1717ff"/><stop offset="0.333" stop-color="#3110ff"/><stop offset="0.400" stop-color="#4e08ff"/><stop offset="0.462" stop-color="#6a00ff"/><stop offset="0.467" stop-color="#6c00ff"/><stop offset="0.533" stop-color="#8a00ff"/><stop offset="0.600" stop-color="#a800ff"/><stop offset="0.667" stop-color="#c800ff"/><stop offset="0.733" stop-color="#e700ff"/><stop offset="0.782" stop-color="#ff00ff"/><stop offset="0.800" stop-color="#ff00f6"/><stop offset="0.867" stop-color="#ff00db"/><stop offset="0.933" stop-color="#ff00c4"/><stop offset="1.000" stop-color="#ff00b2"/></linearGradient>
<linearGradient id="c136" gradientUnits="userSpaceOnUse" x1="1115" x2="1485" y1="0" y2="0"><stop offset="0.000" stop-color="#0034ff"/><stop offset="0.067" stop-color="#002dff"/><stop offset="0.133" stop-color="#0026ff"/><stop offset="0.200" stop-color="#001eff"/><stop offset="0.214" stop-color="#001cff"/><stop offset="0.267" stop-color="#1616ff"/><stop offset="0.333" stop-color="#310fff"/><stop offset="0.400" stop-color="#4e07ff"/><stop offset="0.456" stop-color="#6600ff"/><stop offset="0.467" stop-color="#6b00ff"/><stop offset="0.533" stop-color="#8800ff"/><stop offset="0.600" stop-color="#a600ff"/><stop offset="0.667" stop-color="#c500ff"/><stop offset="0.733" stop-color="#e400ff"/><stop offset="0.790" stop-color="#ff00ff"/><stop offset="0.800" stop-color="#ff00fa"/><stop offset="0.867" stop-color="#ff00df"/><stop offset="0.933" stop-color="#ff00c8"/><stop offset="1.000" stop-color="#ff00b5"/></linearGradient>
<linearGradient id="c137" gradientUnits="userSpaceOnUse" x1="1116" x2="1483" y1="0" y2="0"><stop offset="0.000" stop-color="#0033ff"/><stop offset="0.067" stop-color="#002cff"/><stop offset="0.133" stop-color="#0024ff"/><stop offset="0.200" stop-color="#001dff"/><stop offset="0.214" stop-color="#001cff"/><stop offset="0.267" stop-color="#1516ff"/><stop offset="0.333" stop-color="#310eff"/><stop offset="0.400" stop-color="#4d06ff"/><stop offset="0.452" stop-color="#6300ff"/><stop offset="0.467" stop-color="#6900ff"/><stop offset="0.533" stop-color="#8600ff"/><stop offset="0.600" stop-color="#a300ff"/><stop offset="0.667" stop-color="#c100ff"/><stop offset="0.733" stop-color="#e000ff"/><stop offset="0.799" stop-color="#ff00ff"/><stop offset="0.867" stop-color="#ff00e2"/><stop offset="0.933" stop-color="#ff00cb"/><stop offset="1.000" stop-color="#ff00b8"/></linearGradient>
<linearGradient id="c138" gradientUnits="userSpaceOnUse" x1="1117" x2="1481" y1="0" y2="0"><stop offset="0.000" stop-color="#0031ff"/><stop offset="0.071" stop-color="#002aff"/><stop offset="0.143" stop-color="#0022ff"/><stop offset="0.214" stop-color="#001bff"/><stop offset="0.266" stop-color="#1515ff"/><stop offset="0.286" stop-color="#1d13ff"/><stop offset="0.357" stop-color="#3a0aff"/><stop offset="0.429" stop-color="#5702ff"/><stop offset="0.448" stop-color="#5f00ff"/><stop offset="0.500" stop-color="#7500ff"/><stop offset="0.571" stop-color="#9400ff"/><stop offset="0.643" stop-color="#b400ff"/><stop offset="0.714" stop-color="#d400ff"/><stop offset="0.786" stop-color="#f400ff"/><stop offset="0.809" stop-color="#ff00ff"/><stop offset="0.857" stop-color="#ff00ea"/><stop offset="0.929" stop-color="#ff00d1"/><stop offset="1.000" stop-color="#ff00bc"/></linearGradient>
<linearGradient id="c139" gradientUnits="userSpaceOnUse" x1="1118" x2="1479" y1="0" y2="0"><stop offset="0.000" stop-color="#0030ff"/><stop offset="0.071" stop-color="#0029ff"/><stop offset="0.143" stop-color="#0021ff"/><stop offset="0.214" stop-color="#001aff"/><stop offset="0.265" stop-color="#1414ff"/><stop offset="0.286" stop-color="#1c12ff"/><stop offset="0.357" stop-color="#390aff"/><stop offset="0.429" stop-color="#5602ff"/><stop offset="0.443" stop-color="#5c00ff"/><stop offset="0.500" stop-color="#7300ff"/><stop offset="0.571" stop-color="#9200ff"/><stop offset="0.643" stop-color="#b100ff"/><stop offset="0.714" stop-color="#d000ff"/><stop offset="0.786" stop-color="#f000ff"/><stop offset="0.818" stop-color="#ff00ff"/><stop offset="0.857" stop-color="#ff00ee"/><stop offset="0.929" stop-color="#ff00d4"/><stop offset="1.000" stop-color="#ff00bf"/></linearGradient>
<linearGradient id="c140" gradientUnits="userSpaceOnUse" x1="1119" x2="1477" y1="0" y2="0"><stop offset="0.000" stop-color="#002fff"/><stop offset="0.071" stop-color="#0028ff"/><stop offset="0.143" stop-color="#0020ff"/><stop offset="0.213" stop-color="#0019ff"/><stop offset="0.264" stop-color="#1313ff"/><stop offset="0.286" stop-color="#1c11ff"/><stop offset="0.357" stop-color="#3809ff"/><stop offset="0.429" stop-color="#5401ff"/><stop offset="0.439" stop-color="#5900ff"/><stop offset="0.500" stop-color="#7200ff"/><stop offset="0.571" stop-color="#8f00ff"/><stop offset="0.643" stop-color="#ae00ff"/><stop offset="0.714" stop-color="#cd00ff"/><stop offset="0.786" stop-color="#ec00ff"/><stop offset="0.828" stop-color="#ff00ff"/><stop offset="0.857" stop-color="#ff00f2"/><stop offset="0.929" stop-color="#ff00d8"/><stop offset="1.000" stop-color="#ff00c2"/></linearGradient>
<linearGradient id="c141" gradientUnits="userSpaceOnUse" x1="1121" x2="1475" y1="0" y2="0"><stop offset="0.000" stop-color="#002dff"/><stop offset="0.071" stop-color="#0026ff"/><stop offset="0.143" stop-color="#001fff"/><stop offset="0.211" stop-color="#0018ff"/><stop offset="0.261" stop-color="#1313ff"/><stop offset="0.286" stop-color="#1c10ff"/><stop offset="0.357" stop-color="#3808ff"/><stop offset="0.429" stop-color="#5400ff"/><stop offset="0.500" stop-color="#7000ff"/><stop offset="0.571" stop-color="#8d00ff"/><stop offset="0.643" stop-color="#ab00ff"/><stop offset="0.714" stop-color="#c900ff"/><stop offset="0.786" stop-color="#e800ff"/><stop offset="0.837" stop-color="#ff00ff"/><stop offset="0.857" stop-color="#ff00f7"/><stop offset="0.929" stop-color="#ff00dc"/><stop offset="1.000" stop-color="#ff00c6"/></linearGradient>
<linearGradient id="c142" gradientUnits="userSpaceOnUse" x1="1122" x2="1473" y1="0" y2="0"><stop offset="0.000" stop-color="#002cff"/><stop offset="0.071" stop-color="#0025ff"/><stop offset="0.143" stop-color="#001eff"/><stop offset="0.211" stop-color="#0017ff"/><stop offset="0.259" stop-color="#1212ff"/><stop offset="0.286" stop-color="#1c0fff"/><stop offset="0.357" stop-color="#3708ff"/><stop offset="0.428" stop-color="#5200ff"/><stop offset="0.500" stop-color="#6f00ff"/><stop offset="0.571" stop-color="#8b00ff"/><stop offset="0.643" stop-color="#a800ff"/><stop offset="0.714" stop-color="#c600ff"/><stop offset="0.786" stop-color="#e400ff"/><stop offset="0.847" stop-color="#ff00ff"/><stop offset="0.857" stop-color="#ff00fb"/><stop offset="0.929" stop-color="#ff00e0"/><stop offset="1.000" stop-color="#ff00c9"/></linearGradient>
<linearGradient id="c143" gradientUnits="userSpaceOnUse" x1="1123" x2="1471" y1="0" y2="0"><stop offset="0.000" stop-color="#002bff"/><stop offset="0.071" stop-color="#0024ff"/><stop offset="0.143" stop-color="#001dff"/><stop offset="0.211" stop-color="#0016ff"/><stop offset="0.258" stop-color="#1111ff"/><stop offset="0.286" stop-color="#1b0eff"/><stop offset="0.357" stop-color="#3607ff"/><stop offset="0.423" stop-color="#4f00ff"/><stop offset="0.429" stop-color="#5100ff"/><stop offset="0.500" stop-color="#6d00ff"/><stop offset="0.571" stop-color="#8900ff"/><stop offset="0.643" stop-color="#a600ff"/><stop offset="0.714" stop-color="#c300ff"/><stop offset="0.786" stop-color="#e000ff"/><stop offset="0.857" stop-color="#ff00ff"/><stop offset="0.929" stop-color="#ff00e4"/><stop offset="1.000" stop-color="#ff00cd"/></linearGradient>
<linearGradient id="c144" gradientUnits="userSpaceOnUse" x1="1124" x2="1469" y1="0" y2="0"><stop offset="0.000" stop-color="#002aff"/><stop offset="0.071" stop-color="#0023ff"/><stop offset="0.143" stop-color="#001cff"/><stop offset="0.211" stop-color="#0015ff"/><stop offset="0.257" stop-color="#1111ff"/><stop offset="0.286" stop-color="#1b0eff"/><stop offset="0.357" stop-color="#3506ff"/><stop offset="0.418" stop-color="#4c00ff"/><stop offset="0.429" stop-color="#5000ff"/><stop offset="0.500" stop-color="#6b00ff"/><stop offset="0.571" stop-color="#8700ff"/><stop offset="0.643" stop-color="#a300ff"/><stop offset="0.714" stop-color="#bf00ff"/><stop offset="0.786" stop-color="#dd00ff"/><stop offset="0.857" stop-color="#fa00ff"/><stop offset="0.868" stop-color="#ff00ff"/><stop offset="0.929" stop-color="#ff00e8"/><stop offset="1.000" stop-color="#ff00d1"/></linearGradient>
<linearGradient id="c145" gradientUnits="userSpaceOnUse" x1="1126" x2="1468" y1="0" y2="0"><stop offset="0.000" stop-color="#0029ff"/><stop offset="0.071" stop-color="#0022ff"/><stop offset="0.143" stop-color="#001bff"/><stop offset="0.208" stop-color="#0014ff"/><stop offset="0.214" stop-color="#0214ff"/><stop offset="0.253" stop-color="#1010ff"/><stop offset="0.286" stop-color="#1c0dff"/><stop offset="0.357" stop-color="#3505ff"/><stop offset="0.410" stop-color="#4900ff"/><stop offset="0.429" stop-color="#5000ff"/><stop offset="0.500" stop-color="#6a00ff"/><stop offset="0.571" stop-color="#8600ff"/><stop offset="0.643" stop-color="#a100ff"/><stop offset="0.714" stop-color="#bd00ff"/><stop offset="0.786" stop-color="#da00ff"/><stop offset="0.857" stop-color="#f700ff"/><stop offset="0.876" stop-color="#ff00ff"/><stop offset="0.929" stop-color="#ff00eb"/><stop offset="1.000" stop-color="#ff00d4"/></linearGradient>
<linearGradient id="c146" gradientUnits="userSpaceOnUse" x1="1127" x2="1466" y1="0" y2="0"><stop offset="0.000" stop-color="#0027ff"/><stop offset="0.071" stop-color="#0021ff"/><stop offset="0.143" stop-color="#001aff"/><stop offset="0.208" stop-color="#0014ff"/><stop offset="0.214" stop-color="#0213ff"/><stop offset="0.252" stop-color="#0f0fff"/><stop offset="0.286" stop-color="#1b0cff"/><stop offset="0.357" stop-color="#3505ff"/><stop offset="0.405" stop-color="#4600ff"/><stop offset="0.429" stop-color="#4e00ff"/><stop offset="0.500" stop-color="#6900ff"/><stop offset="0.571" stop-color="#8300ff"/><stop offset="0.643" stop-color="#9f00ff"/><stop offset="0.714" stop-color="#ba00ff"/><stop offset="0.786" stop-color="#d600ff"/><stop offset="0.857" stop-color="#f300ff"/><stop offset="0.886" stop-color="#ff00ff"/><stop offset="0.929" stop-color="#ff00ef"/><stop offset="1.000" stop-color="#ff00d7"/></linearGradient>
<linearGradient id="c147" gradientUnits="userSpaceOnUse" x1="1128" x2="1464" y1="0" y2="0"><stop offset="0.000" stop-color="#0026ff"/><stop offset="0.077" stop-color="#001fff"/><stop offset="0.154" stop-color="#0018ff"/><stop offset="0.207" stop-color="#0013ff"/><stop offset="0.231" stop-color="#0811ff"/><stop offset="0.250" stop-color="#0f0fff"/><stop offset="0.308" stop-color="#2309ff"/><stop offset="0.385" stop-color="#3e01ff"/><stop offset="0.400" stop-color="#4300ff"/><stop offset="0.462" stop-color="#5900ff"/><stop offset="0.538" stop-color="#7500ff"/><stop offset="0.615" stop-color="#9200ff"/><stop offset="0.692" stop-color="#af00ff"/><stop offset="0.769" stop-color="#cc00ff"/><stop offset="0.846" stop-color="#eb00ff"/><stop offset="0.897" stop-color="#ff00ff"/><stop offset="0.923" stop-color="#ff00f5"/><stop offset="1.000" stop-color="#ff00db"/></linearGradient>
<linearGradient id="c148" gradientUnits="userSpaceOnUse" x1="1129" x2="1462" y1="0" y2="0"><stop offset="0.000" stop-color="#0025ff"/><stop offset="0.077" stop-color="#001eff"/><stop offset="0.154" stop-color="#0017ff"/><stop offset="0.207" stop-color="#0012ff"/><stop offset="0.231" stop-color="#0810ff"/><stop offset="0.249" stop-color="#0e0eff"/><stop offset="0.308" stop-color="#2208ff"/><stop offset="0.385" stop-color="#3d01ff"/><stop offset="0.394" stop-color="#4000ff"/><stop offset="0.462" stop-color="#5800ff"/><stop offset="0.538" stop-color="#7300ff"/><stop offset="0.615" stop-color="#8f00ff"/><stop offset="0.692" stop-color="#ac00ff"/><stop offset="0.769" stop-color="#c900ff"/><stop offset="0.846" stop-color="#e700ff"/><stop offset="0.909" stop-color="#ff00ff"/><stop offset="0.923" stop-color="#ff00f9"/><stop offset="1.000" stop-color="#ff00df"/></linearGradient>
<linearGradient id="c149" gradientUnits="userSpaceOnUse" x1="1131" x2="1460" y1="0" y2="0"><stop offset="0.000" stop-color="#0024ff"/><stop offset="0.077" stop-color="#001dff"/><stop offset="0.154" stop-color="#0016ff"/><stop offset="0.205" stop-color="#0011ff"/><stop offset="0.231" stop-color="#090fff"/><stop offset="0.245" stop-color="#0d0dff"/><stop offset="0.308" stop-color="#2208ff"/><stop offset="0.385" stop-color="#3c00ff"/><stop offset="0.462" stop-color="#5700ff"/><stop offset="0.538" stop-color="#7200ff"/><stop offset="0.615" stop-color="#8d00ff"/><stop offset="0.692" stop-color="#a900ff"/><stop offset="0.769" stop-color="#c600ff"/><stop offset="0.846" stop-color="#e300ff"/><stop offset="0.920" stop-color="#ff00ff"/><stop offset="1.000" stop-color="#ff00e3"/></linearGradient>
<linearGradient id="c150" gradientUnits="userSpaceOnUse" x1="1132" x2="1458" y1="0" y2="0"><stop offset="0.000" stop-color="#0023ff"/><stop offset="0.077" stop-color="#001cff"/><stop offset="0.154" stop-color="#0015ff"/><stop offset="0.204" stop-color="#0010ff"/><stop offset="0.231" stop-color="#090eff"/><stop offset="0.244" stop-color="#0d0dff"/><stop offset="0.308" stop-color="#2207ff"/><stop offset="0.382" stop-color="#3a00ff"/><stop offset="0.462" stop-color="#5500ff"/><stop offset="0.538" stop-color="#7000ff"/><stop offset="0.615" stop-color="#8b00ff"/><stop offset="0.692" stop-color="#a600ff"/><stop offset="0.769" stop-color="#c200ff"/><stop offset="0.846" stop-color="#df00ff"/><stop offset="0.923" stop-color="#fc00ff"/><stop offset="0.931" stop-color="#ff00ff"/><stop offset="1.000" stop-color="#ff00e7"/></linearGradient>
<linearGradient id="c151" gradientUnits="userSpaceOnUse" x1="1133" x2="1456" y1="0" y2="0"><stop offset="0.000" stop-color="#0022ff"/><stop offset="0.077" stop-color="#001bff"/><stop offset="0.154" stop-color="#0014ff"/><stop offset="0.204" stop-color="#0010ff"/><stop offset="0.231" stop-color="#080dff"/><stop offset="0.243" stop-color="#0c0cff"/><stop offset="0.308" stop-color="#2106ff"/><stop offset="0.376" stop-color="#3800ff"/><stop offset="0.385" stop-color="#3a00ff"/><stop offset="0.462" stop-color="#5400ff"/><stop offset="0.538" stop-color="#6e00ff"/><stop offset="0.615" stop-color="#8900ff"/><stop offset="0.692" stop-color="#a400ff"/><stop offset="0.769" stop-color="#bf00ff"/><stop offset="0.846" stop-color="#db00ff"/><stop offset="0.923" stop-color="#f800ff"/><stop offset="0.943" stop-color="#ff00ff"/><stop offset="1.000" stop-color="#ff00eb"/></linearGradient>
<linearGradient id="c152" gradientUnits="userSpaceOnUse" x1="1134" x2="1454" y1="0" y2="0"><stop offset="0.000" stop-color="#0021ff"/><stop offset="0.077" stop-color="#001aff"/><stop offset="0.154" stop-color="#0013ff"/><stop offset="0.204" stop-color="#000fff"/><stop offset="0.231" stop-color="#080dff"/><stop offset="0.241" stop-color="#0c0cff"/><stop offset="0.308" stop-color="#2106ff"/><stop offset="0.370" stop-color="#3500ff"/><stop offset="0.385" stop-color="#3a00ff"/><stop offset="0.462" stop-color="#5300ff"/><stop offset="0.538" stop-color="#6c00ff"/><stop offset="0.615" stop-color="#8600ff"/><stop offset="0.692" stop-color="#a100ff"/><stop offset="0.769" stop-color="#bc00ff"/><stop offset="0.846" stop-color="#d700ff"/><stop offset="0.923" stop-color="#f300ff"/><stop offset="0.955" stop-color="#ff00ff"/><stop offset="1.000" stop-color="#ff00ef"/></linearGradient>
<linearGradient id="c153" gradientUnits="userSpaceOnUse" x1="1136" x2="1452" y1="0" y2="0"><stop offset="0.000" stop-color="#001fff"/><stop offset="0.077" stop-color="#0019ff"/><stop offset="0.154" stop-color="#0012ff"/><stop offset="0.201" stop-color="#000eff"/><stop offset="0.231" stop-color="#090cff"/><stop offset="0.237" stop-color="#0b0bff"/><stop offset="0.308" stop-color="#2105ff"/><stop offset="0.362" stop-color="#3200ff"/><stop offset="0.385" stop-color="#3900ff"/><stop offset="0.462" stop-color="#5200ff"/><stop offset="0.538" stop-color="#6b00ff"/><stop offset="0.615" stop-color="#8500ff"/><stop offset="0.692" stop-color="#9f00ff"/><stop offset="0.769" stop-color="#b900ff"/><stop offset="0.846" stop-color="#d400ff"/><stop offset="0.923" stop-color="#ef00ff"/><stop offset="0.967" stop-color="#ff00ff"/><stop offset="1.000" stop-color="#ff00f4"/></linearGradient>
<linearGradient id="c154" gradientUnits="userSpaceOnUse" x1="1137" x2="1450" y1="0" y2="0"><stop offset="0.000" stop-color="#001eff"/><stop offset="0.077" stop-color="#0018ff"/><stop offset="0.154" stop-color="#0012ff"/><stop offset="0.201" stop-color="#000dff"/><stop offset="0.231" stop-color="#090bff"/><stop offset="0.236" stop-color="#0b0bff"/><stop offset="0.308" stop-color="#2004ff"/><stop offset="0.356" stop-color="#3000ff"/><stop offset="0.385" stop-color="#3800ff"/><stop offset="0.462" stop-color="#5100ff"/><stop offset="0.538" stop-color="#6900ff"/><stop offset="0.615" stop-color="#8200ff"/><stop offset="0.692" stop-color="#9c00ff"/><stop offset="0.769" stop-color="#b600ff"/><stop offset="0.846" stop-color="#d000ff"/><stop offset="0.923" stop-color="#eb00ff"/><stop offset="0.980" stop-color="#ff00ff"/><stop offset="1.000" stop-color="#ff00f8"/></linearGradient>
<linearGradient id="c155" gradientUnits="userSpaceOnUse" x1="1138" x2="1448" y1="0" y2="0"><stop offset="0.000" stop-color="#001dff"/><stop offset="0.083" stop-color="#0017ff"/><stop offset="0.167" stop-color="#0010ff"/><stop offset="0.201" stop-color="#000dff"/><stop offset="0.234" stop-color="#0a0aff"/><stop offset="0.250" stop-color="#0f09ff"/><stop offset="0.333" stop-color="#2801ff"/><stop offset="0.350" stop-color="#2d00ff"/><stop offset="0.417" stop-color="#4100ff"/><stop offset="0.500" stop-color="#5b00ff"/><stop offset="0.583" stop-color="#7600ff"/><stop offset="0.667" stop-color="#9100ff"/><stop offset="0.750" stop-color="#ac00ff"/><stop offset="0.833" stop-color="#c800ff"/><stop offset="0.917" stop-color="#e500ff"/><stop offset="0.992" stop-color="#ff00ff"/><stop offset="1.000" stop-color="#ff00fc"/></linearGradient>
<linearGradient id="c156" gradientUnits="userSpaceOnUse" x1="1140" x2="1446" y1="0" y2="0"><stop offset="0.000" stop-color="#001cff"/><stop offset="0.083" stop-color="#0015ff"/><stop offset="0.167" stop-color="#000fff"/><stop offset="0.198" stop-color="#000cff"/><stop offset="0.230" stop-color="#0909ff"/><stop offset="0.250" stop-color="#0f08ff"/><stop offset="0.333" stop-color="#2801ff"/><stop offset="0.342" stop-color="#2a00ff"/><stop offset="0.417" stop-color="#4100ff"/><stop offset="0.500" stop-color="#5a00ff"/><stop offset="0.583" stop-color="#7400ff"/><stop offset="0.667" stop-color="#8f00ff"/><stop offset="0.750" stop-color="#aa00ff"/><stop offset="0.833" stop-color="#c500ff"/><stop offset="0.917" stop-color="#e100ff"/><stop offset="1.000" stop-color="#fd00ff"/></linearGradient>
<linearGradient id="c157" gradientUnits="userSpaceOnUse" x1="1141" x2="1444" y1="0" y2="0"><stop offset="0.000" stop-color="#001bff"/><stop offset="0.083" stop-color="#0015ff"/><stop offset="0.167" stop-color="#000eff"/><stop offset="0.198" stop-color="#000bff"/><stop offset="0.229" stop-color="#0909ff"/><stop offset="0.250" stop-color="#0f07ff"/><stop offset="0.333" stop-color="#2700ff"/><stop offset="0.417" stop-color="#4000ff"/><stop offset="0.500" stop-color="#5900ff"/><stop offset="0.583" stop-color="#7200ff"/><stop offset="0.667" stop-color="#8c00ff"/><stop offset="0.750" stop-color="#a700ff"/><stop offset="0.833" stop-color="#c200ff"/><stop offset="0.917" stop-color="#dd00ff"/><stop offset="1.000" stop-color="#f900ff"/></linearGradient>
<linearGradient id="c158" gradientUnits="userSpaceOnUse" x1="1142" x2="1442" y1="0" y2="0"><stop offset="0.000" stop-color="#001aff"/><stop offset="0.083" stop-color="#0014ff"/><stop offset="0.167" stop-color="#000dff"/><stop offset="0.198" stop-color="#000bff"/><stop offset="0.227" stop-color="#0808ff"/><stop offset="0.250" stop-color="#0f06ff"/><stop offset="0.329" stop-color="#2500ff"/><stop offset="0.417" stop-color="#3f00ff"/><stop offset="0.500" stop-color="#5800ff"/><stop offset="0.583" stop-color="#7100ff"/><stop offset="0.667" stop-color="#8a00ff"/><stop offset="0.750" stop-color="#a400ff"/><stop offset="0.833" stop-color="#be00ff"/><stop offset="0.917" stop-color="#d900ff"/><stop offset="1.000" stop-color="#f400ff"/></linearGradient>
<linearGradient id="c159" gradientUnits="userSpaceOnUse" x1="1144" x2="1440" y1="0" y2="0"><stop offset="0.000" stop-color="#0019ff"/><stop offset="0.083" stop-color="#0013ff"/><stop offset="0.167" stop-color="#000cff"/><stop offset="0.195" stop-color="#000aff"/><stop offset="0.223" stop-color="#0808ff"/><stop offset="0.250" stop-color="#0f06ff"/><stop offset="0.320" stop-color="#2300ff"/><stop offset="0.333" stop-color="#2700ff"/><stop offset="0.417" stop-color="#3e00ff"/><stop offset="0.500" stop-color="#5700ff"/><stop offset="0.583" stop-color="#6f00ff"/><stop offset="0.667" stop-color="#8800ff"/><stop offset="0.750" stop-color="#a100ff"/><stop offset="0.833" stop-color="#bb00ff"/><stop offset="0.917" stop-color="#d500ff"/><stop offset="1.000" stop-color="#f000ff"/></linearGradient>
<linearGradient id="c160" gradientUnits="userSpaceOnUse" x1="1145" x2="1438" y1="0" y2="0"><stop offset="0.000" stop-color="#0018ff"/><stop offset="0.083" stop-color="#0012ff"/><stop offset="0.167" stop-color="#000bff"/><stop offset="0.194" stop-color="#0009ff"/><stop offset="0.221" stop-color="#0707ff"/><stop offset="0.250" stop-color="#0f05ff"/><stop offset="0.313" stop-color="#2100ff"/><stop offset="0.333" stop-color="#2600ff"/><stop offset="0.417" stop-color="#3e00ff"/><stop offset="0.500" stop-color="#5500ff"/><stop offset="0.583" stop-color="#6d00ff"/><stop offset="0.667" stop-color="#8600ff"/><stop offset="0.750" stop-color="#9f00ff"/><stop offset="0.833" stop-color="#b800ff"/><stop offset="0.917" stop-color="#d200ff"/><stop offset="1.000" stop-color="#ec00ff"/></linearGradient>
<linearGradient id="c161" gradientUnits="userSpaceOnUse" x1="1146" x2="1436" y1="0" y2="0"><stop offset="0.000" stop-color="#0017ff"/><stop offset="0.083" stop-color="#0011ff"/><stop offset="0.167" stop-color="#000bff"/><stop offset="0.194" stop-color="#0009ff"/><stop offset="0.219" stop-color="#0707ff"/><stop offset="0.250" stop-color="#0f04ff"/><stop offset="0.306" stop-color="#1e00ff"/><stop offset="0.333" stop-color="#2600ff"/><stop offset="0.417" stop-color="#3d00ff"/><stop offset="0.500" stop-color="#5400ff"/><stop offset="0.583" stop-color="#6c00ff"/><stop offset="0.667" stop-color="#8400ff"/><stop offset="0.750" stop-color="#9c00ff"/><stop offset="0.833" stop-color="#b500ff"/><stop offset="0.917" stop-color="#ce00ff"/><stop offset="1.000" stop-color="#e800ff"/></linearGradient>
<linearGradient id="c162" gradientUnits="userSpaceOnUse" x1="1148" x2="1434" y1="0" y2="0"><stop offset="0.000" stop-color="#0016ff"/><stop offset="0.091" stop-color="#000fff"/><stop offset="0.182" stop-color="#0009ff"/><stop offset="0.191" stop-color="#0008ff"/><stop offset="0.214" stop-color="#0606ff"/><stop offset="0.273" stop-color="#1602ff"/><stop offset="0.297" stop-color="#1c00ff"/><stop offset="0.364" stop-color="#2e00ff"/><stop offset="0.455" stop-color="#4600ff"/><stop offset="0.545" stop-color="#6000ff"/><stop offset="0.636" stop-color="#7900ff"/><stop offset="0.727" stop-color="#9300ff"/><stop offset="0.818" stop-color="#ad00ff"/><stop offset="0.909" stop-color="#c800ff"/><stop offset="1.000" stop-color="#e400ff"/></linearGradient>
<linearGradient id="c163" gradientUnits="userSpaceOnUse" x1="1149" x2="1432" y1="0" y2="0"><stop offset="0.000" stop-color="#0015ff"/><stop offset="0.091" stop-color="#000fff"/><stop offset="0.182" stop-color="#0008ff"/><stop offset="0.190" stop-color="#0007ff"/><stop offset="0.213" stop-color="#0606ff"/><stop offset="0.273" stop-color="#1501ff"/><stop offset="0.289" stop-color="#1a00ff"/><stop offset="0.364" stop-color="#2d00ff"/><stop offset="0.455" stop-color="#4500ff"/><stop offset="0.545" stop-color="#5e00ff"/><stop offset="0.636" stop-color="#7700ff"/><stop offset="0.727" stop-color="#9000ff"/><stop offset="0.818" stop-color="#aa00ff"/><stop offset="0.909" stop-color="#c500ff"/><stop offset="1.000" stop-color="#df00ff"/></linearGradient>
<linearGradient id="c164" gradientUnits="userSpaceOnUse" x1="1151" x2="1431" y1="0" y2="0"><stop offset="0.000" stop-color="#0014ff"/><stop offset="0.091" stop-color="#000eff"/><stop offset="0.182" stop-color="#0007ff"/><stop offset="0.207" stop-color="#0505ff"/><stop offset="0.273" stop-color="#1600ff"/><stop offset="0.278" stop-color="#1700ff"/><stop offset="0.364" stop-color="#2d00ff"/><stop offset="0.455" stop-color="#4500ff"/><stop offset="0.545" stop-color="#5d00ff"/><stop offset="0.636" stop-color="#7600ff"/><stop offset="0.727" stop-color="#8f00ff"/><stop offset="0.818" stop-color="#a800ff"/><stop offset="0.909" stop-color="#c200ff"/><stop offset="1.000" stop-color="#dd00ff"/></linearGradient>
<linearGradient id="c165" gradientUnits="userSpaceOnUse" x1="1152" x2="1429" y1="0" y2="0"><stop offset="0.000" stop-color="#0013ff"/><stop offset="0.091" stop-color="#000dff"/><stop offset="0.182" stop-color="#0006ff"/><stop offset="0.205" stop-color="#0505ff"/><stop offset="0.270" stop-color="#1500ff"/><stop offset="0.364" stop-color="#2d00ff"/><stop offset="0.455" stop-color="#4400ff"/><stop offset="0.545" stop-color="#5c00ff"/><stop offset="0.636" stop-color="#7400ff"/><stop offset="0.727" stop-color="#8d00ff"/><stop offset="0.818" stop-color="#a500ff"/><stop offset="0.909" stop-color="#bf00ff"/><stop offset="1.000" stop-color="#d900ff"/></linearGradient>
<linearGradient id="c166" gradientUnits="userSpaceOnUse" x1="1154" x2="1427" y1="0" y2="0"><stop offset="0.000" stop-color="#0012ff"/><stop offset="0.091" stop-color="#000cff"/><stop offset="0.182" stop-color="#0005ff"/><stop offset="0.200" stop-color="#0404ff"/><stop offset="0.260" stop-color="#1300ff"/><stop offset="0.273" stop-color="#1600ff"/><stop offset="0.364" stop-color="#2d00ff"/><stop offset="0.455" stop-color="#4400ff"/><stop offset="0.545" stop-color="#5b00ff"/><stop offset="0.636" stop-color="#7200ff"/><stop offset="0.727" stop-color="#8a00ff"/><stop offset="0.818" stop-color="#a300ff"/><stop offset="0.909" stop-color="#bc00ff"/><stop offset="1.000" stop-color="#d500ff"/></linearGradient>
<linearGradient id="c167" gradientUnits="userSpaceOnUse" x1="1155" x2="1425" y1="0" y2="0"><stop offset="0.000" stop-color="#0011ff"/><stop offset="0.091" stop-color="#000bff"/><stop offset="0.182" stop-color="#0005ff"/><stop offset="0.198" stop-color="#0404ff"/><stop offset="0.252" stop-color="#1100ff"/><stop offset="0.273" stop-color="#1600ff"/><stop offset="0.364" stop-color="#2c00ff"/><stop offset="0.455" stop-color="#4200ff"/><stop offset="0.545" stop-color="#5900ff"/><stop offset="0.636" stop-color="#7000ff"/><stop offset="0.727" stop-color="#8800ff"/><stop offset="0.818" stop-color="#a000ff"/><stop offset="0.909" stop-color="#b800ff"/><stop offset="1.000" stop-color="#d100ff"/></linearGradient>
<linearGradient id="c168" gradientUnits="userSpaceOnUse" x1="1156" x2="1423" y1="0" y2="0"><stop offset="0.000" stop-color="#0010ff"/><stop offset="0.091" stop-color="#000aff"/><stop offset="0.182" stop-color="#0004ff"/><stop offset="0.195" stop-color="#0303ff"/><stop offset="0.244" stop-color="#0f00ff"/><stop offset="0.273" stop-color="#1500ff"/><stop offset="0.364" stop-color="#2b00ff"/><stop offset="0.455" stop-color="#4100ff"/><stop offset="0.545" stop-color="#5800ff"/><stop offset="0.636" stop-color="#6f00ff"/><stop offset="0.727" stop-color="#8600ff"/><stop offset="0.818" stop-color="#9d00ff"/><stop offset="0.909" stop-color="#b500ff"/><stop offset="1.000" stop-color="#cd00ff"/></linearGradient>
<linearGradient id="c169" gradientUnits="userSpaceOnUse" x1="1158" x2="1421" y1="0" y2="0"><stop offset="0.000" stop-color="#000fff"/><stop offset="0.091" stop-color="#0009ff"/><stop offset="0.178" stop-color="#0004ff"/><stop offset="0.190" stop-color="#0303ff"/><stop offset="0.232" stop-color="#0c00ff"/><stop offset="0.273" stop-color="#1600ff"/><stop offset="0.364" stop-color="#2b00ff"/><stop offset="0.455" stop-color="#4100ff"/><stop offset="0.545" stop-color="#5700ff"/><stop offset="0.636" stop-color="#6d00ff"/><stop offset="0.727" stop-color="#8400ff"/><stop offset="0.818" stop-color="#9b00ff"/><stop offset="0.909" stop-color="#b200ff"/><stop offset="1.000" stop-color="#c900ff"/></linearGradient>
<linearGradient id="c170" gradientUnits="userSpaceOnUse" x1="1159" x2="1419" y1="0" y2="0"><stop offset="0.000" stop-color="#000eff"/><stop offset="0.100" stop-color="#0008ff"/><stop offset="0.177" stop-color="#0003ff"/><stop offset="0.188" stop-color="#0202ff"/><stop offset="0.200" stop-color="#0502ff"/><stop offset="0.223" stop-color="#0a00ff"/><stop offset="0.300" stop-color="#1c00ff"/><stop offset="0.400" stop-color="#3300ff"/><stop offset="0.500" stop-color="#4b00ff"/><stop offset="0.600" stop-color="#6200ff"/><stop offset="0.700" stop-color="#7b00ff"/><stop offset="0.800" stop-color="#9300ff"/><stop offset="0.900" stop-color="#ac00ff"/><stop offset="1.000" stop-color="#c600ff"/></linearGradient>
<linearGradient id="c171" gradientUnits="userSpaceOnUse" x1="1161" x2="1417" y1="0" y2="0"><stop offset="0.000" stop-color="#000dff"/><stop offset="0.100" stop-color="#0007ff"/><stop offset="0.174" stop-color="#0002ff"/><stop offset="0.182" stop-color="#0202ff"/><stop offset="0.200" stop-color="#0601ff"/><stop offset="0.211" stop-color="#0800ff"/><stop offset="0.300" stop-color="#1c00ff"/><stop offset="0.400" stop-color="#3300ff"/><stop offset="0.500" stop-color="#4a00ff"/><stop offset="0.600" stop-color="#6100ff"/><stop offset="0.700" stop-color="#7900ff"/><stop offset="0.800" stop-color="#9100ff"/><stop offset="0.900" stop-color="#a900ff"/><stop offset="1.000" stop-color="#c200ff"/></linearGradient>
<linearGradient id="c172" gradientUnits="userSpaceOnUse" x1="1162" x2="1415" y1="0" y2="0"><stop offset="0.000" stop-color="#000cff"/><stop offset="0.100" stop-color="#0006ff"/><stop offset="0.173" stop-color="#0002ff"/><stop offset="0.180" stop-color="#0101ff"/><stop offset="0.200" stop-color="#0600ff"/><stop offset="0.300" stop-color="#1c00ff"/><stop offset="0.400" stop-color="#3200ff"/><stop offset="0.500" stop-color="#4900ff"/><stop offset="0.600" stop-color="#5f00ff"/><stop offset="0.700" stop-color="#7700ff"/><stop offset="0.800" stop-color="#8e00ff"/><stop offset="0.900" stop-color="#a600ff"/><stop offset="1.000" stop-color="#bf00ff"/></linearGradient>
<linearGradient id="c173" gradientUnits="userSpaceOnUse" x1="1164" x2="1413" y1="0" y2="0"><stop offset="0.000" stop-color="#000bff"/><stop offset="0.100" stop-color="#0005ff"/><stop offset="0.169" stop-color="#0001ff"/><stop offset="0.190" stop-color="#0400ff"/><stop offset="0.200" stop-color="#0700ff"/><stop offset="0.300" stop-color="#1c00ff"/><stop offset="0.400" stop-color="#3200ff"/><stop offset="0.500" stop-color="#4800ff"/><stop offset="0.600" stop-color="#5e00ff"/><stop offset="0.700" stop-color="#7500ff"/><stop offset="0.800" stop-color="#8c00ff"/><stop offset="0.900" stop-color="#a300ff"/><stop offset="1.000" stop-color="#bb00ff"/></linearGradient>
<linearGradient id="c174" gradientUnits="userSpaceOnUse" x1="1165" x2="1411" y1="0" y2="0"><stop offset="0.000" stop-color="#000bff"/><stop offset="0.100" stop-color="#0005ff"/><stop offset="0.168" stop-color="#0001ff"/><stop offset="0.180" stop-color="#0200ff"/><stop offset="0.200" stop-color="#0700ff"/><stop offset="0.300" stop-color="#1c00ff"/><stop offset="0.400" stop-color="#3100ff"/><stop offset="0.500" stop-color="#4700ff"/><stop offset="0.600" stop-color="#5d00ff"/><stop offset="0.700" stop-color="#7300ff"/><stop offset="0.800" stop-color="#8a00ff"/><stop offset="0.900" stop-color="#a000ff"/><stop offset="1.000" stop-color="#b800ff"/></linearGradient>
<linearGradient id="c175" gradientUnits="userSpaceOnUse" x1="1167" x2="1409" y1="0" y2="0"><stop offset="0.000" stop-color="#000aff"/><stop offset="0.100" stop-color="#0004ff"/><stop offset="0.164" stop-color="#0000ff"/><stop offset="0.200" stop-color="#0700ff"/><stop offset="0.300" stop-color="#1c00ff"/><stop offset="0.400" stop-color="#3100ff"/><stop offset="0.500" stop-color="#4600ff"/><stop offset="0.600" stop-color="#5b00ff"/><stop offset="0.700" stop-color="#7100ff"/><stop offset="0.800" stop-color="#8700ff"/><stop offset="0.900" stop-color="#9e00ff"/><stop offset="1.000" stop-color="#b400ff"/></linearGradient>
<linearGradient id="c176" gradientUnits="userSpaceOnUse" x1="1168" x2="1407" y1="0" y2="0"><stop offset="0.000" stop-color="#0009ff"/><stop offset="0.100" stop-color="#0003ff"/><stop offset="0.156" stop-color="#0000ff"/><stop offset="0.164" stop-color="#0000ff"/><stop offset="0.200" stop-color="#0700ff"/><stop offset="0.300" stop-color="#1b00ff"/><stop offset="0.400" stop-color="#3000ff"/><stop offset="0.500" stop-color="#4500ff"/><stop offset="0.600" stop-color="#5a00ff"/><stop offset="0.700" stop-color="#6f00ff"/><stop offset="0.800" stop-color="#8500ff"/><stop offset="0.900" stop-color="#9b00ff"/><stop offset="1.000" stop-color="#b100ff"/></linearGradient>
<linearGradient id="c177" gradientUnits="userSpaceOnUse" x1="1170" x2="1405" y1="0" y2="0"><stop offset="0.000" stop-color="#0008ff"/><stop offset="0.100" stop-color="#0002ff"/><stop offset="0.142" stop-color="#0000ff"/><stop offset="0.155" stop-color="#0000ff"/><stop offset="0.200" stop-color="#0800ff"/><stop offset="0.300" stop-color="#1c00ff"/><stop offset="0.400" stop-color="#3000ff"/><stop offset="0.500" stop-color="#4400ff"/><stop offset="0.600" stop-color="#5900ff"/><stop offset="0.700" stop-color="#6d00ff"/><stop offset="0.800" stop-color="#8300ff"/><stop offset="0.900" stop-color="#9800ff"/><stop offset="1.000" stop-color="#ae00ff"/></linearGradient>
<linearGradient id="c178" gradientUnits="userSpaceOnUse" x1="1171" x2="1403" y1="0" y2="0"><stop offset="0.000" stop-color="#0007ff"/><stop offset="0.111" stop-color="#0001ff"/><stop offset="0.131" stop-color="#0000ff"/><stop offset="0.152" stop-color="#0000ff"/><stop offset="0.222" stop-color="#0c00ff"/><stop offset="0.333" stop-color="#2200ff"/><stop offset="0.444" stop-color="#3800ff"/><stop offset="0.556" stop-color="#4e00ff"/><stop offset="0.667" stop-color="#6500ff"/><stop offset="0.778" stop-color="#7c00ff"/><stop offset="0.889" stop-color="#9300ff"/><stop offset="1.000" stop-color="#ab00ff"/></linearGradient>
<linearGradient id="c179" gradientUnits="userSpaceOnUse" x1="1173" x2="1401" y1="0" y2="0"><stop offset="0.000" stop-color="#0006ff"/><stop offset="0.111" stop-color="#0000ff"/><stop offset="0.145" stop-color="#0000ff"/><stop offset="0.154" stop-color="#0000ff"/><stop offset="0.222" stop-color="#0d00ff"/><stop offset="0.333" stop-color="#2200ff"/><stop offset="0.444" stop-color="#3700ff"/><stop offset="0.556" stop-color="#4d00ff"/><stop offset="0.667" stop-color="#6300ff"/><stop offset="0.778" stop-color="#7a00ff"/><stop offset="0.889" stop-color="#9000ff"/><stop offset="1.000" stop-color="#a700ff"/></linearGradient>
<linearGradient id="c180" gradientUnits="userSpaceOnUse" x1="1174" x2="1399" y1="0" y2="0"><stop offset="0.000" stop-color="#0005ff"/><stop offset="0.104" stop-color="#0000ff"/><stop offset="0.111" stop-color="#0000ff"/><stop offset="0.142" stop-color="#0000ff"/><stop offset="0.153" stop-color="#0000ff"/><stop offset="0.222" stop-color="#0d00ff"/><stop offset="0.333" stop-color="#2200ff"/><stop offset="0.444" stop-color="#3700ff"/><stop offset="0.556" stop-color="#4c00ff"/><stop offset="0.667" stop-color="#6100ff"/><stop offset="0.778" stop-color="#7700ff"/><stop offset="0.889" stop-color="#8e00ff"/><stop offset="1.000" stop-color="#a400ff"/></linearGradient>
<linearGradient id="c181" gradientUnits="userSpaceOnUse" x1="1176" x2="1397" y1="0" y2="0"><stop offset="0.000" stop-color="#0005ff"/><stop offset="0.088" stop-color="#0000ff"/><stop offset="0.111" stop-color="#0000ff"/><stop offset="0.135" stop-color="#0000ff"/><stop offset="0.148" stop-color="#0000ff"/><stop offset="0.222" stop-color="#0d00ff"/><stop offset="0.333" stop-color="#2200ff"/><stop offset="0.444" stop-color="#3600ff"/><stop offset="0.556" stop-color="#4b00ff"/><stop offset="0.667" stop-color="#6000ff"/><stop offset="0.778" stop-color="#7500ff"/><stop offset="0.889" stop-color="#8b00ff"/><stop offset="1.000" stop-color="#a100ff"/></linearGradient>
<linearGradient id="c182" gradientUnits="userSpaceOnUse" x1="1177" x2="1395" y1="0" y2="0"><stop offset="0.000" stop-color="#0004ff"/><stop offset="0.076" stop-color="#0000ff"/><stop offset="0.111" stop-color="#0000ff"/><stop offset="0.131" stop-color="#0000ff"/><stop offset="0.147" stop-color="#0000ff"/><stop offset="0.222" stop-color="#0d00ff"/><stop offset="0.333" stop-color="#2100ff"/><stop offset="0.444" stop-color="#3500ff"/><stop offset="0.556" stop-color="#4a00ff"/><stop offset="0.667" stop-color="#5e00ff"/><stop offset="0.778" stop-color="#7300ff"/><stop offset="0.889" stop-color="#8800ff"/><stop offset="1.000" stop-color="#9e00ff"/></linearGradient>
<linearGradient id="c183" gradientUnits="userSpaceOnUse" x1="1179" x2="1394" y1="0" y2="0"><stop offset="0.000" stop-color="#0003ff"/><stop offset="0.058" stop-color="#0000ff"/><stop offset="0.111" stop-color="#0000ff"/><stop offset="0.123" stop-color="#0000ff"/><stop offset="0.141" stop-color="#0000ff"/><stop offset="0.222" stop-color="#0e00ff"/><stop offset="0.333" stop-color="#2100ff"/><stop offset="0.444" stop-color="#3500ff"/><stop offset="0.556" stop-color="#4900ff"/><stop offset="0.667" stop-color="#5d00ff"/><stop offset="0.778" stop-color="#7200ff"/><stop offset="0.889" stop-color="#8700ff"/><stop offset="1.000" stop-color="#9c00ff"/></linearGradient>
<linearGradient id="c184" gradientUnits="userSpaceOnUse" x1="1181" x2="1392" y1="0" y2="0"><stop offset="0.000" stop-color="#0002ff"/><stop offset="0.041" stop-color="#0000ff"/><stop offset="0.111" stop-color="#0000ff"/><stop offset="0.136" stop-color="#0000ff"/><stop offset="0.222" stop-color="#0f00ff"/><stop offset="0.333" stop-color="#2200ff"/><stop offset="0.444" stop-color="#3500ff"/><stop offset="0.556" stop-color="#4800ff"/><stop offset="0.667" stop-color="#5c00ff"/><stop offset="0.778" stop-color="#7000ff"/><stop offset="0.889" stop-color="#8400ff"/><stop offset="1.000" stop-color="#9900ff"/></linearGradient>
<linearGradient id="c185" gradientUnits="userSpaceOnUse" x1="1182" x2="1390" y1="0" y2="0"><stop offset="0.000" stop-color="#0001ff"/><stop offset="0.027" stop-color="#0000ff"/><stop offset="0.111" stop-color="#0000ff"/><stop offset="0.125" stop-color="#0000ff"/><stop offset="0.135" stop-color="#0000ff"/><stop offset="0.250" stop-color="#1300ff"/><stop offset="0.375" stop-color="#2800ff"/><stop offset="0.500" stop-color="#3d00ff"/><stop offset="0.625" stop-color="#5300ff"/><stop offset="0.750" stop-color="#6900ff"/><stop offset="0.875" stop-color="#7f00ff"/><stop offset="1.000" stop-color="#9600ff"/></linearGradient>
<linearGradient id="c186" gradientUnits="userSpaceOnUse" x1="1184" x2="1388" y1="0" y2="0"><stop offset="0.000" stop-color="#0000ff"/><stop offset="0.008" stop-color="#0000ff"/><stop offset="0.102" stop-color="#0000ff"/><stop offset="0.125" stop-color="#0000ff"/><stop offset="0.250" stop-color="#1400ff"/><stop offset="0.375" stop-color="#2800ff"/><stop offset="0.500" stop-color="#3d00ff"/><stop offset="0.625" stop-color="#5200ff"/><stop offset="0.750" stop-color="#6700ff"/><stop offset="0.875" stop-color="#7d00ff"/><stop offset="1.000" stop-color="#9300ff"/></linearGradient>
<linearGradient id="c187" gradientUnits="userSpaceOnUse" x1="1186" x2="1386" y1="0" y2="0"><stop offset="0.000" stop-color="#0000ff"/><stop offset="0.093" stop-color="#0000ff"/><stop offset="0.123" stop-color="#0000ff"/><stop offset="0.250" stop-color="#1400ff"/><stop offset="0.375" stop-color="#2800ff"/><stop offset="0.500" stop-color="#3c00ff"/><stop offset="0.625" stop-color="#5100ff"/><stop offset="0.750" stop-color="#6600ff"/><stop offset="0.875" stop-color="#7b00ff"/><stop offset="1.000" stop-color="#9000ff"/></linearGradient>
<linearGradient id="c188" gradientUnits="userSpaceOnUse" x1="1187" x2="1384" y1="0" y2="0"><stop offset="0.000" stop-color="#0000ff"/><stop offset="0.089" stop-color="#0000ff"/><stop offset="0.122" stop-color="#0000ff"/><stop offset="0.250" stop-color="#1400ff"/><stop offset="0.375" stop-color="#2700ff"/><stop offset="0.500" stop-color="#3b00ff"/><stop offset="0.625" stop-color="#4f00ff"/><stop offset="0.750" stop-color="#6400ff"/><stop offset="0.875" stop-color="#7800ff"/><stop offset="1.000" stop-color="#8d00ff"/></linearGradient>
<linearGradient id="c189" gradientUnits="userSpaceOnUse" x1="1189" x2="1382" y1="0" y2="0"><stop offset="0.000" stop-color="#0000ff"/><stop offset="0.079" stop-color="#0000ff"/><stop offset="0.116" stop-color="#0000ff"/><stop offset="0.125" stop-color="#0100ff"/><stop offset="0.250" stop-color="#1400ff"/><stop offset="0.375" stop-color="#2700ff"/><stop offset="0.500" stop-color="#3b00ff"/><stop offset="0.625" stop-color="#4e00ff"/><stop offset="0.750" stop-color="#6200ff"/><stop offset="0.875" stop-color="#7600ff"/><stop offset="1.000" stop-color="#8a00ff"/></linearGradient>
<linearGradient id="c190" gradientUnits="userSpaceOnUse" x1="1191" x2="1380" y1="0" y2="0"><stop offset="0.000" stop-color="#0000ff"/><stop offset="0.069" stop-color="#0000ff"/><stop offset="0.109" stop-color="#0000ff"/><stop offset="0.125" stop-color="#0200ff"/><stop offset="0.250" stop-color="#1500ff"/><stop offset="0.375" stop-color="#2700ff"/><stop offset="0.500" stop-color="#3a00ff"/><stop offset="0.625" stop-color="#4d00ff"/><stop offset="0.750" stop-color="#6000ff"/><stop offset="0.875" stop-color="#7400ff"/><stop offset="1.000" stop-color="#8800ff"/></linearGradient>
<linearGradient id="c191" gradientUnits="userSpaceOnUse" x1="1192" x2="1378" y1="0" y2="0"><stop offset="0.000" stop-color="#0000ff"/><stop offset="0.064" stop-color="#0000ff"/><stop offset="0.107" stop-color="#0000ff"/><stop offset="0.125" stop-color="#0300ff"/><stop offset="0.250" stop-color="#1400ff"/><stop offset="0.375" stop-color="#2700ff"/><stop offset="0.500" stop-color="#3900ff"/><stop offset="0.625" stop-color="#4c00ff"/><stop offset="0.750" stop-color="#5f00ff"/><stop offset="0.875" stop-color="#7200ff"/><stop offset="1.000" stop-color="#8500ff"/></linearGradient>
<linearGradient id="c192" gradientUnits="userSpaceOnUse" x1="1194" x2="1376" y1="0" y2="0"><stop offset="0.000" stop-color="#0000ff"/><stop offset="0.053" stop-color="#0000ff"/><stop offset="0.100" stop-color="#0000ff"/><stop offset="0.143" stop-color="#0600ff"/><stop offset="0.286" stop-color="#1a00ff"/><stop offset="0.429" stop-color="#2e00ff"/><stop offset="0.571" stop-color="#4300ff"/><stop offset="0.714" stop-color="#5800ff"/><stop offset="0.857" stop-color="#6d00ff"/><stop offset="1.000" stop-color="#8200ff"/></linearGradient>
<linearGradient id="c193" gradientUnits="userSpaceOnUse" x1="1196" x2="1374" y1="0" y2="0"><stop offset="0.000" stop-color="#0000ff"/><stop offset="0.042" stop-color="#0000ff"/><stop offset="0.093" stop-color="#0000ff"/><stop offset="0.143" stop-color="#0700ff"/><stop offset="0.286" stop-color="#1a00ff"/><stop offset="0.429" stop-color="#2e00ff"/><stop offset="0.571" stop-color="#4200ff"/><stop offset="0.714" stop-color="#5600ff"/><stop offset="0.857" stop-color="#6b00ff"/><stop offset="1.000" stop-color="#8000ff"/></linearGradient>
<linearGradient id="c194" gradientUnits="userSpaceOnUse" x1="1198" x2="1372" y1="0" y2="0"><stop offset="0.000" stop-color="#0000ff"/><stop offset="0.031" stop-color="#0000ff"/><stop offset="0.086" stop-color="#0000ff"/><stop offset="0.143" stop-color="#0700ff"/><stop offset="0.286" stop-color="#1a00ff"/><stop offset="0.429" stop-color="#2e00ff"/><stop offset="0.571" stop-color="#4100ff"/><stop offset="0.714" stop-color="#5500ff"/><stop offset="0.857" stop-color="#6900ff"/><stop offset="1.000" stop-color="#7d00ff"/></linearGradient>
<linearGradient id="c195" gradientUnits="userSpaceOnUse" x1="1199" x2="1370" y1="0" y2="0"><stop offset="0.000" stop-color="#0000ff"/><stop offset="0.024" stop-color="#0000ff"/><stop offset="0.083" stop-color="#0000ff"/><stop offset="0.143" stop-color="#0800ff"/><stop offset="0.286" stop-color="#1a00ff"/><stop offset="0.429" stop-color="#2d00ff"/><stop offset="0.571" stop-color="#4000ff"/><stop offset="0.714" stop-color="#5300ff"/><stop offset="0.857" stop-color="#6700ff"/><stop offset="1.000" stop-color="#7a00ff"/></linearGradient>
<linearGradient id="c196" gradientUnits="userSpaceOnUse" x1="1201" x2="1368" y1="0" y2="0"><stop offset="0.000" stop-color="#0000ff"/><stop offset="0.012" stop-color="#0000ff"/><stop offset="0.075" stop-color="#0000ff"/><stop offset="0.143" stop-color="#0800ff"/><stop offset="0.286" stop-color="#1a00ff"/><stop offset="0.429" stop-color="#2d00ff"/><stop offset="0.571" stop-color="#3f00ff"/><stop offset="0.714" stop-color="#5200ff"/><stop offset="0.857" stop-color="#6500ff"/><stop offset="1.000" stop-color="#7800ff"/></linearGradient>
<linearGradient id="c197" gradientUnits="userSpaceOnUse" x1="1203" x2="1366" y1="0" y2="0"><stop offset="0.000" stop-color="#0000ff"/><stop offset="0.067" stop-color="#0000ff"/><stop offset="0.143" stop-color="#0900ff"/><stop offset="0.286" stop-color="#1b00ff"/><stop offset="0.429" stop-color="#2c00ff"/><stop offset="0.571" stop-color="#3e00ff"/><stop offset="0.714" stop-color="#5000ff"/><stop offset="0.857" stop-color="#6300ff"/><stop offset="1.000" stop-color="#7500ff"/></linearGradient>
<linearGradient id="c198" gradientUnits="userSpaceOnUse" x1="1205" x2="1364" y1="0" y2="0"><stop offset="0.000" stop-color="#0000ff"/><stop offset="0.058" stop-color="#0000ff"/><stop offset="0.143" stop-color="#0a00ff"/><stop offset="0.286" stop-color="#1b00ff"/><stop offset="0.429" stop-color="#2c00ff"/><stop offset="0.571" stop-color="#3d00ff"/><stop offset="0.714" stop-color="#4f00ff"/><stop offset="0.857" stop-color="#6100ff"/><stop offset="1.000" stop-color="#7300ff"/></linearGradient>
<linearGradient id="c199" gradientUnits="userSpaceOnUse" x1="1207" x2="1362" y1="0" y2="0"><stop offset="0.000" stop-color="#0000ff"/><stop offset="0.049" stop-color="#0000ff"/><stop offset="0.167" stop-color="#0d00ff"/><stop offset="0.333" stop-color="#2100ff"/><stop offset="0.500" stop-color="#3400ff"/><stop offset="0.667" stop-color="#4800ff"/><stop offset="0.833" stop-color="#5c00ff"/><stop offset="1.000" stop-color="#7000ff"/></linearGradient>
<linearGradient id="c200" gradientUnits="userSpaceOnUse" x1="1209" x2="1360" y1="0" y2="0"><stop offset="0.000" stop-color="#0000ff"/><stop offset="0.039" stop-color="#0000ff"/><stop offset="0.167" stop-color="#0e00ff"/><stop offset="0.333" stop-color="#2100ff"/><stop offset="0.500" stop-color="#3400ff"/><stop offset="0.667" stop-color="#4700ff"/><stop offset="0.833" stop-color="#5a00ff"/><stop offset="1.000" stop-color="#6e00ff"/></linearGradient>
<linearGradient id="c201" gradientUnits="userSpaceOnUse" x1="1211" x2="1358" y1="0" y2="0"><stop offset="0.000" stop-color="#0000ff"/><stop offset="0.029" stop-color="#0000ff"/><stop offset="0.167" stop-color="#0f00ff"/><stop offset="0.333" stop-color="#2100ff"/><stop offset="0.500" stop-color="#3300ff"/><stop offset="0.667" stop-color="#4600ff"/><stop offset="0.833" stop-color="#5800ff"/><stop offset="1.000" stop-color="#6b00ff"/></linearGradient>
<linearGradient id="c202" gradientUnits="userSpaceOnUse" x1="1213" x2="1357" y1="0" y2="0"><stop offset="0.000" stop-color="#0000ff"/><stop offset="0.018" stop-color="#0000ff"/><stop offset="0.167" stop-color="#1000ff"/><stop offset="0.333" stop-color="#2100ff"/><stop offset="0.500" stop-color="#3300ff"/><stop offset="0.667" stop-color="#4500ff"/><stop offset="0.833" stop-color="#5700ff"/><stop offset="1.000" stop-color="#6a00ff"/></linearGradient>
<linearGradient id="c203" gradientUnits="userSpaceOnUse" x1="1215" x2="1355" y1="0" y2="0"><stop offset="0.000" stop-color="#0000ff"/><stop offset="0.167" stop-color="#1000ff"/><stop offset="0.333" stop-color="#2100ff"/><stop offset="0.500" stop-color="#3300ff"/><stop offset="0.667" stop-color="#4400ff"/><stop offset="0.833" stop-color="#5600ff"/><stop offset="1.000" stop-color="#6800ff"/></linearGradient>
<linearGradient id="c204" gradientUnits="userSpaceOnUse" x1="1217" x2="1353" y1="0" y2="0"><stop offset="0.000" stop-color="#0100ff"/><stop offset="0.167" stop-color="#1100ff"/><stop offset="0.333" stop-color="#2100ff"/><stop offset="0.500" stop-color="#3200ff"/><stop offset="0.667" stop-color="#4300ff"/><stop offset="0.833" stop-color="#5400ff"/><stop offset="1.000" stop-color="#6500ff"/></linearGradient>
<linearGradient id="c205" gradientUnits="userSpaceOnUse" x1="1219" x2="1351" y1="0" y2="0"><stop offset="0.000" stop-color="#0200ff"/><stop offset="0.167" stop-color="#1200ff"/><stop offset="0.333" stop-color="#2100ff"/><stop offset="0.500" stop-color="#3200ff"/><stop offset="0.667" stop-color="#4200ff"/><stop offset="0.833" stop-color="#5200ff"/><stop offset="1.000" stop-color="#6300ff"/></linearGradient>
<linearGradient id="c206" gradientUnits="userSpaceOnUse" x1="1221" x2="1349" y1="0" y2="0"><stop offset="0.000" stop-color="#0300ff"/><stop offset="0.200" stop-color="#1500ff"/><stop offset="0.400" stop-color="#2800ff"/><stop offset="0.600" stop-color="#3a00ff"/><stop offset="0.800" stop-color="#4d00ff"/><stop offset="1.000" stop-color="#6100ff"/></linearGradient>
<linearGradient id="c207" gradientUnits="userSpaceOnUse" x1="1223" x2="1347" y1="0" y2="0"><stop offset="0.000" stop-color="#0400ff"/><stop offset="0.200" stop-color="#1600ff"/><stop offset="0.400" stop-color="#2800ff"/><stop offset="0.600" stop-color="#3a00ff"/><stop offset="0.800" stop-color="#4c00ff"/><stop offset="1.000" stop-color="#5e00ff"/></linearGradient>
<linearGradient id="c208" gradientUnits="userSpaceOnUse" x1="1226" x2="1345" y1="0" y2="0"><stop offset="0.000" stop-color="#0600ff"/><stop offset="0.200" stop-color="#1700ff"/><stop offset="0.400" stop-color="#2800ff"/><stop offset="0.600" stop-color="#3900ff"/><stop offset="0.800" stop-color="#4b00ff"/><stop offset="1.000" stop-color="#5c00ff"/></linearGradient>
<linearGradient id="c209" gradientUnits="userSpaceOnUse" x1="1228" x2="1343" y1="0" y2="0"><stop offset="0.000" stop-color="#0700ff"/><stop offset="0.200" stop-color="#1700ff"/><stop offset="0.400" stop-color="#2800ff"/><stop offset="0.600" stop-color="#3800ff"/><stop offset="0.800" stop-color="#4900ff"/><stop offset="1.000" stop-color="#5a00ff"/></linearGradient>
<linearGradient id="c210" gradientUnits="userSpaceOnUse" x1="1230" x2="1341" y1="0" y2="0"><stop offset="0.000" stop-color="#0800ff"/><stop offset="0.200" stop-color="#1800ff"/><stop offset="0.400" stop-color="#2800ff"/><stop offset="0.600" stop-color="#3700ff"/><stop offset="0.800" stop-color="#4800ff"/><stop offset="1.000" stop-color="#5800ff"/></linearGradient>
<linearGradient id="c211" gradientUnits="userSpaceOnUse" x1="1232" x2="1339" y1="0" y2="0"><stop offset="0.000" stop-color="#0900ff"/><stop offset="0.200" stop-color="#1800ff"/><stop offset="0.400" stop-color="#2700ff"/><stop offset="0.600" stop-color="#3700ff"/><stop offset="0.800" stop-color="#4600ff"/><stop offset="1.000" stop-color="#5600ff"/></linearGradient>
<linearGradient id="c212" gradientUnits="userSpaceOnUse" x1="1235" x2="1337" y1="0" y2="0"><stop offset="0.000" stop-color="#0b00ff"/><stop offset="0.250" stop-color="#1d00ff"/><stop offset="0.500" stop-color="#2f00ff"/><stop offset="0.750" stop-color="#4100ff"/><stop offset="1.000" stop-color="#5300ff"/></linearGradient>
<linearGradient id="c213" gradientUnits="userSpaceOnUse" x1="1237" x2="1335" y1="0" y2="0"><stop offset="0.000" stop-color="#0c00ff"/><stop offset="0.250" stop-color="#1d00ff"/><stop offset="0.500" stop-color="#2e00ff"/><stop offset="0.750" stop-color="#4000ff"/><stop offset="1.000" stop-color="#5100ff"/></linearGradient>
<linearGradient id="c214" gradientUnits="userSpaceOnUse" x1="1239" x2="1333" y1="0" y2="0"><stop offset="0.000" stop-color="#0d00ff"/><stop offset="0.250" stop-color="#1e00ff"/><stop offset="0.500" stop-color="#2e00ff"/><stop offset="0.750" stop-color="#3f00ff"/><stop offset="1.000" stop-color="#4f00ff"/></linearGradient>
<linearGradient id="c215" gradientUnits="userSpaceOnUse" x1="1242" x2="1331" y1="0" y2="0"><stop offset="0.000" stop-color="#0f00ff"/><stop offset="0.250" stop-color="#1e00ff"/><stop offset="0.500" stop-color="#2e00ff"/><stop offset="0.750" stop-color="#3d00ff"/><stop offset="1.000" stop-color="#4d00ff"/></linearGradient>
<linearGradient id="c216" gradientUnits="userSpaceOnUse" x1="1244" x2="1329" y1="0" y2="0"><stop offset="0.000" stop-color="#1000ff"/><stop offset="0.250" stop-color="#1f00ff"/><stop offset="0.500" stop-color="#2d00ff"/><stop offset="0.750" stop-color="#3c00ff"/><stop offset="1.000" stop-color="#4b00ff"/></linearGradient>
<linearGradient id="c217" gradientUnits="userSpaceOnUse" x1="1247" x2="1327" y1="0" y2="0"><stop offset="0.000" stop-color="#1200ff"/><stop offset="0.250" stop-color="#2000ff"/><stop offset="0.500" stop-color="#2d00ff"/><stop offset="0.750" stop-color="#3b00ff"/><stop offset="1.000" stop-color="#4900ff"/></linearGradient>
<linearGradient id="c218" gradientUnits="userSpaceOnUse" x1="1249" x2="1325" y1="0" y2="0"><stop offset="0.000" stop-color="#1300ff"/><stop offset="0.333" stop-color="#2400ff"/><stop offset="0.667" stop-color="#3600ff"/><stop offset="1.000" stop-color="#4700ff"/></linearGradient>
<linearGradient id="c219" gradientUnits="userSpaceOnUse" x1="1252" x2="1323" y1="0" y2="0"><stop offset="0.000" stop-color="#1500ff"/><stop offset="0.333" stop-color="#2500ff"/><stop offset="0.667" stop-color="#3500ff"/><stop offset="1.000" stop-color="#4500ff"/></linearGradient>
<linearGradient id="c220" gradientUnits="userSpaceOnUse" x1="1254" x2="1321" y1="0" y2="0"><stop offset="0.000" stop-color="#1600ff"/><stop offset="0.333" stop-color="#2500ff"/><stop offset="0.667" stop-color="#3400ff"/><stop offset="1.000" stop-color="#4300ff"/></linearGradient>
<linearGradient id="c221" gradientUnits="userSpaceOnUse" x1="1256" x2="1320" y1="0" y2="0"><stop offset="0.000" stop-color="#1700ff"/><stop offset="0.333" stop-color="#2500ff"/><stop offset="0.667" stop-color="#3300ff"/><stop offset="1.000" stop-color="#4200ff"/></linearGradient>
<linearGradient id="c222" gradientUnits="userSpaceOnUse" x1="1259" x2="1318" y1="0" y2="0"><stop offset="0.000" stop-color="#1800ff"/><stop offset="0.333" stop-color="#2600ff"/><stop offset="0.667" stop-color="#3300ff"/><stop offset="1.000" stop-color="#4000ff"/></linearGradient>
<linearGradient id="c223" gradientUnits="userSpaceOnUse" x1="1261" x2="1316" y1="0" y2="0"><stop offset="0.000" stop-color="#1900ff"/><stop offset="0.333" stop-color="#2600ff"/><stop offset="0.667" stop-color="#3200ff"/><stop offset="1.000" stop-color="#3e00ff"/></linearGradient>
<linearGradient id="c224" gradientUnits="userSpaceOnUse" x1="1264" x2="1314" y1="0" y2="0"><stop offset="0.000" stop-color="#1b00ff"/><stop offset="0.500" stop-color="#2c00ff"/><stop offset="1.000" stop-color="#3c00ff"/></linearGradient>
<linearGradient id="c225" gradientUnits="userSpaceOnUse" x1="1266" x2="1312" y1="0" y2="0"><stop offset="0.000" stop-color="#1c00ff"/><stop offset="0.500" stop-color="#2b00ff"/><stop offset="1.000" stop-color="#3b00ff"/></linearGradient>
<linearGradient id="c226" gradientUnits="userSpaceOnUse" x1="1268" x2="1310" y1="0" y2="0"><stop offset="0.000" stop-color="#1d00ff"/><stop offset="0.500" stop-color="#2b00ff"/><stop offset="1.000" stop-color="#3900ff"/></linearGradient>
<linearGradient id="c227" gradientUnits="userSpaceOnUse" x1="1271" x2="1308" y1="0" y2="0"><stop offset="0.000" stop-color="#1f00ff"/><stop offset="0.500" stop-color="#2b00ff"/><stop offset="1.000" stop-color="#3700ff"/></linearGradient>
<linearGradient id="c228" gradientUnits="userSpaceOnUse" x1="1273" x2="1306" y1="0" y2="0"><stop offset="0.000" stop-color="#2000ff"/><stop offset="0.500" stop-color="#2a00ff"/><stop offset="1.000" stop-color="#3500ff"/></linearGradient>
<linearGradient id="c229" gradientUnits="userSpaceOnUse" x1="1275" x2="1304" y1="0" y2="0"><stop offset="0.000" stop-color="#2000ff"/><stop offset="0.500" stop-color="#2a00ff"/><stop offset="1.000" stop-color="#3300ff"/></linearGradient>
<linearGradient id="c230" gradientUnits="userSpaceOnUse" x1="1278" x2="1302" y1="0" y2="0"><stop offset="0.000" stop-color="#2200ff"/><stop offset="1.000" stop-color="#3200ff"/></linearGradient>
<linearGradient id="c231" gradientUnits="userSpaceOnUse" x1="1280" x2="1300" y1="0" y2="0"><stop offset="0.000" stop-color="#2300ff"/><stop offset="1.000" stop-color="#3000ff"/></linearGradient>
<linearGradient id="c232" gradientUnits="userSpaceOnUse" x1="1283" x2="1298" y1="0" y2="0"><stop offset="0.000" stop-color="#2500ff"/><stop offset="1.000" stop-color="#2e00ff"/></linearGradient>
<linearGradient id="c233" gradientUnits="userSpaceOnUse" x1="1286" x2="1296" y1="0" y2="0"><stop offset="0.000" stop-color="#2600ff"/><stop offset="1.000" stop-color="#2c00ff"/></linearGradient>
<linearGradient id="rbR" x1="0" y1="0" x2="0" y2="1"><stop offset="0" stop-color="#ff5a5a"/><stop offset="1" stop-color="#ff5050"/></linearGradient>
<linearGradient id="rbG" x1="0" y1="0" x2="0" y2="1"><stop offset="0" stop-color="#58ac58"/><stop offset="1" stop-color="#479a47"/></linearGradient>
<linearGradient id="rbB" x1="0" y1="0" x2="0" y2="1"><stop offset="0" stop-color="#5a5aff"/><stop offset="1" stop-color="#4a4aff"/></linearGradient>
<linearGradient id="m0"><stop offset="0.000" stop-color="#87ffcf"/><stop offset="0.125" stop-color="#98ffce"/><stop offset="0.250" stop-color="#aaffcd"/><stop offset="0.375" stop-color="#bcffcd"/><stop offset="0.500" stop-color="#cfffcc"/><stop offset="0.625" stop-color="#e3ffcb"/><stop offset="0.750" stop-color="#f8ffca"/><stop offset="0.875" stop-color="#fff2bf"/><stop offset="1.000" stop-color="#ffdfaf"/></linearGradient>
<linearGradient id="m1"><stop offset="0.000" stop-color="#88ffd2"/><stop offset="0.125" stop-color="#9affd1"/><stop offset="0.250" stop-color="#acffd0"/><stop offset="0.375" stop-color="#bfffcf"/><stop offset="0.500" stop-color="#d2ffcf"/><stop offset="0.625" stop-color="#e6ffce"/><stop offset="0.750" stop-color="#fbffcd"/><stop offset="0.875" stop-color="#ffefbf"/><stop offset="1.000" stop-color="#ffddb0"/></linearGradient>
<linearGradient id="m2"><stop offset="0.000" stop-color="#8affd4"/><stop offset="0.125" stop-color="#9cffd4"/><stop offset="0.250" stop-color="#aeffd3"/><stop offset="0.375" stop-color="#c1ffd2"/><stop offset="0.500" stop-color="#d5ffd1"/><stop offset="0.625" stop-color="#e9ffd1"/><stop offset="0.750" stop-color="#feffd0"/><stop offset="0.875" stop-color="#ffecc0"/><stop offset="1.000" stop-color="#ffdab1"/></linearGradient>
<linearGradient id="m3"><stop offset="0.000" stop-color="#8cffd7"/><stop offset="0.125" stop-color="#9effd6"/><stop offset="0.250" stop-color="#b1ffd6"/><stop offset="0.375" stop-color="#c4ffd5"/><stop offset="0.500" stop-color="#d7ffd4"/><stop offset="0.625" stop-color="#ecffd4"/><stop offset="0.750" stop-color="#fffdd1"/><stop offset="0.875" stop-color="#ffe9c0"/><stop offset="1.000" stop-color="#ffd8b1"/></linearGradient>
<linearGradient id="m4"><stop offset="0.000" stop-color="#8fffda"/><stop offset="0.125" stop-color="#a0ffd9"/><stop offset="0.250" stop-color="#b3ffd9"/><stop offset="0.375" stop-color="#c6ffd8"/><stop offset="0.500" stop-color="#daffd7"/><stop offset="0.625" stop-color="#efffd7"/><stop offset="0.750" stop-color="#fffad2"/><stop offset="0.875" stop-color="#ffe6c1"/><stop offset="1.000" stop-color="#ffd5b2"/></linearGradient>
<linearGradient id="m5"><stop offset="0.000" stop-color="#91ffdd"/><stop offset="0.125" stop-color="#a3ffdc"/><stop offset="0.250" stop-color="#b6ffdc"/><stop offset="0.375" stop-color="#c9ffdb"/><stop offset="0.500" stop-color="#ddffda"/><stop offset="0.625" stop-color="#f2ffda"/><stop offset="0.750" stop-color="#fff7d2"/><stop offset="0.875" stop-color="#ffe3c1"/><stop offset="1.000" stop-color="#ffd2b2"/></linearGradient>
<linearGradient id="m6"><stop offset="0.000" stop-color="#93ffe0"/><stop offset="0.125" stop-color="#a5ffdf"/><stop offset="0.250" stop-color="#b8ffdf"/><stop offset="0.375" stop-color="#ccffde"/><stop offset="0.500" stop-color="#e0ffdd"/><stop offset="0.625" stop-color="#f5ffdd"/><stop offset="0.750" stop-color="#fff4d3"/><stop offset="0.875" stop-color="#ffe1c2"/><stop offset="1.000" stop-color="#ffd0b3"/></linearGradient>
<linearGradient id="m7"><stop offset="0.000" stop-color="#95ffe2"/><stop offset="0.125" stop-color="#a7ffe2"/><stop offset="0.250" stop-color="#baffe2"/><stop offset="0.375" stop-color="#ceffe1"/><stop offset="0.500" stop-color="#e3ffe1"/><stop offset="0.625" stop-color="#f8ffe0"/><stop offset="0.750" stop-color="#fff1d3"/><stop offset="0.875" stop-color="#ffdec2"/><stop offset="1.000" stop-color="#ffcdb3"/></linearGradient>
<linearGradient id="m8"><stop offset="0.000" stop-color="#97ffe5"/><stop offset="0.125" stop-color="#aaffe5"/><stop offset="0.250" stop-color="#bdffe5"/><stop offset="0.375" stop-color="#d1ffe4"/><stop offset="0.500" stop-color="#e6ffe4"/><stop offset="0.625" stop-color="#fbffe3"/><stop offset="0.750" stop-color="#ffeed3"/><stop offset="0.875" stop-color="#ffdbc3"/><stop offset="1.000" stop-color="#ffcbb4"/></linearGradient>
<linearGradient id="m9"><stop offset="0.000" stop-color="#99ffe8"/><stop offset="0.125" stop-color="#acffe8"/><stop offset="0.250" stop-color="#c0ffe8"/><stop offset="0.375" stop-color="#d4ffe7"/><stop offset="0.500" stop-color="#e9ffe7"/><stop offset="0.625" stop-color="#feffe7"/><stop offset="0.750" stop-color="#ffebd4"/><stop offset="0.875" stop-color="#ffd8c3"/><stop offset="1.000" stop-color="#ffc8b4"/></linearGradient>
<linearGradient id="m10"><stop offset="0.000" stop-color="#9bffeb"/><stop offset="0.125" stop-color="#aeffeb"/><stop offset="0.250" stop-color="#c2ffeb"/><stop offset="0.375" stop-color="#d7ffeb"/><stop offset="0.500" stop-color="#ecffea"/><stop offset="0.625" stop-color="#fffce7"/><stop offset="0.750" stop-color="#ffe8d4"/><stop offset="0.875" stop-color="#ffd6c4"/><stop offset="1.000" stop-color="#ffc6b5"/></linearGradient>
<linearGradient id="m11"><stop offset="0.000" stop-color="#9effef"/><stop offset="0.125" stop-color="#b1ffee"/><stop offset="0.250" stop-color="#c5ffee"/><stop offset="0.375" stop-color="#d9ffee"/><stop offset="0.500" stop-color="#efffee"/><stop offset="0.625" stop-color="#fff9e8"/><stop offset="0.750" stop-color="#ffe5d5"/><stop offset="0.875" stop-color="#ffd3c4"/><stop offset="1.000" stop-color="#ffc3b5"/></linearGradient>
<linearGradient id="m12"><stop offset="0.000" stop-color="#a0fff2"/><stop offset="0.125" stop-color="#b3fff2"/><stop offset="0.250" stop-color="#c7fff1"/><stop offset="0.375" stop-color="#dcfff1"/><stop offset="0.500" stop-color="#f2fff1"/><stop offset="0.625" stop-color="#fff6e8"/><stop offset="0.750" stop-color="#ffe2d5"/><stop offset="0.875" stop-color="#ffd0c4"/><stop offset="1.000" stop-color="#ffc1b6"/></linearGradient>
<linearGradient id="m13"><stop offset="0.000" stop-color="#a2fff5"/><stop offset="0.125" stop-color="#b6fff5"/><stop offset="0.250" stop-color="#cafff5"/><stop offset="0.375" stop-color="#dffff5"/><stop offset="0.500" stop-color="#f5fff4"/><stop offset="0.625" stop-color="#fff3e9"/><stop offset="0.750" stop-color="#ffdfd6"/><stop offset="0.875" stop-color="#ffcec5"/><stop offset="1.000" stop-color="#ffbeb6"/></linearGradient>
<linearGradient id="m14"><stop offset="0.000" stop-color="#a5fff8"/><stop offset="0.125" stop-color="#b8fff8"/><stop offset="0.250" stop-color="#cdfff8"/><stop offset="0.375" stop-color="#e2fff8"/><stop offset="0.500" stop-color="#f8fff8"/><stop offset="0.625" stop-color="#fff0e9"/><stop offset="0.750" stop-color="#ffdcd6"/><stop offset="0.875" stop-color="#ffcbc5"/><stop offset="1.000" stop-color="#ffbcb7"/></linearGradient>
<linearGradient id="m15"><stop offset="0.000" stop-color="#a7fffb"/><stop offset="0.125" stop-color="#bbfffb"/><stop offset="0.250" stop-color="#d0fffb"/><stop offset="0.375" stop-color="#e5fffb"/><stop offset="0.500" stop-color="#fcfffb"/><stop offset="0.625" stop-color="#ffede9"/><stop offset="0.750" stop-color="#ffd9d6"/><stop offset="0.875" stop-color="#ffc9c6"/><stop offset="1.000" stop-color="#ffbab7"/></linearGradient>
<linearGradient id="m16"><stop offset="0.000" stop-color="#aaffff"/><stop offset="0.125" stop-color="#beffff"/><stop offset="0.250" stop-color="#d3ffff"/><stop offset="0.375" stop-color="#e8ffff"/><stop offset="0.500" stop-color="#ffffff"/><stop offset="0.625" stop-color="#ffeaea"/><stop offset="0.750" stop-color="#ffd7d7"/><stop offset="0.875" stop-color="#ffc6c6"/><stop offset="1.000" stop-color="#ffb7b7"/></linearGradient>
<linearGradient id="m17"><stop offset="0.000" stop-color="#aafcff"/><stop offset="0.125" stop-color="#befcff"/><stop offset="0.250" stop-color="#d3fcff"/><stop offset="0.375" stop-color="#e8fbff"/><stop offset="0.500" stop-color="#fffbff"/><stop offset="0.625" stop-color="#ffe6ea"/><stop offset="0.750" stop-color="#ffd4d7"/><stop offset="0.875" stop-color="#ffc4c7"/><stop offset="1.000" stop-color="#ffb5b8"/></linearGradient>
<linearGradient id="m18"><stop offset="0.000" stop-color="#aaf8ff"/><stop offset="0.125" stop-color="#bef8ff"/><stop offset="0.250" stop-color="#d3f8ff"/><stop offset="0.375" stop-color="#e8f8ff"/><stop offset="0.500" stop-color="#fef8ff"/><stop offset="0.625" stop-color="#ffe3ea"/><stop offset="0.750" stop-color="#ffd1d8"/><stop offset="0.875" stop-color="#ffc1c7"/><stop offset="1.000" stop-color="#ffb3b8"/></linearGradient>
<linearGradient id="m19"><stop offset="0.000" stop-color="#aaf5ff"/><stop offset="0.125" stop-color="#bef5ff"/><stop offset="0.250" stop-color="#d3f5ff"/><stop offset="0.375" stop-color="#e8f5ff"/><stop offset="0.500" stop-color="#fef4ff"/><stop offset="0.625" stop-color="#ffe0eb"/><stop offset="0.750" stop-color="#ffced8"/><stop offset="0.875" stop-color="#ffbfc8"/><stop offset="1.000" stop-color="#ffb0b9"/></linearGradient>
<linearGradient id="m20"><stop offset="0.000" stop-color="#aaf2ff"/><stop offset="0.125" stop-color="#bef2ff"/><stop offset="0.250" stop-color="#d3f1ff"/><stop offset="0.375" stop-color="#e8f1ff"/><stop offset="0.500" stop-color="#fef1ff"/><stop offset="0.625" stop-color="#ffdeeb"/><stop offset="0.750" stop-color="#ffccd8"/><stop offset="0.875" stop-color="#ffbcc8"/><stop offset="1.000" stop-color="#ffaeb9"/></linearGradient>
<linearGradient id="m21"><stop offset="0.000" stop-color="#abefff"/><stop offset="0.125" stop-color="#beeeff"/><stop offset="0.250" stop-color="#d3eeff"/><stop offset="0.375" stop-color="#e8eeff"/><stop offset="0.500" stop-color="#feedff"/><stop offset="0.625" stop-color="#ffdbeb"/><stop offset="0.750" stop-color="#ffc9d9"/><stop offset="0.875" stop-color="#ffbac8"/><stop offset="1.000" stop-color="#ffacba"/></linearGradient>
<linearGradient id="m22"><stop offset="0.000" stop-color="#abecff"/><stop offset="0.125" stop-color="#beebff"/><stop offset="0.250" stop-color="#d3ebff"/><stop offset="0.375" stop-color="#e8eaff"/><stop offset="0.500" stop-color="#fdeaff"/><stop offset="0.625" stop-color="#ffd8ec"/><stop offset="0.750" stop-color="#ffc6d9"/><stop offset="0.875" stop-color="#ffb7c9"/><stop offset="1.000" stop-color="#ffa9ba"/></linearGradient>
<linearGradient id="m23"><stop offset="0.000" stop-color="#abe8ff"/><stop offset="0.125" stop-color="#bfe8ff"/><stop offset="0.250" stop-color="#d3e7ff"/><stop offset="0.375" stop-color="#e8e7ff"/><stop offset="0.500" stop-color="#fde7ff"/><stop offset="0.625" stop-color="#ffd5ec"/><stop offset="0.750" stop-color="#ffc4d9"/><stop offset="0.875" stop-color="#ffb5c9"/><stop offset="1.000" stop-color="#ffa7bb"/></linearGradient>
<linearGradient id="m24"><stop offset="0.000" stop-color="#abe5ff"/><stop offset="0.125" stop-color="#bfe5ff"/><stop offset="0.250" stop-color="#d3e4ff"/><stop offset="0.375" stop-color="#e7e4ff"/><stop offset="0.500" stop-color="#fde3ff"/><stop offset="0.625" stop-color="#ffd2ec"/><stop offset="0.750" stop-color="#ffc1da"/><stop offset="0.875" stop-color="#ffb2ca"/><stop offset="1.000" stop-color="#ffa5bb"/></linearGradient>
<linearGradient id="m25"><stop offset="0.000" stop-color="#ace2ff"/><stop offset="0.125" stop-color="#bfe2ff"/><stop offset="0.250" stop-color="#d3e1ff"/><stop offset="0.375" stop-color="#e7e1ff"/><stop offset="0.500" stop-color="#fde0ff"/><stop offset="0.625" stop-color="#ffcfec"/><stop offset="0.750" stop-color="#ffbfda"/><stop offset="0.875" stop-color="#ffb0ca"/><stop offset="1.000" stop-color="#ffa3bc"/></linearGradient>
<linearGradient id="m26"><stop offset="0.000" stop-color="#acdfff"/><stop offset="0.125" stop-color="#bfdfff"/><stop offset="0.250" stop-color="#d3deff"/><stop offset="0.375" stop-color="#e7ddff"/><stop offset="0.500" stop-color="#fdddff"/><stop offset="0.625" stop-color="#ffcced"/><stop offset="0.750" stop-color="#ffbcdb"/><stop offset="0.875" stop-color="#ffadca"/><stop offset="1.000" stop-color="#ffa1bc"/></linearGradient>
<linearGradient id="m27"><stop offset="0.000" stop-color="#acdcff"/><stop offset="0.125" stop-color="#bfdbff"/><stop offset="0.250" stop-color="#d3dbff"/><stop offset="0.375" stop-color="#e7daff"/><stop offset="0.500" stop-color="#fcd9ff"/><stop offset="0.625" stop-color="#ffc9ed"/><stop offset="0.750" stop-color="#ffb9db"/><stop offset="0.875" stop-color="#ffabcb"/><stop offset="1.000" stop-color="#ff9ebc"/></linearGradient>
<linearGradient id="m28"><stop offset="0.000" stop-color="#acd9ff"/><stop offset="0.125" stop-color="#bfd8ff"/><stop offset="0.250" stop-color="#d3d8ff"/><stop offset="0.375" stop-color="#e7d7ff"/><stop offset="0.500" stop-color="#fcd6ff"/><stop offset="0.625" stop-color="#ffc7ed"/><stop offset="0.750" stop-color="#ffb7db"/><stop offset="0.875" stop-color="#ffa9cb"/><stop offset="1.000" stop-color="#ff9cbd"/></linearGradient>
<linearGradient id="m29"><stop offset="0.000" stop-color="#acd6ff"/><stop offset="0.125" stop-color="#bfd5ff"/><stop offset="0.250" stop-color="#d3d5ff"/><stop offset="0.375" stop-color="#e7d4ff"/><stop offset="0.500" stop-color="#fcd3ff"/><stop offset="0.625" stop-color="#ffc4ee"/><stop offset="0.750" stop-color="#ffb4dc"/><stop offset="0.875" stop-color="#ffa6cc"/><stop offset="1.000" stop-color="#ff9abd"/></linearGradient>
<linearGradient id="m30"><stop offset="0.000" stop-color="#acd3ff"/><stop offset="0.125" stop-color="#bfd2ff"/><stop offset="0.250" stop-color="#d3d2ff"/><stop offset="0.375" stop-color="#e7d1ff"/><stop offset="0.500" stop-color="#fcd0ff"/><stop offset="0.625" stop-color="#ffc1ee"/><stop offset="0.750" stop-color="#ffb2dc"/><stop offset="0.875" stop-color="#ffa4cc"/><stop offset="1.000" stop-color="#ff98be"/></linearGradient>
<linearGradient id="m31"><stop offset="0.000" stop-color="#add0ff"/><stop offset="0.125" stop-color="#bfcfff"/><stop offset="0.250" stop-color="#d3cfff"/><stop offset="0.375" stop-color="#e7ceff"/><stop offset="0.500" stop-color="#fbcdff"/><stop offset="0.625" stop-color="#ffbfee"/><stop offset="0.750" stop-color="#ffafdc"/><stop offset="0.875" stop-color="#ffa2cc"/><stop offset="1.000" stop-color="#ff96be"/></linearGradient>
<linearGradient id="m32"><stop offset="0.000" stop-color="#adcdff"/><stop offset="0.125" stop-color="#bfcdff"/><stop offset="0.250" stop-color="#d3ccff"/><stop offset="0.375" stop-color="#e7cbff"/><stop offset="0.500" stop-color="#fbcaff"/><stop offset="0.625" stop-color="#ffbcef"/><stop offset="0.750" stop-color="#ffaddd"/><stop offset="0.875" stop-color="#ffa0cd"/><stop offset="1.000" stop-color="#ff94bf"/></linearGradient>
<linearGradient id="thg" x1="0" y1="0" x2="0" y2="1"><stop offset="0" stop-color="#323232"/><stop offset="0.5" stop-color="#2a2a2a"/><stop offset="0.52" stop-color="#141414"/><stop offset="1" stop-color="#1c1c1c"/></linearGradient>
<clipPath id="tclip"><rect x="997" y="662" width="633.5" height="204.29999999999995"/></clipPath>
<linearGradient id="bbg" x1="0" y1="0" x2="0" y2="1"><stop offset="0" stop-color="#a2a2a2"/><stop offset="1" stop-color="#6c6c6c"/></linearGradient>
<linearGradient id="cbg" x1="0" y1="0" x2="0" y2="1"><stop offset="0" stop-color="#9c9c9c"/><stop offset="1" stop-color="#6a6a6a"/></linearGradient>
<radialGradient id="cbc" cx="0.5" cy="0.3" r="0.8"><stop offset="0" stop-color="#6e6e6e"/><stop offset="1" stop-color="#8a8a8a"/></radialGradient>
<linearGradient id="bng" x1="0" y1="0" x2="0" y2="1"><stop offset="0" stop-color="#b4b4b4"/><stop offset="1" stop-color="#8c8c8c"/></linearGradient>
<filter id="ash" x="-30%" y="-30%" width="170%" height="170%"><feGaussianBlur stdDeviation="1.1"/></filter>
<linearGradient id="edg" x1="0" y1="0" x2="1" y2="0"><stop offset="0" stop-color="#1c1c1c00"/><stop offset="1" stop-color="#1c1c1c"/></linearGradient>
<linearGradient id="edgs" x1="0" y1="0" x2="1" y2="0"><stop offset="0" stop-color="#1a1a1a" stop-opacity="0"/><stop offset="1" stop-color="#1a1a1a" stop-opacity="0.95"/></linearGradient>
</defs>
<rect x="0" y="0" width="1670" height="984" fill="#333333"/>
<rect x="0" y="0" width="1670" height="38.4" fill="#242424"/>
<rect x="0" y="38" width="1.5" height="946" fill="#242424"/>
<path d="M1.5,38 V7 Q1.5,0.5 8,0.5 H109 Q115.5,0.5 115.5,7 V38" fill="url(#tabg)" stroke="#8a8a8a" stroke-width="1"/>
<line x1="74.5" y1="1" x2="74.5" y2="37" stroke="#6a6a6a" stroke-width="1"/>
<circle cx="93.5" cy="20" r="12" fill="url(#plusg)"/>
<text x="93.5" y="26" font-size="13" fill="#999" text-anchor="middle">+</text>
<text x="9" y="25.5" font-size="14.5" fill="#e6e6e6" textLength="58" lengthAdjust="spacingAndGlyphs">History 1</text>
<path d="M1056,37 V4 Q1056,0 1060,0 H1230 Q1234,0 1234,4 V37 Z" fill="url(#devg)"/>
<path d="M1056,37 V4 Q1056,0 1060,0 H1063.5 V37 Z" fill="#22cc22"/>
<circle cx="1165" cy="18.6" r="11.7" fill="url(#ddg)"/>
<path d="M1158.9,17.1 h12.3 l-6.15,6.4 z" fill="#fff"/>
<text x="1067" y="14.2" font-size="13.5" fill="#f0f0f0" textLength="81" lengthAdjust="spacingAndGlyphs">X-Rite i1Pro 3</text>
<text x="1067" y="33" font-size="13.5" fill="#f0f0f0" textLength="70" lengthAdjust="spacingAndGlyphs">Direct View</text>
<line x1="1189.5" y1="2" x2="1189.5" y2="37" stroke="#4a4a4a" stroke-width="1"/>
<circle cx="1215" cy="18.5" r="15.5" fill="#0000ee" stroke="#e8e8ff" stroke-width="1.2"/>
<text x="1215" y="22.6" font-size="11.5" fill="#fff" text-anchor="middle">677</text>
<path d="M1242,37 V4 Q1242,0 1246,0 H1400 Q1404,0 1404,4 V37 Z" fill="url(#devg)"/>
<path d="M1242,37 V4 Q1242,0 1246,0 H1249.5 V37 Z" fill="#22cc22"/>
<circle cx="1384" cy="18.6" r="11.7" fill="url(#ddg)"/>
<path d="M1377.9,17.1 h12.3 l-6.15,6.4 z" fill="#fff"/>
<text x="1253" y="14.2" font-size="13.5" fill="#f0f0f0" textLength="80" lengthAdjust="spacingAndGlyphs">Mobile Forge</text>
<path d="M1412.5,37 V4 Q1412.5,0 1416.5,0 H1587 Q1591,0 1591,4 V37 Z" fill="url(#devg)"/>
<path d="M1412.5,37 V4 Q1412.5,0 1416.5,0 H1420.0 V37 Z" fill="#e8e800"/>
<circle cx="1571" cy="18.6" r="11.7" fill="url(#ddg)"/>
<path d="M1564.9,17.1 h12.3 l-6.15,6.4 z" fill="#fff"/>
<text x="1423.5" y="14.2" font-size="13.5" fill="#f0f0f0" textLength="130" lengthAdjust="spacingAndGlyphs">Direct Display Control</text>
<rect x="1595.5" y="-4" width="41" height="38.5" rx="5" fill="url(#btng)" stroke="#a8a8a8"/>
<rect x="1638.5" y="-4" width="41" height="38.5" rx="5" fill="url(#btng)" stroke="#a8a8a8"/>
<circle cx="1616" cy="17" r="13" fill="url(#ddg)"/>
<circle cx="1659" cy="17" r="13" fill="url(#ddg)"/>
<g transform="translate(1616,17)"><rect x="-1.6" y="-8.4" width="3.2" height="4" transform="rotate(0)" fill="#cfcfcf"/><rect x="-1.6" y="-8.4" width="3.2" height="4" transform="rotate(45)" fill="#cfcfcf"/><rect x="-1.6" y="-8.4" width="3.2" height="4" transform="rotate(90)" fill="#cfcfcf"/><rect x="-1.6" y="-8.4" width="3.2" height="4" transform="rotate(135)" fill="#cfcfcf"/><rect x="-1.6" y="-8.4" width="3.2" height="4" transform="rotate(180)" fill="#cfcfcf"/><rect x="-1.6" y="-8.4" width="3.2" height="4" transform="rotate(225)" fill="#cfcfcf"/><rect x="-1.6" y="-8.4" width="3.2" height="4" transform="rotate(270)" fill="#cfcfcf"/><rect x="-1.6" y="-8.4" width="3.2" height="4" transform="rotate(315)" fill="#cfcfcf"/><circle r="4.6" fill="none" stroke="#cfcfcf" stroke-width="2.6"/></g>
<path d="M1658.5,10.8 v12.5 l-7.5,-6.25 z" fill="#fff"/>
<text x="10" y="124.7" font-size="39" fill="#f4f4f4" textLength="228" lengthAdjust="spacingAndGlyphs">Color Gamut</text>
<rect x="22" y="229.5" width="335" height="372.0" fill="#262626"/>
<line x1="65.5" y1="229.5" x2="65.5" y2="601.5" stroke="#8c8c8c" stroke-width="1"/>
<line x1="110.5" y1="229.5" x2="110.5" y2="601.5" stroke="#8c8c8c" stroke-width="1"/>
<line x1="155.5" y1="229.5" x2="155.5" y2="601.5" stroke="#8c8c8c" stroke-width="1"/>
<line x1="200.5" y1="229.5" x2="200.5" y2="601.5" stroke="#8c8c8c" stroke-width="1"/>
<line x1="245.5" y1="229.5" x2="245.5" y2="601.5" stroke="#8c8c8c" stroke-width="1"/>
<line x1="288.5" y1="229.5" x2="288.5" y2="601.5" stroke="#8c8c8c" stroke-width="1"/>
<line x1="333.5" y1="229.5" x2="333.5" y2="601.5" stroke="#8c8c8c" stroke-width="1"/>
<rect x="22" y="229.5" width="335" height="372.0" fill="none" stroke="#a0a0a0"/>
<line x1="21.5" y1="601.5" x2="21.5" y2="607.5" stroke="#a0a0a0" stroke-width="1"/>
<text x="21.9" y="624" font-size="14" fill="#d8d8d8" text-anchor="middle">0</text>
<line x1="65.5" y1="601.5" x2="65.5" y2="607.5" stroke="#a0a0a0" stroke-width="1"/>
<text x="65.4" y="624" font-size="14" fill="#d8d8d8" text-anchor="middle">2</text>
<line x1="110.5" y1="601.5" x2="110.5" y2="607.5" stroke="#a0a0a0" stroke-width="1"/>
<text x="110.2" y="624" font-size="14" fill="#d8d8d8" text-anchor="middle">4</text>
<line x1="155.5" y1="601.5" x2="155.5" y2="607.5" stroke="#a0a0a0" stroke-width="1"/>
<text x="155.5" y="624" font-size="14" fill="#d8d8d8" text-anchor="middle">6</text>
<line x1="200.5" y1="601.5" x2="200.5" y2="607.5" stroke="#a0a0a0" stroke-width="1"/>
<text x="200.1" y="624" font-size="14" fill="#d8d8d8" text-anchor="middle">8</text>
<line x1="245.5" y1="601.5" x2="245.5" y2="607.5" stroke="#a0a0a0" stroke-width="1"/>
<text x="245.4" y="624" font-size="14" fill="#d8d8d8" text-anchor="middle">10</text>
<line x1="288.5" y1="601.5" x2="288.5" y2="607.5" stroke="#a0a0a0" stroke-width="1"/>
<text x="288.5" y="624" font-size="14" fill="#d8d8d8" text-anchor="middle">12</text>
<line x1="333.5" y1="601.5" x2="333.5" y2="607.5" stroke="#a0a0a0" stroke-width="1"/>
<text x="333.3" y="624" font-size="14" fill="#d8d8d8" text-anchor="middle">14</text>
<text x="189" y="225.3" font-size="13.5" fill="#d8d8d8" text-anchor="middle" textLength="80" lengthAdjust="spacingAndGlyphs">DeltaE 2000</text>
<rect x="22.5" y="234.2" width="89.3" height="36" fill="url(#de0)" stroke="#000" stroke-width="1.2"/>
<rect x="22.5" y="280.8" width="34.9" height="36" fill="url(#de1)" stroke="#000" stroke-width="1.2"/>
<rect x="22.5" y="327.4" width="35.6" height="36" fill="url(#de2)" stroke="#000" stroke-width="1.2"/>
<rect x="22.5" y="374.0" width="30.2" height="36" fill="url(#de3)" stroke="#000" stroke-width="1.2"/>
<rect x="22.5" y="420.6" width="15.6" height="36" fill="url(#de4)" stroke="#000" stroke-width="1.2"/>
<rect x="22.5" y="467.2" width="6.4" height="36" fill="url(#de5)" stroke="#000" stroke-width="1.2"/>
<rect x="22.5" y="513.8" width="47.3" height="36" fill="url(#de6)" stroke="#000" stroke-width="1.2"/>
<rect x="22.5" y="560.4" width="76.0" height="36" fill="url(#de7)" stroke="#000" stroke-width="1.2"/>
<rect x="409.5" y="120.5" width="145.0" height="317.5" fill="#262626"/>
<line x1="404.5" y1="122.5" x2="554.5" y2="122.5" stroke="#b0b0b0" stroke-width="1"/>
<text x="403.5" y="127" font-size="14" fill="#d8d8d8" text-anchor="end">15</text>
<line x1="404.5" y1="175.5" x2="554.5" y2="175.5" stroke="#8c8c8c" stroke-width="1"/>
<text x="403.5" y="180.9" font-size="14" fill="#d8d8d8" text-anchor="end">10</text>
<line x1="404.5" y1="227.5" x2="554.5" y2="227.5" stroke="#8c8c8c" stroke-width="1"/>
<text x="403.5" y="233.1" font-size="14" fill="#d8d8d8" text-anchor="end">5</text>
<line x1="404.5" y1="280.5" x2="554.5" y2="280.5" stroke="#8c8c8c" stroke-width="1"/>
<text x="403.5" y="285.6" font-size="14" fill="#d8d8d8" text-anchor="end">0</text>
<line x1="404.5" y1="333.5" x2="554.5" y2="333.5" stroke="#8c8c8c" stroke-width="1"/>
<text x="403.5" y="339.20000000000005" font-size="14" fill="#d8d8d8" text-anchor="end">-5</text>
<line x1="404.5" y1="386.5" x2="554.5" y2="386.5" stroke="#8c8c8c" stroke-width="1"/>
<text x="403.5" y="391.90000000000003" font-size="14" fill="#d8d8d8" text-anchor="end">-10</text>
<line x1="404.5" y1="437.5" x2="409.5" y2="437.5" stroke="#a0a0a0" stroke-width="1"/>
<text x="403.5" y="444.8" font-size="14" fill="#d8d8d8" text-anchor="end">-15</text>
<rect x="409.5" y="120.5" width="145.0" height="317.5" fill="none" stroke="#a0a0a0"/>
<line x1="409.0" y1="437.5" x2="555.0" y2="437.5" stroke="#a0a0a0" stroke-width="1"/>
<line x1="410.5" y1="120.5" x2="410.5" y2="438" stroke="#8c8c8c" stroke-width="1" stroke-opacity="0.6"/>
<line x1="409.5" y1="438" x2="409.5" y2="443.5" stroke="#a0a0a0" stroke-width="1"/>
<line x1="554.5" y1="438" x2="554.5" y2="443.5" stroke="#a0a0a0" stroke-width="1"/>
<text x="446.40000000000003" y="116" font-size="13.5" fill="#d8d8d8" textLength="44.8" lengthAdjust="spacingAndGlyphs">Delta L</text>
<text x="482" y="454" font-size="14" fill="#d8d8d8" text-anchor="middle" textLength="37.5" lengthAdjust="spacingAndGlyphs">100W</text>
<line x1="424.5" y1="280.5" x2="539.5" y2="280.5" stroke="#1c1c1c" stroke-width="1.6"/>
<rect x="606.5" y="120.5" width="145.0" height="317.5" fill="#262626"/>
<line x1="601.5" y1="122.5" x2="751.5" y2="122.5" stroke="#b0b0b0" stroke-width="1"/>
<text x="600.5" y="127" font-size="14" fill="#d8d8d8" text-anchor="end">15</text>
<line x1="601.5" y1="175.5" x2="751.5" y2="175.5" stroke="#8c8c8c" stroke-width="1"/>
<text x="600.5" y="180.9" font-size="14" fill="#d8d8d8" text-anchor="end">10</text>
<line x1="601.5" y1="227.5" x2="751.5" y2="227.5" stroke="#8c8c8c" stroke-width="1"/>
<text x="600.5" y="233.1" font-size="14" fill="#d8d8d8" text-anchor="end">5</text>
<line x1="601.5" y1="280.5" x2="751.5" y2="280.5" stroke="#8c8c8c" stroke-width="1"/>
<text x="600.5" y="285.6" font-size="14" fill="#d8d8d8" text-anchor="end">0</text>
<line x1="601.5" y1="333.5" x2="751.5" y2="333.5" stroke="#8c8c8c" stroke-width="1"/>
<text x="600.5" y="339.20000000000005" font-size="14" fill="#d8d8d8" text-anchor="end">-5</text>
<line x1="601.5" y1="386.5" x2="751.5" y2="386.5" stroke="#8c8c8c" stroke-width="1"/>
<text x="600.5" y="391.90000000000003" font-size="14" fill="#d8d8d8" text-anchor="end">-10</text>
<line x1="601.5" y1="437.5" x2="606.5" y2="437.5" stroke="#a0a0a0" stroke-width="1"/>
<text x="600.5" y="444.8" font-size="14" fill="#d8d8d8" text-anchor="end">-15</text>
<rect x="606.5" y="120.5" width="145.0" height="317.5" fill="none" stroke="#a0a0a0"/>
<line x1="606.0" y1="437.5" x2="752.0" y2="437.5" stroke="#a0a0a0" stroke-width="1"/>
<line x1="607.5" y1="120.5" x2="607.5" y2="438" stroke="#8c8c8c" stroke-width="1" stroke-opacity="0.6"/>
<line x1="606.5" y1="438" x2="606.5" y2="443.5" stroke="#a0a0a0" stroke-width="1"/>
<line x1="751.5" y1="438" x2="751.5" y2="443.5" stroke="#a0a0a0" stroke-width="1"/>
<text x="642.45" y="116" font-size="13.5" fill="#d8d8d8" textLength="47.1" lengthAdjust="spacingAndGlyphs">Delta C</text>
<text x="679" y="454" font-size="14" fill="#d8d8d8" text-anchor="middle" textLength="37.5" lengthAdjust="spacingAndGlyphs">100W</text>
<rect x="622" y="240.5" width="115" height="39.5" fill="url(#dcb)" stroke="#000" stroke-width="1.2"/>
<rect x="804" y="120.5" width="145" height="317.5" fill="#262626"/>
<line x1="799" y1="122.5" x2="949" y2="122.5" stroke="#b0b0b0" stroke-width="1"/>
<text x="798" y="127" font-size="14" fill="#d8d8d8" text-anchor="end">15</text>
<line x1="799" y1="175.5" x2="949" y2="175.5" stroke="#8c8c8c" stroke-width="1"/>
<text x="798" y="180.9" font-size="14" fill="#d8d8d8" text-anchor="end">10</text>
<line x1="799" y1="227.5" x2="949" y2="227.5" stroke="#8c8c8c" stroke-width="1"/>
<text x="798" y="233.1" font-size="14" fill="#d8d8d8" text-anchor="end">5</text>
<line x1="799" y1="280.5" x2="949" y2="280.5" stroke="#8c8c8c" stroke-width="1"/>
<text x="798" y="285.6" font-size="14" fill="#d8d8d8" text-anchor="end">0</text>
<line x1="799" y1="333.5" x2="949" y2="333.5" stroke="#8c8c8c" stroke-width="1"/>
<text x="798" y="339.20000000000005" font-size="14" fill="#d8d8d8" text-anchor="end">-5</text>
<line x1="799" y1="386.5" x2="949" y2="386.5" stroke="#8c8c8c" stroke-width="1"/>
<text x="798" y="391.90000000000003" font-size="14" fill="#d8d8d8" text-anchor="end">-10</text>
<line x1="799" y1="437.5" x2="804" y2="437.5" stroke="#a0a0a0" stroke-width="1"/>
<text x="798" y="444.8" font-size="14" fill="#d8d8d8" text-anchor="end">-15</text>
<rect x="804" y="120.5" width="145" height="317.5" fill="none" stroke="#a0a0a0"/>
<line x1="803.5" y1="437.5" x2="949.5" y2="437.5" stroke="#a0a0a0" stroke-width="1"/>
<line x1="805" y1="120.5" x2="805" y2="438" stroke="#8c8c8c" stroke-width="1" stroke-opacity="0.6"/>
<line x1="804" y1="438" x2="804" y2="443.5" stroke="#a0a0a0" stroke-width="1"/>
<line x1="949" y1="438" x2="949" y2="443.5" stroke="#a0a0a0" stroke-width="1"/>
<text x="839.0500000000001" y="116" font-size="13.5" fill="#d8d8d8" textLength="48.3" lengthAdjust="spacingAndGlyphs">Delta H</text>
<text x="876" y="454" font-size="14" fill="#d8d8d8" text-anchor="middle" textLength="37.5" lengthAdjust="spacingAndGlyphs">100W</text>
<line x1="819" y1="280.5" x2="934" y2="280.5" stroke="#1c1c1c" stroke-width="1.6"/>
<rect x="376.5" y="470" width="592.5" height="164" fill="#000"/>
<rect x="395.2" y="478.5" width="60.6" height="66" fill="#bbc0c3"/>
<rect x="395.2" y="544" width="60.6" height="66" fill="#c0c0c0"/>
<rect x="395.2" y="478.5" width="60.6" height="131.5" fill="none" stroke="#fff" stroke-opacity="0.9"/>
<text x="425.5" y="624.8" font-size="13.5" fill="#fff" text-anchor="middle" textLength="32.1" lengthAdjust="spacingAndGlyphs">White</text>
<rect x="467.5" y="478.5" width="60.6" height="66" fill="#b80000"/>
<rect x="467.5" y="544" width="60.6" height="66" fill="#bf0c0c"/>
<rect x="467.5" y="478.5" width="60.6" height="131.5" fill="none" stroke="#fff" stroke-opacity="0.9"/>
<text x="497.8" y="624.8" font-size="13.5" fill="#fff" text-anchor="middle" textLength="23.0" lengthAdjust="spacingAndGlyphs">Red</text>
<rect x="539.8" y="478.5" width="60.6" height="66" fill="#00bf00"/>
<rect x="539.8" y="544" width="60.6" height="66" fill="#0abf0a"/>
<rect x="539.8" y="478.5" width="60.6" height="131.5" fill="none" stroke="#fff" stroke-opacity="0.9"/>
<text x="570.1" y="624.8" font-size="13.5" fill="#fff" text-anchor="middle" textLength="34.9" lengthAdjust="spacingAndGlyphs">Green</text>
<rect x="612.1" y="478.5" width="60.6" height="66" fill="#1505be"/>
<rect x="612.1" y="544" width="60.6" height="66" fill="#0000bf"/>
<rect x="612.1" y="478.5" width="60.6" height="131.5" fill="none" stroke="#fff" stroke-opacity="0.9"/>
<text x="642.4" y="624.8" font-size="13.5" fill="#fff" text-anchor="middle" textLength="25.1" lengthAdjust="spacingAndGlyphs">Blue</text>
<rect x="684.4" y="478.5" width="60.6" height="66" fill="#00bfc1"/>
<rect x="684.4" y="544" width="60.6" height="66" fill="#00bfbf"/>
<rect x="684.4" y="478.5" width="60.6" height="131.5" fill="none" stroke="#fff" stroke-opacity="0.9"/>
<text x="714.7" y="624.8" font-size="13.5" fill="#fff" text-anchor="middle" textLength="29.3" lengthAdjust="spacingAndGlyphs">Cyan</text>
<rect x="756.7" y="478.5" width="60.6" height="66" fill="#ba00c4"/>
<rect x="756.7" y="544" width="60.6" height="66" fill="#bf00bf"/>
<rect x="756.7" y="478.5" width="60.6" height="131.5" fill="none" stroke="#fff" stroke-opacity="0.9"/>
<text x="787.0" y="624.8" font-size="13.5" fill="#fff" text-anchor="middle" textLength="48.9" lengthAdjust="spacingAndGlyphs">Magenta</text>
<rect x="829.0" y="478.5" width="60.6" height="66" fill="#bebf00"/>
<rect x="829.0" y="544" width="60.6" height="66" fill="#bfbf00"/>
<rect x="829.0" y="478.5" width="60.6" height="131.5" fill="none" stroke="#fff" stroke-opacity="0.9"/>
<text x="859.3" y="624.8" font-size="13.5" fill="#fff" text-anchor="middle" textLength="35.8" lengthAdjust="spacingAndGlyphs">Yellow</text>
<rect x="901.3" y="478.5" width="60.6" height="66" fill="#f3f9ff"/>
<rect x="901.3" y="544" width="60.6" height="66" fill="#fafafa"/>
<rect x="901.3" y="478.5" width="60.6" height="131.5" fill="none" stroke="#fff" stroke-opacity="0.9"/>
<text x="931.6" y="624.8" font-size="13.5" fill="#fff" text-anchor="middle" textLength="32.8" lengthAdjust="spacingAndGlyphs">100W</text>
<text transform="translate(390,507) rotate(-90)" font-size="13" fill="#fff" text-anchor="middle">Actual</text>
<text transform="translate(390,580.5) rotate(-90)" font-size="13" fill="#fff" text-anchor="middle">Target</text>
<rect x="975.5" y="89" width="694.5" height="558" fill="#222222"/>
<rect x="982.5" y="96" width="680.8" height="544" fill="#333333"/>
<rect x="1019.8" y="119.5" width="639.6000000000001" height="492.0" fill="#262626"/>
<g clip-path="url(#cl)">
<rect x="1049" y="131" width="64" height="2.5" fill="url(#c0)"/>
<rect x="1041" y="133" width="96" height="2.5" fill="url(#c1)"/>
<rect x="1036" y="135" width="121" height="2.5" fill="url(#c2)"/>
<rect x="1033" y="137" width="143" height="2.5" fill="url(#c3)"/>
<rect x="1030" y="139" width="164" height="2.5" fill="url(#c4)"/>
<rect x="1028" y="141" width="184" height="2.5" fill="url(#c5)"/>
<rect x="1027" y="143" width="203" height="2.5" fill="url(#c6)"/>
<rect x="1025" y="145" width="222" height="2.5" fill="url(#c7)"/>
<rect x="1024" y="147" width="241" height="2.5" fill="url(#c8)"/>
<rect x="1023" y="149" width="259" height="2.5" fill="url(#c9)"/>
<rect x="1023" y="151" width="276" height="2.5" fill="url(#c10)"/>
<rect x="1022" y="153" width="295" height="2.5" fill="url(#c11)"/>
<rect x="1021" y="155" width="313" height="2.5" fill="url(#c12)"/>
<rect x="1021" y="157" width="331" height="2.5" fill="url(#c13)"/>
<rect x="1021" y="159" width="348" height="2.5" fill="url(#c14)"/>
<rect x="1020" y="161" width="367" height="2.5" fill="url(#c15)"/>
<rect x="1020" y="163" width="384" height="2.5" fill="url(#c16)"/>
<rect x="1020" y="165" width="401" height="2.5" fill="url(#c17)"/>
<rect x="1020" y="167" width="419" height="2.5" fill="url(#c18)"/>
<rect x="1020" y="169" width="436" height="2.5" fill="url(#c19)"/>
<rect x="1020" y="171" width="454" height="2.5" fill="url(#c20)"/>
<rect x="1020" y="173" width="471" height="2.5" fill="url(#c21)"/>
<rect x="1020" y="175" width="489" height="2.5" fill="url(#c22)"/>
<rect x="1020" y="177" width="506" height="2.5" fill="url(#c23)"/>
<rect x="1020" y="179" width="524" height="2.5" fill="url(#c24)"/>
<rect x="1021" y="181" width="540" height="2.5" fill="url(#c25)"/>
<rect x="1021" y="183" width="557" height="2.5" fill="url(#c26)"/>
<rect x="1021" y="185" width="575" height="2.5" fill="url(#c27)"/>
<rect x="1021" y="187" width="592" height="2.5" fill="url(#c28)"/>
<rect x="1022" y="189" width="609" height="2.5" fill="url(#c29)"/>
<rect x="1022" y="191" width="626" height="2.5" fill="url(#c30)"/>
<rect x="1022" y="193" width="640" height="2.5" fill="url(#c31)"/>
<rect x="1023" y="195" width="639" height="2.5" fill="url(#c32)"/>
<rect x="1023" y="197" width="639" height="2.5" fill="url(#c33)"/>
<rect x="1024" y="199" width="638" height="2.5" fill="url(#c34)"/>
<rect x="1024" y="201" width="638" height="2.5" fill="url(#c35)"/>
<rect x="1025" y="203" width="637" height="2.5" fill="url(#c36)"/>
<rect x="1025" y="205" width="637" height="2.5" fill="url(#c37)"/>
<rect x="1025" y="207" width="637" height="2.5" fill="url(#c38)"/>
<rect x="1026" y="209" width="636" height="2.5" fill="url(#c39)"/>
<rect x="1027" y="211" width="635" height="2.5" fill="url(#c40)"/>
<rect x="1027" y="213" width="635" height="2.5" fill="url(#c41)"/>
<rect x="1028" y="215" width="634" height="2.5" fill="url(#c42)"/>
<rect x="1028" y="217" width="634" height="2.5" fill="url(#c43)"/>
<rect x="1029" y="219" width="633" height="2.5" fill="url(#c44)"/>
<rect x="1029" y="221" width="633" height="2.5" fill="url(#c45)"/>
<rect x="1030" y="223" width="630" height="2.5" fill="url(#c46)"/>
<rect x="1031" y="225" width="627" height="2.5" fill="url(#c47)"/>
<rect x="1031" y="227" width="625" height="2.5" fill="url(#c48)"/>
<rect x="1032" y="229" width="623" height="2.5" fill="url(#c49)"/>
<rect x="1032" y="231" width="621" height="2.5" fill="url(#c50)"/>
<rect x="1033" y="233" width="618" height="2.5" fill="url(#c51)"/>
<rect x="1034" y="235" width="615" height="2.5" fill="url(#c52)"/>
<rect x="1034" y="237" width="613" height="2.5" fill="url(#c53)"/>
<rect x="1035" y="239" width="610" height="2.5" fill="url(#c54)"/>
<rect x="1036" y="241" width="607" height="2.5" fill="url(#c55)"/>
<rect x="1036" y="243" width="605" height="2.5" fill="url(#c56)"/>
<rect x="1037" y="245" width="602" height="2.5" fill="url(#c57)"/>
<rect x="1038" y="247" width="599" height="2.5" fill="url(#c58)"/>
<rect x="1039" y="249" width="596" height="2.5" fill="url(#c59)"/>
<rect x="1039" y="251" width="594" height="2.5" fill="url(#c60)"/>
<rect x="1040" y="253" width="591" height="2.5" fill="url(#c61)"/>
<rect x="1041" y="255" width="588" height="2.5" fill="url(#c62)"/>
<rect x="1042" y="257" width="585" height="2.5" fill="url(#c63)"/>
<rect x="1042" y="259" width="583" height="2.5" fill="url(#c64)"/>
<rect x="1043" y="261" width="580" height="2.5" fill="url(#c65)"/>
<rect x="1044" y="263" width="577" height="2.5" fill="url(#c66)"/>
<rect x="1045" y="265" width="574" height="2.5" fill="url(#c67)"/>
<rect x="1045" y="267" width="573" height="2.5" fill="url(#c68)"/>
<rect x="1046" y="269" width="570" height="2.5" fill="url(#c69)"/>
<rect x="1047" y="271" width="567" height="2.5" fill="url(#c70)"/>
<rect x="1048" y="273" width="564" height="2.5" fill="url(#c71)"/>
<rect x="1049" y="275" width="561" height="2.5" fill="url(#c72)"/>
<rect x="1049" y="277" width="559" height="2.5" fill="url(#c73)"/>
<rect x="1050" y="279" width="556" height="2.5" fill="url(#c74)"/>
<rect x="1051" y="281" width="553" height="2.5" fill="url(#c75)"/>
<rect x="1052" y="283" width="550" height="2.5" fill="url(#c76)"/>
<rect x="1053" y="285" width="547" height="2.5" fill="url(#c77)"/>
<rect x="1054" y="287" width="544" height="2.5" fill="url(#c78)"/>
<rect x="1054" y="289" width="542" height="2.5" fill="url(#c79)"/>
<rect x="1055" y="291" width="539" height="2.5" fill="url(#c80)"/>
<rect x="1056" y="293" width="536" height="2.5" fill="url(#c81)"/>
<rect x="1057" y="295" width="533" height="2.5" fill="url(#c82)"/>
<rect x="1058" y="297" width="530" height="2.5" fill="url(#c83)"/>
<rect x="1059" y="299" width="527" height="2.5" fill="url(#c84)"/>
<rect x="1060" y="301" width="524" height="2.5" fill="url(#c85)"/>
<rect x="1061" y="303" width="521" height="2.5" fill="url(#c86)"/>
<rect x="1062" y="305" width="518" height="2.5" fill="url(#c87)"/>
<rect x="1062" y="307" width="517" height="2.5" fill="url(#c88)"/>
<rect x="1063" y="309" width="514" height="2.5" fill="url(#c89)"/>
<rect x="1064" y="311" width="511" height="2.5" fill="url(#c90)"/>
<rect x="1065" y="313" width="508" height="2.5" fill="url(#c91)"/>
<rect x="1066" y="315" width="505" height="2.5" fill="url(#c92)"/>
<rect x="1067" y="317" width="502" height="2.5" fill="url(#c93)"/>
<rect x="1068" y="319" width="499" height="2.5" fill="url(#c94)"/>
<rect x="1069" y="321" width="496" height="2.5" fill="url(#c95)"/>
<rect x="1070" y="323" width="493" height="2.5" fill="url(#c96)"/>
<rect x="1071" y="325" width="490" height="2.5" fill="url(#c97)"/>
<rect x="1072" y="327" width="487" height="2.5" fill="url(#c98)"/>
<rect x="1073" y="329" width="484" height="2.5" fill="url(#c99)"/>
<rect x="1074" y="331" width="481" height="2.5" fill="url(#c100)"/>
<rect x="1075" y="333" width="478" height="2.5" fill="url(#c101)"/>
<rect x="1076" y="335" width="475" height="2.5" fill="url(#c102)"/>
<rect x="1077" y="337" width="472" height="2.5" fill="url(#c103)"/>
<rect x="1078" y="339" width="469" height="2.5" fill="url(#c104)"/>
<rect x="1079" y="341" width="466" height="2.5" fill="url(#c105)"/>
<rect x="1080" y="343" width="463" height="2.5" fill="url(#c106)"/>
<rect x="1081" y="345" width="461" height="2.5" fill="url(#c107)"/>
<rect x="1082" y="347" width="458" height="2.5" fill="url(#c108)"/>
<rect x="1083" y="349" width="455" height="2.5" fill="url(#c109)"/>
<rect x="1084" y="351" width="452" height="2.5" fill="url(#c110)"/>
<rect x="1086" y="353" width="448" height="2.5" fill="url(#c111)"/>
<rect x="1087" y="355" width="445" height="2.5" fill="url(#c112)"/>
<rect x="1088" y="357" width="442" height="2.5" fill="url(#c113)"/>
<rect x="1089" y="359" width="439" height="2.5" fill="url(#c114)"/>
<rect x="1090" y="361" width="436" height="2.5" fill="url(#c115)"/>
<rect x="1091" y="363" width="433" height="2.5" fill="url(#c116)"/>
<rect x="1092" y="365" width="430" height="2.5" fill="url(#c117)"/>
<rect x="1093" y="367" width="427" height="2.5" fill="url(#c118)"/>
<rect x="1094" y="369" width="424" height="2.5" fill="url(#c119)"/>
<rect x="1096" y="371" width="420" height="2.5" fill="url(#c120)"/>
<rect x="1097" y="373" width="417" height="2.5" fill="url(#c121)"/>
<rect x="1098" y="375" width="414" height="2.5" fill="url(#c122)"/>
<rect x="1099" y="377" width="411" height="2.5" fill="url(#c123)"/>
<rect x="1100" y="379" width="408" height="2.5" fill="url(#c124)"/>
<rect x="1101" y="381" width="405" height="2.5" fill="url(#c125)"/>
<rect x="1103" y="383" width="402" height="2.5" fill="url(#c126)"/>
<rect x="1104" y="385" width="399" height="2.5" fill="url(#c127)"/>
<rect x="1105" y="387" width="396" height="2.5" fill="url(#c128)"/>
<rect x="1106" y="389" width="393" height="2.5" fill="url(#c129)"/>
<rect x="1107" y="391" width="390" height="2.5" fill="url(#c130)"/>
<rect x="1108" y="393" width="387" height="2.5" fill="url(#c131)"/>
<rect x="1110" y="395" width="383" height="2.5" fill="url(#c132)"/>
<rect x="1111" y="397" width="380" height="2.5" fill="url(#c133)"/>
<rect x="1112" y="399" width="377" height="2.5" fill="url(#c134)"/>
<rect x="1113" y="401" width="374" height="2.5" fill="url(#c135)"/>
<rect x="1115" y="403" width="370" height="2.5" fill="url(#c136)"/>
<rect x="1116" y="405" width="367" height="2.5" fill="url(#c137)"/>
<rect x="1117" y="407" width="364" height="2.5" fill="url(#c138)"/>
<rect x="1118" y="409" width="361" height="2.5" fill="url(#c139)"/>
<rect x="1119" y="411" width="358" height="2.5" fill="url(#c140)"/>
<rect x="1121" y="413" width="354" height="2.5" fill="url(#c141)"/>
<rect x="1122" y="415" width="351" height="2.5" fill="url(#c142)"/>
<rect x="1123" y="417" width="348" height="2.5" fill="url(#c143)"/>
<rect x="1124" y="419" width="345" height="2.5" fill="url(#c144)"/>
<rect x="1126" y="421" width="342" height="2.5" fill="url(#c145)"/>
<rect x="1127" y="423" width="339" height="2.5" fill="url(#c146)"/>
<rect x="1128" y="425" width="336" height="2.5" fill="url(#c147)"/>
<rect x="1129" y="427" width="333" height="2.5" fill="url(#c148)"/>
<rect x="1131" y="429" width="329" height="2.5" fill="url(#c149)"/>
<rect x="1132" y="431" width="326" height="2.5" fill="url(#c150)"/>
<rect x="1133" y="433" width="323" height="2.5" fill="url(#c151)"/>
<rect x="1134" y="435" width="320" height="2.5" fill="url(#c152)"/>
<rect x="1136" y="437" width="316" height="2.5" fill="url(#c153)"/>
<rect x="1137" y="439" width="313" height="2.5" fill="url(#c154)"/>
<rect x="1138" y="441" width="310" height="2.5" fill="url(#c155)"/>
<rect x="1140" y="443" width="306" height="2.5" fill="url(#c156)"/>
<rect x="1141" y="445" width="303" height="2.5" fill="url(#c157)"/>
<rect x="1142" y="447" width="300" height="2.5" fill="url(#c158)"/>
<rect x="1144" y="449" width="296" height="2.5" fill="url(#c159)"/>
<rect x="1145" y="451" width="293" height="2.5" fill="url(#c160)"/>
<rect x="1146" y="453" width="290" height="2.5" fill="url(#c161)"/>
<rect x="1148" y="455" width="286" height="2.5" fill="url(#c162)"/>
<rect x="1149" y="457" width="283" height="2.5" fill="url(#c163)"/>
<rect x="1151" y="459" width="280" height="2.5" fill="url(#c164)"/>
<rect x="1152" y="461" width="277" height="2.5" fill="url(#c165)"/>
<rect x="1154" y="463" width="273" height="2.5" fill="url(#c166)"/>
<rect x="1155" y="465" width="270" height="2.5" fill="url(#c167)"/>
<rect x="1156" y="467" width="267" height="2.5" fill="url(#c168)"/>
<rect x="1158" y="469" width="263" height="2.5" fill="url(#c169)"/>
<rect x="1159" y="471" width="260" height="2.5" fill="url(#c170)"/>
<rect x="1161" y="473" width="256" height="2.5" fill="url(#c171)"/>
<rect x="1162" y="475" width="253" height="2.5" fill="url(#c172)"/>
<rect x="1164" y="477" width="249" height="2.5" fill="url(#c173)"/>
<rect x="1165" y="479" width="246" height="2.5" fill="url(#c174)"/>
<rect x="1167" y="481" width="242" height="2.5" fill="url(#c175)"/>
<rect x="1168" y="483" width="239" height="2.5" fill="url(#c176)"/>
<rect x="1170" y="485" width="235" height="2.5" fill="url(#c177)"/>
<rect x="1171" y="487" width="232" height="2.5" fill="url(#c178)"/>
<rect x="1173" y="489" width="228" height="2.5" fill="url(#c179)"/>
<rect x="1174" y="491" width="225" height="2.5" fill="url(#c180)"/>
<rect x="1176" y="493" width="221" height="2.5" fill="url(#c181)"/>
<rect x="1177" y="495" width="218" height="2.5" fill="url(#c182)"/>
<rect x="1179" y="497" width="215" height="2.5" fill="url(#c183)"/>
<rect x="1181" y="499" width="211" height="2.5" fill="url(#c184)"/>
<rect x="1182" y="501" width="208" height="2.5" fill="url(#c185)"/>
<rect x="1184" y="503" width="204" height="2.5" fill="url(#c186)"/>
<rect x="1186" y="505" width="200" height="2.5" fill="url(#c187)"/>
<rect x="1187" y="507" width="197" height="2.5" fill="url(#c188)"/>
<rect x="1189" y="509" width="193" height="2.5" fill="url(#c189)"/>
<rect x="1191" y="511" width="189" height="2.5" fill="url(#c190)"/>
<rect x="1192" y="513" width="186" height="2.5" fill="url(#c191)"/>
<rect x="1194" y="515" width="182" height="2.5" fill="url(#c192)"/>
<rect x="1196" y="517" width="178" height="2.5" fill="url(#c193)"/>
<rect x="1198" y="519" width="174" height="2.5" fill="url(#c194)"/>
<rect x="1199" y="521" width="171" height="2.5" fill="url(#c195)"/>
<rect x="1201" y="523" width="167" height="2.5" fill="url(#c196)"/>
<rect x="1203" y="525" width="163" height="2.5" fill="url(#c197)"/>
<rect x="1205" y="527" width="159" height="2.5" fill="url(#c198)"/>
<rect x="1207" y="529" width="155" height="2.5" fill="url(#c199)"/>
<rect x="1209" y="531" width="151" height="2.5" fill="url(#c200)"/>
<rect x="1211" y="533" width="147" height="2.5" fill="url(#c201)"/>
<rect x="1213" y="535" width="144" height="2.5" fill="url(#c202)"/>
<rect x="1215" y="537" width="140" height="2.5" fill="url(#c203)"/>
<rect x="1217" y="539" width="136" height="2.5" fill="url(#c204)"/>
<rect x="1219" y="541" width="132" height="2.5" fill="url(#c205)"/>
<rect x="1221" y="543" width="128" height="2.5" fill="url(#c206)"/>
<rect x="1223" y="545" width="124" height="2.5" fill="url(#c207)"/>
<rect x="1226" y="547" width="119" height="2.5" fill="url(#c208)"/>
<rect x="1228" y="549" width="115" height="2.5" fill="url(#c209)"/>
<rect x="1230" y="551" width="111" height="2.5" fill="url(#c210)"/>
<rect x="1232" y="553" width="107" height="2.5" fill="url(#c211)"/>
<rect x="1235" y="555" width="102" height="2.5" fill="url(#c212)"/>
<rect x="1237" y="557" width="98" height="2.5" fill="url(#c213)"/>
<rect x="1239" y="559" width="94" height="2.5" fill="url(#c214)"/>
<rect x="1242" y="561" width="89" height="2.5" fill="url(#c215)"/>
<rect x="1244" y="563" width="85" height="2.5" fill="url(#c216)"/>
<rect x="1247" y="565" width="80" height="2.5" fill="url(#c217)"/>
<rect x="1249" y="567" width="76" height="2.5" fill="url(#c218)"/>
<rect x="1252" y="569" width="71" height="2.5" fill="url(#c219)"/>
<rect x="1254" y="571" width="67" height="2.5" fill="url(#c220)"/>
<rect x="1256" y="573" width="64" height="2.5" fill="url(#c221)"/>
<rect x="1259" y="575" width="59" height="2.5" fill="url(#c222)"/>
<rect x="1261" y="577" width="55" height="2.5" fill="url(#c223)"/>
<rect x="1264" y="579" width="50" height="2.5" fill="url(#c224)"/>
<rect x="1266" y="581" width="46" height="2.5" fill="url(#c225)"/>
<rect x="1268" y="583" width="42" height="2.5" fill="url(#c226)"/>
<rect x="1271" y="585" width="37" height="2.5" fill="url(#c227)"/>
<rect x="1273" y="587" width="33" height="2.5" fill="url(#c228)"/>
<rect x="1275" y="589" width="29" height="2.5" fill="url(#c229)"/>
<rect x="1278" y="591" width="24" height="2.5" fill="url(#c230)"/>
<rect x="1280" y="593" width="20" height="2.5" fill="url(#c231)"/>
<rect x="1283" y="595" width="15" height="2.5" fill="url(#c232)"/>
<rect x="1286" y="597" width="10" height="2.5" fill="url(#c233)"/>
</g>
<path d="M1293.4,598.1 L1293.3,598.1 L1293.2,598.1 L1293.1,598.1 L1293.0,598.2 L1292.9,598.3 L1292.7,598.2 L1292.5,598.2 L1292.4,598.3 L1292.3,598.5 L1292.2,598.6 L1292.0,598.6 L1291.8,598.6 L1291.5,598.6 L1291.1,598.6 L1290.8,598.6 L1290.5,598.6 L1290.1,598.5 L1289.7,598.4 L1289.2,598.2 L1288.4,597.8 L1287.4,597.2 L1286.3,596.4 L1285.0,595.5 L1283.6,594.4 L1281.9,593.1 L1279.9,591.6 L1277.7,589.8 L1275.3,587.8 L1272.7,585.5 L1269.8,583.1 L1266.6,580.4 L1263.1,577.5 L1259.1,574.2 L1254.8,570.6 L1250.0,566.6 L1244.8,562.4 L1239.3,557.8 L1233.2,552.6 L1226.7,546.8 L1219.7,540.3 L1212.2,533.2 L1204.2,524.8 L1195.1,514.8 L1184.7,502.4 L1173.3,488.1 L1161.2,472.0 L1148.5,454.0 L1135.2,434.2 L1121.7,412.7 L1108.0,390.1 L1094.5,366.8 L1081.5,343.1 L1069.5,319.5 L1059.0,296.7 L1049.8,274.9 L1041.8,254.4 L1035.2,235.8 L1030.0,219.2 L1026.2,204.7 L1023.5,191.9 L1021.9,180.9 L1021.3,171.5 L1021.6,163.4 L1022.7,156.4 L1024.7,150.4 L1027.5,145.4 L1030.9,141.3 L1035.0,138.2 L1039.5,135.8 L1044.4,134.2 L1049.7,133.1 L1055.3,132.4 L1061.1,132.0 L1067.1,131.7 L1073.1,131.6 L1079.2,131.6 L1085.2,131.7 L1091.4,131.9 L1097.7,132.2 L1104.2,132.6 L1110.8,133.0 L1117.7,133.5 L1124.8,134.1 L1132.2,134.7 L1139.8,135.5 L1147.8,136.2 L1156.0,137.1 L1164.6,138.0 L1173.5,138.9 L1182.9,140.0 L1192.6,141.0 L1202.7,142.1 L1213.2,143.3 L1224.1,144.6 L1235.5,145.9 L1247.4,147.2 L1259.7,148.6 L1272.4,150.1 L1285.6,151.6 L1299.2,153.2 L1313.2,154.8 L1327.6,156.4 L1342.4,158.1 L1357.5,159.8 L1372.8,161.6 L1388.4,163.4 L1404.1,165.2 L1419.5,167.0 L1434.6,168.7 L1449.5,170.4 L1464.5,172.1 L1479.1,173.8 L1493.2,175.4 L1506.6,177.0 L1519.4,178.4 L1531.7,179.8 L1543.2,181.2 L1554.1,182.4 L1564.3,183.6 L1573.8,184.7 L1582.7,185.7 L1590.9,186.6 L1598.6,187.5 L1605.7,188.3 L1612.5,189.1 L1618.9,189.8 L1624.9,190.5 L1630.6,191.2 L1635.8,191.8 L1640.7,192.3 L1645.2,192.9 L1649.4,193.3 L1653.1,193.8 L1656.4,194.1 L1659.3,194.5 L1662.0,194.8 L1664.5,195.1 L1666.6,195.3 L1668.6,195.5 L1670.3,195.7 L1671.7,195.9 L1672.9,196.0 L1674.0,196.2 L1675.0,196.3 L1676.0,196.4 L1676.9,196.5 L1677.7,196.6 L1678.4,196.7 L1679.3,196.8 L1680.0,196.9 L1680.8,197.0 L1681.5,197.0 L1682.1,197.1 L1682.5,197.2 L1682.8,197.2 L1683.1,197.2 L1683.3,197.2 L1683.5,197.3 L1683.6,197.3 L1683.7,197.3 Z M1499.8,183.9 L1152.9,151.5 L1206.6,482.4 Z" fill="#000" fill-opacity="0.4" fill-rule="evenodd" clip-path="url(#cp)"/>
<rect x="1019.8" y="119.5" width="639.6000000000001" height="492.0" fill="none" stroke="#a0a0a0"/>
<text x="1280.6" y="113.8" font-size="13.8" fill="#d8d8d8" textLength="84" lengthAdjust="spacingAndGlyphs">CIE 1976 u'v'</text>
<line x1="1019.5" y1="611.5" x2="1019.5" y2="617.5" stroke="#a0a0a0" stroke-width="1"/>
<text x="1019.8" y="632.5" font-size="13" fill="#d8d8d8" text-anchor="middle" textLength="8.0" lengthAdjust="spacingAndGlyphs">0</text>
<line x1="1014.8" y1="611.5" x2="1019.8" y2="611.5" stroke="#a0a0a0" stroke-width="1"/>
<text x="1012.8" y="617.9" font-size="13" fill="#d8d8d8" text-anchor="end" textLength="8.0" lengthAdjust="spacingAndGlyphs">0</text>
<line x1="1073.5" y1="611.5" x2="1073.5" y2="617.5" stroke="#a0a0a0" stroke-width="1"/>
<text x="1073.05" y="632.5" font-size="13" fill="#d8d8d8" text-anchor="middle" textLength="27.8" lengthAdjust="spacingAndGlyphs">0,05</text>
<line x1="1014.8" y1="570.5" x2="1019.8" y2="570.5" stroke="#a0a0a0" stroke-width="1"/>
<text x="1012.8" y="577.0" font-size="13" fill="#d8d8d8" text-anchor="end" textLength="27.8" lengthAdjust="spacingAndGlyphs">0,05</text>
<line x1="1126.5" y1="611.5" x2="1126.5" y2="617.5" stroke="#a0a0a0" stroke-width="1"/>
<text x="1126.3" y="632.5" font-size="13" fill="#d8d8d8" text-anchor="middle" textLength="19.9" lengthAdjust="spacingAndGlyphs">0,1</text>
<line x1="1014.8" y1="529.5" x2="1019.8" y2="529.5" stroke="#a0a0a0" stroke-width="1"/>
<text x="1012.8" y="536.0999999999999" font-size="13" fill="#d8d8d8" text-anchor="end" textLength="19.9" lengthAdjust="spacingAndGlyphs">0,1</text>
<line x1="1179.5" y1="611.5" x2="1179.5" y2="617.5" stroke="#a0a0a0" stroke-width="1"/>
<text x="1179.55" y="632.5" font-size="13" fill="#d8d8d8" text-anchor="middle" textLength="27.8" lengthAdjust="spacingAndGlyphs">0,15</text>
<line x1="1014.8" y1="488.5" x2="1019.8" y2="488.5" stroke="#a0a0a0" stroke-width="1"/>
<text x="1012.8" y="495.2" font-size="13" fill="#d8d8d8" text-anchor="end" textLength="27.8" lengthAdjust="spacingAndGlyphs">0,15</text>
<line x1="1232.5" y1="611.5" x2="1232.5" y2="617.5" stroke="#a0a0a0" stroke-width="1"/>
<text x="1232.8" y="632.5" font-size="13" fill="#d8d8d8" text-anchor="middle" textLength="19.9" lengthAdjust="spacingAndGlyphs">0,2</text>
<line x1="1014.8" y1="448.5" x2="1019.8" y2="448.5" stroke="#a0a0a0" stroke-width="1"/>
<text x="1012.8" y="454.3" font-size="13" fill="#d8d8d8" text-anchor="end" textLength="19.9" lengthAdjust="spacingAndGlyphs">0,2</text>
<line x1="1286.5" y1="611.5" x2="1286.5" y2="617.5" stroke="#a0a0a0" stroke-width="1"/>
<text x="1286.05" y="632.5" font-size="13" fill="#d8d8d8" text-anchor="middle" textLength="27.8" lengthAdjust="spacingAndGlyphs">0,25</text>
<line x1="1014.8" y1="407.5" x2="1019.8" y2="407.5" stroke="#a0a0a0" stroke-width="1"/>
<text x="1012.8" y="413.40000000000003" font-size="13" fill="#d8d8d8" text-anchor="end" textLength="27.8" lengthAdjust="spacingAndGlyphs">0,25</text>
<line x1="1339.5" y1="611.5" x2="1339.5" y2="617.5" stroke="#a0a0a0" stroke-width="1"/>
<text x="1339.3" y="632.5" font-size="13" fill="#d8d8d8" text-anchor="middle" textLength="19.9" lengthAdjust="spacingAndGlyphs">0,3</text>
<line x1="1014.8" y1="366.5" x2="1019.8" y2="366.5" stroke="#a0a0a0" stroke-width="1"/>
<text x="1012.8" y="372.5" font-size="13" fill="#d8d8d8" text-anchor="end" textLength="19.9" lengthAdjust="spacingAndGlyphs">0,3</text>
<line x1="1392.5" y1="611.5" x2="1392.5" y2="617.5" stroke="#a0a0a0" stroke-width="1"/>
<text x="1392.55" y="632.5" font-size="13" fill="#d8d8d8" text-anchor="middle" textLength="27.8" lengthAdjust="spacingAndGlyphs">0,35</text>
<line x1="1014.8" y1="325.5" x2="1019.8" y2="325.5" stroke="#a0a0a0" stroke-width="1"/>
<text x="1012.8" y="331.6" font-size="13" fill="#d8d8d8" text-anchor="end" textLength="27.8" lengthAdjust="spacingAndGlyphs">0,35</text>
<line x1="1445.5" y1="611.5" x2="1445.5" y2="617.5" stroke="#a0a0a0" stroke-width="1"/>
<text x="1445.8" y="632.5" font-size="13" fill="#d8d8d8" text-anchor="middle" textLength="19.9" lengthAdjust="spacingAndGlyphs">0,4</text>
<line x1="1014.8" y1="284.5" x2="1019.8" y2="284.5" stroke="#a0a0a0" stroke-width="1"/>
<text x="1012.8" y="290.7" font-size="13" fill="#d8d8d8" text-anchor="end" textLength="19.9" lengthAdjust="spacingAndGlyphs">0,4</text>
<line x1="1499.5" y1="611.5" x2="1499.5" y2="617.5" stroke="#a0a0a0" stroke-width="1"/>
<text x="1499.05" y="632.5" font-size="13" fill="#d8d8d8" text-anchor="middle" textLength="27.8" lengthAdjust="spacingAndGlyphs">0,45</text>
<line x1="1014.8" y1="243.5" x2="1019.8" y2="243.5" stroke="#a0a0a0" stroke-width="1"/>
<text x="1012.8" y="249.8" font-size="13" fill="#d8d8d8" text-anchor="end" textLength="27.8" lengthAdjust="spacingAndGlyphs">0,45</text>
<line x1="1552.5" y1="611.5" x2="1552.5" y2="617.5" stroke="#a0a0a0" stroke-width="1"/>
<text x="1552.3" y="632.5" font-size="13" fill="#d8d8d8" text-anchor="middle" textLength="19.9" lengthAdjust="spacingAndGlyphs">0,5</text>
<line x1="1014.8" y1="202.5" x2="1019.8" y2="202.5" stroke="#a0a0a0" stroke-width="1"/>
<text x="1012.8" y="208.90000000000003" font-size="13" fill="#d8d8d8" text-anchor="end" textLength="19.9" lengthAdjust="spacingAndGlyphs">0,5</text>
<line x1="1605.5" y1="611.5" x2="1605.5" y2="617.5" stroke="#a0a0a0" stroke-width="1"/>
<text x="1605.55" y="632.5" font-size="13" fill="#d8d8d8" text-anchor="middle" textLength="27.8" lengthAdjust="spacingAndGlyphs">0,55</text>
<line x1="1014.8" y1="161.5" x2="1019.8" y2="161.5" stroke="#a0a0a0" stroke-width="1"/>
<text x="1012.8" y="168.0" font-size="13" fill="#d8d8d8" text-anchor="end" textLength="27.8" lengthAdjust="spacingAndGlyphs">0,55</text>
<rect x="1222.9" y="219.9" width="13" height="13" fill="#fff" stroke="#000" stroke-width="2"/>
<rect x="1493.3" y="175.6" width="14" height="14" fill="none" stroke="#fff" stroke-opacity="0.92" stroke-width="1.3"/>
<rect x="1145.8" y="143.0" width="14" height="14" fill="none" stroke="#fff" stroke-opacity="0.92" stroke-width="1.3"/>
<rect x="1199.6" y="475.6" width="14" height="14" fill="none" stroke="#fff" stroke-opacity="0.92" stroke-width="1.3"/>
<rect x="1160.0" y="231.0" width="14" height="14" fill="none" stroke="#fff" stroke-opacity="0.92" stroke-width="1.3"/>
<rect x="1337.8" y="334.3" width="14" height="14" fill="none" stroke="#fff" stroke-opacity="0.92" stroke-width="1.3"/>
<rect x="1230.0" y="150.9" width="14" height="14" fill="none" stroke="#fff" stroke-opacity="0.92" stroke-width="1.3"/>
<circle cx="1226.1" cy="230.2" r="3.4" fill="#ffffff" stroke="#000" stroke-opacity="0.85" stroke-width="1.1"/>
<circle cx="1505.8" cy="181.1" r="3.8" fill="#d00000" stroke="#000" stroke-opacity="0.85" stroke-width="1.1"/>
<circle cx="1152.5" cy="149.6" r="4.4" fill="#00a000" stroke="#000" stroke-opacity="0.85" stroke-width="1.1"/>
<circle cx="1209.6" cy="477.1" r="3.6" fill="#0c00b8" stroke="#000" stroke-opacity="0.85" stroke-width="1.1"/>
<circle cx="1167.4" cy="240.9" r="3.8" fill="#00b4b4" stroke="#000" stroke-opacity="0.85" stroke-width="1.1"/>
<circle cx="1336.1" cy="350.2" r="3.8" fill="#a800b0" stroke="#000" stroke-opacity="0.85" stroke-width="1.1"/>
<circle cx="1232.1" cy="157.4" r="3.5" fill="#b4b400" stroke="#000" stroke-opacity="0.85" stroke-width="1.1"/>
<rect x="1404" y="579.3" width="252.5" height="26.5" fill="#303030"/>
<text x="1405" y="601" font-size="19.5" fill="#f4f4f4" textLength="222" lengthAdjust="spacingAndGlyphs">Gamut Coverage:  99,6%</text>
<text x="16" y="713.2" font-size="29" fill="#f4f4f4" textLength="218.5" lengthAdjust="spacingAndGlyphs">Current Reading</text>
<text x="16" y="783" font-size="25" fill="#f4f4f4" textLength="103" lengthAdjust="spacingAndGlyphs">x: 0,3049</text>
<text x="173" y="783" font-size="25" fill="#f4f4f4" textLength="102.5" lengthAdjust="spacingAndGlyphs">y: 0,3253</text>
<text x="16" y="824.4" font-size="25" fill="#f4f4f4" textLength="110.5" lengthAdjust="spacingAndGlyphs">fL: 122,72</text>
<text x="16" y="864.6" font-size="25" fill="#f4f4f4" textLength="159.5" lengthAdjust="spacingAndGlyphs">cd/m²: 420,48</text>
<rect x="358.5" y="685.5" width="250.0" height="181.0" fill="#262626"/>
<line x1="353.5" y1="704.5" x2="608.5" y2="704.5" stroke="#8c8c8c" stroke-width="1"/>
<text x="351.5" y="710.0" font-size="14" fill="#d8d8d8" text-anchor="end">104</text>
<line x1="353.5" y1="741.5" x2="608.5" y2="741.5" stroke="#8c8c8c" stroke-width="1"/>
<text x="351.5" y="746.5" font-size="14" fill="#d8d8d8" text-anchor="end">102</text>
<line x1="353.5" y1="778.5" x2="608.5" y2="778.5" stroke="#8c8c8c" stroke-width="1"/>
<text x="351.5" y="783.0" font-size="14" fill="#d8d8d8" text-anchor="end">100</text>
<line x1="353.5" y1="814.5" x2="608.5" y2="814.5" stroke="#8c8c8c" stroke-width="1"/>
<text x="351.5" y="819.0" font-size="14" fill="#d8d8d8" text-anchor="end">98</text>
<line x1="353.5" y1="850.5" x2="608.5" y2="850.5" stroke="#8c8c8c" stroke-width="1"/>
<text x="351.5" y="855.0" font-size="14" fill="#d8d8d8" text-anchor="end">96</text>
<path d="M358.5,871.5 V685.5 H608.5 V871.5" fill="none" stroke="#a0a0a0"/>
<line x1="358.5" y1="867.0" x2="608.5" y2="867.0" stroke="#a0a0a0" stroke-width="1"/>
<text x="468.5" y="681" font-size="13.5" fill="#d8d8d8" text-anchor="middle">RGB Balance</text>
<text x="483" y="882.8" font-size="14" fill="#d8d8d8" text-anchor="middle" textLength="37.5" lengthAdjust="spacingAndGlyphs">100W</text>
<rect x="383.5" y="823.5" width="65.0" height="43.5" fill="url(#rbR)" stroke="#000" stroke-width="1.2"/>
<rect x="449.5" y="766.5" width="65.5" height="100.5" fill="url(#rbG)" stroke="#000" stroke-width="1.2"/>
<rect x="516" y="743.5" width="65.5" height="123.5" fill="url(#rbB)" stroke="#000" stroke-width="1.2"/>
<line x1="358.5" y1="867.0" x2="608.5" y2="867.0" stroke="#a0a0a0" stroke-width="1"/>
<text x="808.5" y="672" font-size="13.5" fill="#d8d8d8" text-anchor="middle">CIE 1931 xy</text>
<rect x="638.5" y="677.0" width="341" height="6.5" fill="url(#m0)"/>
<rect x="638.5" y="683.0" width="341" height="6.5" fill="url(#m1)"/>
<rect x="638.5" y="689.0" width="341" height="6.5" fill="url(#m2)"/>
<rect x="638.5" y="695.0" width="341" height="6.5" fill="url(#m3)"/>
<rect x="638.5" y="701.0" width="341" height="6.5" fill="url(#m4)"/>
<rect x="638.5" y="707.0" width="341" height="6.5" fill="url(#m5)"/>
<rect x="638.5" y="713.0" width="341" height="6.5" fill="url(#m6)"/>
<rect x="638.5" y="719.0" width="341" height="6.5" fill="url(#m7)"/>
<rect x="638.5" y="725.0" width="341" height="6.5" fill="url(#m8)"/>
<rect x="638.5" y="731.0" width="341" height="6.5" fill="url(#m9)"/>
<rect x="638.5" y="737.0" width="341" height="6.5" fill="url(#m10)"/>
<rect x="638.5" y="743.0" width="341" height="6.5" fill="url(#m11)"/>
<rect x="638.5" y="749.0" width="341" height="6.5" fill="url(#m12)"/>
<rect x="638.5" y="755.0" width="341" height="6.5" fill="url(#m13)"/>
<rect x="638.5" y="761.0" width="341" height="6.5" fill="url(#m14)"/>
<rect x="638.5" y="767.0" width="341" height="6.5" fill="url(#m15)"/>
<rect x="638.5" y="773.0" width="341" height="6.5" fill="url(#m16)"/>
<rect x="638.5" y="779.0" width="341" height="6.5" fill="url(#m17)"/>
<rect x="638.5" y="785.0" width="341" height="6.5" fill="url(#m18)"/>
<rect x="638.5" y="791.0" width="341" height="6.5" fill="url(#m19)"/>
<rect x="638.5" y="797.0" width="341" height="6.5" fill="url(#m20)"/>
<rect x="638.5" y="803.0" width="341" height="6.5" fill="url(#m21)"/>
<rect x="638.5" y="809.0" width="341" height="6.5" fill="url(#m22)"/>
<rect x="638.5" y="815.0" width="341" height="6.5" fill="url(#m23)"/>
<rect x="638.5" y="821.0" width="341" height="6.5" fill="url(#m24)"/>
<rect x="638.5" y="827.0" width="341" height="6.5" fill="url(#m25)"/>
<rect x="638.5" y="833.0" width="341" height="6.5" fill="url(#m26)"/>
<rect x="638.5" y="839.0" width="341" height="6.5" fill="url(#m27)"/>
<rect x="638.5" y="845.0" width="341" height="6.5" fill="url(#m28)"/>
<rect x="638.5" y="851.0" width="341" height="6.5" fill="url(#m29)"/>
<rect x="638.5" y="857.0" width="341" height="6.5" fill="url(#m30)"/>
<rect x="638.5" y="863.0" width="341" height="6.5" fill="url(#m31)"/>
<rect x="638.5" y="869.0" width="341" height="6.5" fill="url(#m32)"/>
<rect x="638.5" y="677" width="341" height="198" fill="none" stroke="#b4b4b4"/>
<rect x="801.4" y="768.6" width="13.2" height="13.2" fill="#fff" stroke="#000" stroke-width="2.2"/>
<circle cx="752.3" cy="792.2" r="4.1" fill="#c8c8c8" stroke="#111" stroke-width="1.2"/>
<circle cx="755.9" cy="790.2" r="4.1" fill="#fff" stroke="#111" stroke-width="1.2"/>
<rect x="996" y="661" width="653" height="224" fill="#111"/>
<rect x="997" y="662" width="633.5" height="223" fill="#3c3c3c"/>
<rect x="997" y="662" width="633.5" height="34" fill="url(#thg)"/>
<g clip-path="url(#tclip)">
<rect x="997" y="696" width="633.5" height="31" fill="#3d3d3d"/>
<rect x="997" y="727" width="633.5" height="31" fill="#828282"/>
<rect x="997" y="758" width="633.5" height="31" fill="#3d3d3d"/>
<rect x="997" y="789" width="633.5" height="31" fill="#828282"/>
<rect x="997" y="820" width="633.5" height="31" fill="#3d3d3d"/>
<rect x="997" y="851" width="633.5" height="31" fill="#828282"/>
<text x="1108.3" y="685.6" font-size="17.7" fill="#f2f2f2" textLength="41.9" lengthAdjust="spacingAndGlyphs">White</text>
<text x="1194.3" y="685.6" font-size="17.7" fill="#f2f2f2" textLength="25" lengthAdjust="spacingAndGlyphs">Red</text>
<text x="1263.5" y="685.6" font-size="17.7" fill="#f2f2f2" textLength="42.5" lengthAdjust="spacingAndGlyphs">Green</text>
<text x="1347.3" y="685.6" font-size="17.7" fill="#f2f2f2" textLength="30.5" lengthAdjust="spacingAndGlyphs">Blue</text>
<text x="1423.4" y="685.6" font-size="17.7" fill="#f2f2f2" textLength="33.4" lengthAdjust="spacingAndGlyphs">Cyan</text>
<text x="1487.5" y="685.6" font-size="17.7" fill="#f2f2f2" textLength="61.2" lengthAdjust="spacingAndGlyphs">Magenta</text>
<text x="1573.6" y="685.6" font-size="17.7" fill="#f2f2f2" textLength="44.4" lengthAdjust="spacingAndGlyphs">Yellow</text>
<text x="1010.6" y="718.9" font-size="19.8" fill="#f6f6f6" textLength="62.7" lengthAdjust="spacingAndGlyphs" font-weight="bold">x: CIE31</text>
<text x="1094.8" y="718.9" font-size="19.8" fill="#f6f6f6" textLength="49.5" lengthAdjust="spacingAndGlyphs">0,3046</text>
<text x="1172.7" y="718.9" font-size="19.8" fill="#f6f6f6" textLength="49.5" lengthAdjust="spacingAndGlyphs">0,6471</text>
<text x="1250.6" y="718.9" font-size="19.8" fill="#f6f6f6" textLength="49.5" lengthAdjust="spacingAndGlyphs">0,3000</text>
<text x="1328.5" y="718.9" font-size="19.8" fill="#f6f6f6" textLength="49.5" lengthAdjust="spacingAndGlyphs">0,1537</text>
<text x="1406.4" y="718.9" font-size="19.8" fill="#f6f6f6" textLength="49.5" lengthAdjust="spacingAndGlyphs">0,2228</text>
<text x="1484.3" y="718.9" font-size="19.8" fill="#f6f6f6" textLength="49.5" lengthAdjust="spacingAndGlyphs">0,3078</text>
<text x="1562.2" y="718.9" font-size="19.8" fill="#f6f6f6" textLength="49.5" lengthAdjust="spacingAndGlyphs">0,4133</text>
<text x="1010.6" y="749.9" font-size="19.8" fill="#f6f6f6" textLength="62.7" lengthAdjust="spacingAndGlyphs" font-weight="bold">y: CIE31</text>
<text x="1094.8" y="749.9" font-size="19.8" fill="#f6f6f6" textLength="49.5" lengthAdjust="spacingAndGlyphs">0,3250</text>
<text x="1172.7" y="749.9" font-size="19.8" fill="#f6f6f6" textLength="49.5" lengthAdjust="spacingAndGlyphs">0,3310</text>
<text x="1250.6" y="749.9" font-size="19.8" fill="#f6f6f6" textLength="49.5" lengthAdjust="spacingAndGlyphs">0,6023</text>
<text x="1328.5" y="749.9" font-size="19.8" fill="#f6f6f6" textLength="49.5" lengthAdjust="spacingAndGlyphs">0,0631</text>
<text x="1406.4" y="749.9" font-size="19.8" fill="#f6f6f6" textLength="49.5" lengthAdjust="spacingAndGlyphs">0,3227</text>
<text x="1484.3" y="749.9" font-size="19.8" fill="#f6f6f6" textLength="49.5" lengthAdjust="spacingAndGlyphs">0,1470</text>
<text x="1562.2" y="749.9" font-size="19.8" fill="#f6f6f6" textLength="49.5" lengthAdjust="spacingAndGlyphs">0,5102</text>
<text x="1010.6" y="780.9" font-size="19.8" fill="#f6f6f6" textLength="10.5" lengthAdjust="spacingAndGlyphs" font-weight="bold">Y</text>
<text x="1094.8" y="780.9" font-size="19.8" fill="#f6f6f6" textLength="67.9" lengthAdjust="spacingAndGlyphs">218,7677</text>
<text x="1172.7" y="780.9" font-size="19.8" fill="#f6f6f6" textLength="58.7" lengthAdjust="spacingAndGlyphs">41,5217</text>
<text x="1250.6" y="780.9" font-size="19.8" fill="#f6f6f6" textLength="67.9" lengthAdjust="spacingAndGlyphs">154,1929</text>
<text x="1328.5" y="780.9" font-size="19.8" fill="#f6f6f6" textLength="58.7" lengthAdjust="spacingAndGlyphs">16,9855</text>
<text x="1406.4" y="780.9" font-size="19.8" fill="#f6f6f6" textLength="67.9" lengthAdjust="spacingAndGlyphs">172,9389</text>
<text x="1484.3" y="780.9" font-size="19.8" fill="#f6f6f6" textLength="58.7" lengthAdjust="spacingAndGlyphs">59,3345</text>
<text x="1562.2" y="780.9" font-size="19.8" fill="#f6f6f6" textLength="67.9" lengthAdjust="spacingAndGlyphs">199,6730</text>
<text x="1010.6" y="811.9" font-size="19.8" fill="#f6f6f6" textLength="66.2" lengthAdjust="spacingAndGlyphs" font-weight="bold">Target Y</text>
<text x="1094.8" y="811.9" font-size="19.8" fill="#f6f6f6" textLength="67.9" lengthAdjust="spacingAndGlyphs">219,0671</text>
<text x="1172.7" y="811.9" font-size="19.8" fill="#f6f6f6" textLength="58.7" lengthAdjust="spacingAndGlyphs">46,5859</text>
<text x="1250.6" y="811.9" font-size="19.8" fill="#f6f6f6" textLength="67.9" lengthAdjust="spacingAndGlyphs">156,6677</text>
<text x="1328.5" y="811.9" font-size="19.8" fill="#f6f6f6" textLength="58.7" lengthAdjust="spacingAndGlyphs">15,8135</text>
<text x="1406.4" y="811.9" font-size="19.8" fill="#f6f6f6" textLength="67.9" lengthAdjust="spacingAndGlyphs">172,4811</text>
<text x="1484.3" y="811.9" font-size="19.8" fill="#f6f6f6" textLength="58.7" lengthAdjust="spacingAndGlyphs">62,3994</text>
<text x="1562.2" y="811.9" font-size="19.8" fill="#f6f6f6" textLength="67.9" lengthAdjust="spacingAndGlyphs">203,2536</text>
<text x="1010.6" y="842.9" font-size="19.8" fill="#f6f6f6" textLength="66.2" lengthAdjust="spacingAndGlyphs" font-weight="bold">ΔE 2000</text>
<text x="1094.8" y="842.9" font-size="19.8" fill="#f6f6f6" textLength="49.5" lengthAdjust="spacingAndGlyphs">3,4368</text>
<text x="1172.7" y="842.9" font-size="19.8" fill="#f6f6f6" textLength="49.5" lengthAdjust="spacingAndGlyphs">2,1412</text>
<text x="1250.6" y="842.9" font-size="19.8" fill="#f6f6f6" textLength="49.5" lengthAdjust="spacingAndGlyphs">0,3644</text>
<text x="1328.5" y="842.9" font-size="19.8" fill="#f6f6f6" textLength="49.5" lengthAdjust="spacingAndGlyphs">0,7072</text>
<text x="1406.4" y="842.9" font-size="19.8" fill="#f6f6f6" textLength="49.5" lengthAdjust="spacingAndGlyphs">1,3684</text>
<text x="1484.3" y="842.9" font-size="19.8" fill="#f6f6f6" textLength="49.5" lengthAdjust="spacingAndGlyphs">1,6098</text>
<text x="1562.2" y="842.9" font-size="19.8" fill="#f6f6f6" textLength="49.5" lengthAdjust="spacingAndGlyphs">1,5775</text>
<text x="1010.6" y="873.9" font-size="19.8" fill="#f6f6f6" textLength="53" lengthAdjust="spacingAndGlyphs" font-weight="bold">ΔE ITP</text>
<text x="1094.8" y="873.9" font-size="19.8" fill="#f6f6f6" textLength="49.5" lengthAdjust="spacingAndGlyphs">4,8573</text>
<text x="1172.7" y="873.9" font-size="19.8" fill="#f6f6f6" textLength="49.5" lengthAdjust="spacingAndGlyphs">0,1830</text>
<text x="1250.6" y="873.9" font-size="19.8" fill="#f6f6f6" textLength="49.5" lengthAdjust="spacingAndGlyphs">1,5007</text>
<text x="1328.5" y="873.9" font-size="19.8" fill="#f6f6f6" textLength="49.5" lengthAdjust="spacingAndGlyphs">0,0005</text>
<text x="1406.4" y="873.9" font-size="19.8" fill="#f6f6f6" textLength="49.5" lengthAdjust="spacingAndGlyphs">2,1119</text>
<text x="1484.3" y="873.9" font-size="19.8" fill="#f6f6f6" textLength="49.5" lengthAdjust="spacingAndGlyphs">0,7717</text>
<text x="1562.2" y="873.9" font-size="19.8" fill="#f6f6f6" textLength="49.5" lengthAdjust="spacingAndGlyphs">4,0302</text>
</g>
<rect x="1630.5" y="662" width="17.5" height="34" fill="#2c2c2c"/>
<rect x="1630.5" y="866.3" width="17.5" height="18.7" fill="#323232"/>
<rect x="1630.5" y="696" width="18" height="170.3" fill="#5a5a5a"/>
<rect x="997" y="866.3" width="633.5" height="18.7" fill="#5a5a5a"/>
<rect x="1632.5" y="717.5" width="13" height="105.5" rx="6.5" fill="#3a3a3a"/>
<rect x="1014" y="868" width="529.5" height="15" rx="7.5" fill="#3a3a3a"/>
<rect x="1632.2" y="697.8" width="14" height="15" rx="3" fill="#747474" stroke="#8a8a8a" stroke-width="0.8"/><path d="M1634.5,709 h9 l-4.5,-5.5 z" fill="#444"/>
<rect x="1632.2" y="848.8" width="14" height="15.6" rx="3" fill="#747474" stroke="#8a8a8a" stroke-width="0.8"/><path d="M1634.5,853.5 h9 l-4.5,6 z" fill="#2c2c2c"/>
<rect x="999" y="868.6" width="13.8" height="14.6" rx="3" fill="#747474" stroke="#8a8a8a" stroke-width="0.8"/><path d="M1009.5,871.5 v9 l-6,-4.5 z" fill="#2c2c2c"/>
<rect x="1615.2" y="868.6" width="13.8" height="14.6" rx="3" fill="#747474" stroke="#8a8a8a" stroke-width="0.8"/><path d="M1619,871.5 v9 l6,-4.5 z" fill="#2c2c2c"/>
<rect x="2.4" y="929.5" width="155.2" height="70" rx="4" fill="url(#bbg)"/>
<rect x="8.4" y="936" width="143.5" height="45" rx="4" fill="#c0c0c0" stroke="#000" stroke-opacity="0.22" stroke-width="1.2"/>
<rect x="160.5" y="929.5" width="155.2" height="70" rx="4" fill="url(#bbg)"/>
<rect x="166.5" y="936" width="143.5" height="45" rx="4" fill="#c00000" stroke="#000" stroke-opacity="0.22" stroke-width="1.2"/>
<rect x="318.6" y="929.5" width="155.2" height="70" rx="4" fill="url(#bbg)"/>
<rect x="324.6" y="936" width="143.5" height="45" rx="4" fill="#00c000" stroke="#000" stroke-opacity="0.22" stroke-width="1.2"/>
<rect x="476.7" y="929.5" width="155.2" height="70" rx="4" fill="url(#bbg)"/>
<rect x="482.7" y="936" width="143.5" height="45" rx="4" fill="#0000c0" stroke="#000" stroke-opacity="0.22" stroke-width="1.2"/>
<rect x="634.8" y="929.5" width="155.2" height="70" rx="4" fill="url(#bbg)"/>
<rect x="640.8" y="936" width="143.5" height="45" rx="4" fill="#00c0c0" stroke="#000" stroke-opacity="0.22" stroke-width="1.2"/>
<rect x="792.9" y="929.5" width="155.2" height="70" rx="4" fill="url(#bbg)"/>
<rect x="798.9" y="936" width="143.5" height="45" rx="4" fill="#c000c0" stroke="#000" stroke-opacity="0.22" stroke-width="1.2"/>
<rect x="951.0" y="929.5" width="155.2" height="70" rx="4" fill="url(#bbg)"/>
<rect x="957.0" y="936" width="143.5" height="45" rx="4" fill="#c0c000" stroke="#000" stroke-opacity="0.22" stroke-width="1.2"/>
<rect x="1109.1" y="929.5" width="155.2" height="70" rx="4" fill="#1a1a1a"/>
<rect x="1115.1" y="936" width="143.5" height="45" rx="4" fill="#ffffff" stroke="#000" stroke-opacity="0.9" stroke-width="1.2"/>
<path d="M1267,984 V934 Q1267,929.5 1271.5,929.5 H1322.5 Q1327,929.5 1327,934 V984 Z" fill="url(#cbg)"/>
<line x1="1267" y1="952.5" x2="1327" y2="952.5" stroke="#5a5a5a" stroke-width="1"/>
<ellipse cx="1297" cy="940" rx="9" ry="8" fill="#7a7a7a"/>
<path d="M1291,943 h12 l-6,-6.5 z" fill="#2a2a2a"/>
<rect x="1277.5" y="960.5" width="39.5" height="40" rx="5" fill="#2e2e2e"/>
<rect x="1280.5" y="963.5" width="33.5" height="40" rx="3.5" fill="#8a8a8a" stroke="#c8c8c8" stroke-width="1.5"/>
<rect x="1288.5" y="971" width="18" height="20" fill="#0a0a0a"/>
<rect x="1328.3" y="929.5" width="58.1" height="37" fill="url(#cbg)"/>
<circle cx="1357.3" cy="947.5" r="13" fill="url(#cbc)"/>
<rect x="1387.4" y="929.5" width="54.8" height="37" fill="url(#cbg)"/>
<circle cx="1414.8" cy="947.5" r="13" fill="url(#cbc)"/>
<rect x="1443.2" y="929.5" width="55.0" height="37" fill="url(#cbg)"/>
<circle cx="1470.7" cy="947.5" r="13" fill="url(#cbc)"/>
<rect x="1500.0" y="929.5" width="55.4" height="37" fill="url(#cbg)"/>
<circle cx="1527.7" cy="947.5" r="13" fill="url(#cbc)"/>
<rect x="1556.4" y="929.5" width="54.6" height="37" fill="url(#cbg)"/>
<circle cx="1583.7" cy="947.5" r="13" fill="url(#cbc)"/>
<rect x="1352.8" y="942.5" width="10" height="10" fill="#2c2c2c"/>
<path d="M1410.8,941.5 v12 l10,-6 z" fill="#2c2c2c"/>
<path d="M1466.7,941.5 h-3.5 v12 h3.5 M1474.7,941.5 h3.5 v12 h-3.5" fill="none" stroke="#2c2c2c" stroke-width="2"/>
<path d="M1466.7,947.5 h8" stroke="#2c2c2c" stroke-width="1.6" stroke-dasharray="2 1.2"/>
<path d="M1527.3,947.5 c-2.5,-4 -8,-4 -8,0 s5.500,4 8,0 s8,-4 8,0 s-5.500,4 -8,0 z" fill="none" stroke="#2c2c2c" stroke-width="2"/>
<g fill="none" stroke="#2c2c2c" stroke-width="2.6"><path d="M1577.2,946 a6.5,6.5 0 0 1 11.500,-3.200"/><path d="M1590.2,949 a6.5,6.5 0 0 1 -11.500,3.200"/></g>
<path d="M1586.2,944.8 h5.500 v-5.500 z M1581.2,950.2 h-5.500 v5.500 z" fill="#2c2c2c"/>
<path d="M1328.3,984 V972 Q1328.3,968.5 1332,968.5 H1498.2 V984 Z" fill="url(#bng)"/>
<path d="M1500,984 V968.5 H1670 V984 Z" fill="url(#bng)"/>
<circle cx="1365.5" cy="990" r="15.5" fill="#929292"/><circle cx="1633.5" cy="990" r="15.5" fill="#929292"/>
<text x="1401" y="998" font-size="29" fill="#2e2e2e" textLength="56.5" lengthAdjust="spacingAndGlyphs" font-weight="bold">Back</text>
<text x="1534.5" y="998" font-size="29" fill="#2e2e2e" textLength="60.5" lengthAdjust="spacingAndGlyphs" font-weight="bold">Next</text>
<text x="1365.5" y="992" font-size="24" fill="#3a3a3a" text-anchor="middle" font-weight="bold">«</text>
<text x="1633.5" y="992" font-size="24" fill="#3a3a3a" text-anchor="middle" font-weight="bold">»</text>
<g transform="translate(1640.1,948)" fill="#111" fill-opacity="0.7" filter="url(#ash)"><path d="M-2,0 L-4,-15 Q-4.2,-17 -2.4,-17 H2.4 Q4.2,-17 4,-15 L2,0 Z" transform="rotate(0)"/><path d="M-2,0 L-4,-15 Q-4.2,-17 -2.4,-17 H2.4 Q4.2,-17 4,-15 L2,0 Z" transform="rotate(60)"/><path d="M-2,0 L-4,-15 Q-4.2,-17 -2.4,-17 H2.4 Q4.2,-17 4,-15 L2,0 Z" transform="rotate(120)"/><path d="M-2,0 L-4,-15 Q-4.2,-17 -2.4,-17 H2.4 Q4.2,-17 4,-15 L2,0 Z" transform="rotate(180)"/><path d="M-2,0 L-4,-15 Q-4.2,-17 -2.4,-17 H2.4 Q4.2,-17 4,-15 L2,0 Z" transform="rotate(240)"/><path d="M-2,0 L-4,-15 Q-4.2,-17 -2.4,-17 H2.4 Q4.2,-17 4,-15 L2,0 Z" transform="rotate(300)"/></g>
<g transform="translate(1638.6,946.6)" fill="#ee0c0c"><path d="M-2,0 L-4,-15 Q-4.2,-17 -2.4,-17 H2.4 Q4.2,-17 4,-15 L2,0 Z" transform="rotate(0)"/><path d="M-2,0 L-4,-15 Q-4.2,-17 -2.4,-17 H2.4 Q4.2,-17 4,-15 L2,0 Z" transform="rotate(60)"/><path d="M-2,0 L-4,-15 Q-4.2,-17 -2.4,-17 H2.4 Q4.2,-17 4,-15 L2,0 Z" transform="rotate(120)"/><path d="M-2,0 L-4,-15 Q-4.2,-17 -2.4,-17 H2.4 Q4.2,-17 4,-15 L2,0 Z" transform="rotate(180)"/><path d="M-2,0 L-4,-15 Q-4.2,-17 -2.4,-17 H2.4 Q4.2,-17 4,-15 L2,0 Z" transform="rotate(240)"/><path d="M-2,0 L-4,-15 Q-4.2,-17 -2.4,-17 H2.4 Q4.2,-17 4,-15 L2,0 Z" transform="rotate(300)"/><circle r="3" /></g>
<rect x="1664.5" y="0" width="5.5" height="984" fill="url(#edgs)"/>
</svg>
</body></html>
